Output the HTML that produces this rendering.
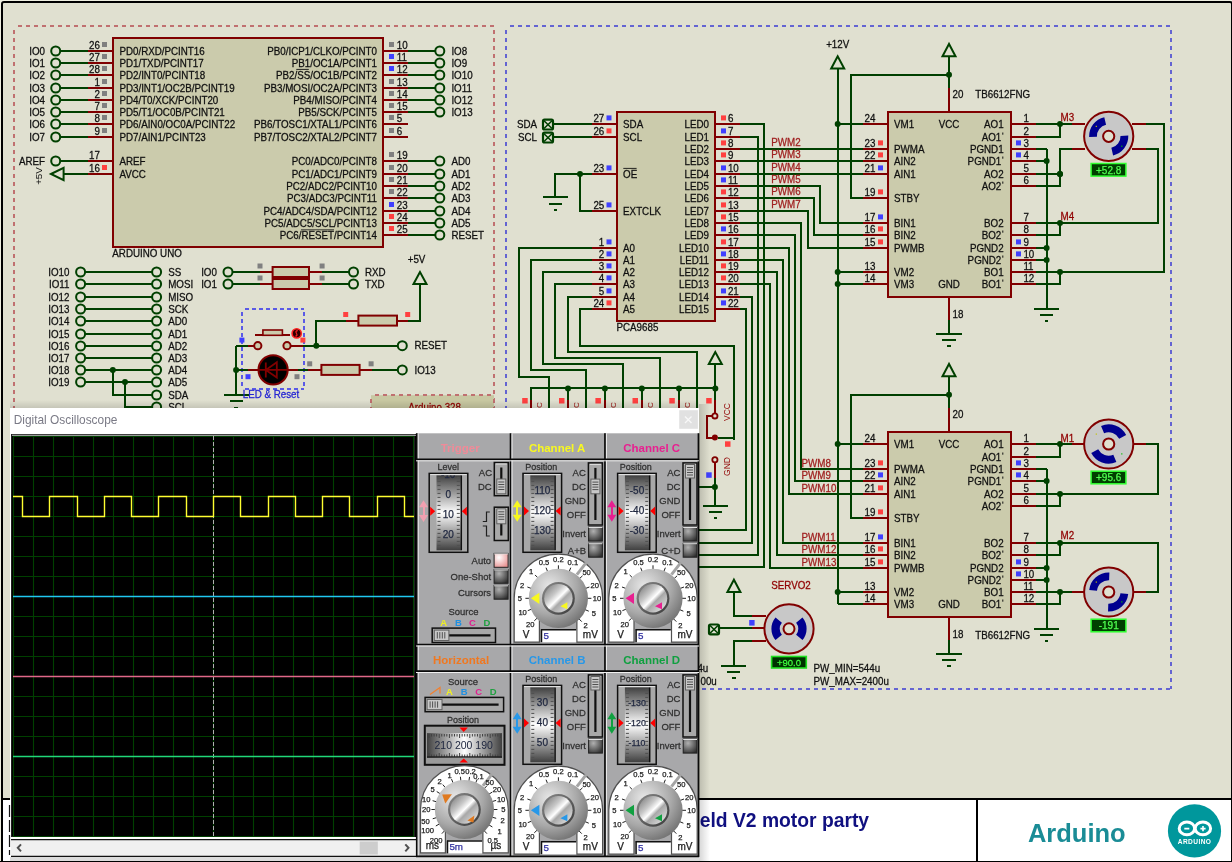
<!DOCTYPE html>
<html><head><meta charset="utf-8"><style>
html,body{margin:0;padding:0;width:1232px;height:862px;overflow:hidden;background:#e0e0d0}
svg{display:block;font-family:"Liberation Sans",sans-serif;will-change:transform}
</style></head><body>
<svg width="1232" height="862" viewBox="0 0 1232 862">
<rect x="0" y="0" width="1232" height="862" fill="#eeeee0"/>
<rect x="2" y="2" width="1229" height="860" fill="rgb(224,224,208)"/>
<line x1="506" y1="26" x2="1171" y2="26" stroke="#6464d2" stroke-width="2" stroke-dasharray="4 4" stroke-dashoffset="4"/>
<line x1="506" y1="26" x2="506" y2="689" stroke="#6464d2" stroke-width="2" stroke-dasharray="4 4" stroke-dashoffset="4"/>
<line x1="1171" y1="26" x2="1171" y2="689" stroke="#6464d2" stroke-width="2" stroke-dasharray="4 4" stroke-dashoffset="4"/>
<line x1="506" y1="689" x2="1171" y2="689" stroke="#6464d2" stroke-width="2" stroke-dasharray="4 4" stroke-dashoffset="4"/>
<rect x="617" y="112" width="98" height="209" fill="rgb(203,203,172)" stroke="#800000" stroke-width="2" />
<polyline fill="none" stroke="#800000" stroke-width="2" points="592,124 617,124"/>
<text transform="translate(623.1 127.5) scale(1 1.02)" font-size="9.8" fill="#101010" text-anchor="start" font-weight="normal" stroke="#101010" stroke-width="0.25" >SDA</text>
<text transform="translate(604.3 121.7) scale(1 1.02)" font-size="9.8" fill="#101010" text-anchor="end" font-weight="normal" stroke="#101010" stroke-width="0.25" >27</text>
<rect x="606.5" y="115.4" width="5" height="5" fill="#4040ff"/>
<polyline fill="none" stroke="#800000" stroke-width="2" points="592,137 617,137"/>
<text transform="translate(623.1 140.5) scale(1 1.02)" font-size="9.8" fill="#101010" text-anchor="start" font-weight="normal" stroke="#101010" stroke-width="0.25" >SCL</text>
<text transform="translate(604.3 134.7) scale(1 1.02)" font-size="9.8" fill="#101010" text-anchor="end" font-weight="normal" stroke="#101010" stroke-width="0.25" >26</text>
<rect x="606.5" y="128.4" width="5" height="5" fill="#ff4040"/>
<polyline fill="none" stroke="#800000" stroke-width="2" points="592,174 617,174"/>
<text transform="translate(623.1 177.5) scale(1 1.02)" font-size="9.8" fill="#101010" text-anchor="start" font-weight="normal" stroke="#101010" stroke-width="0.25" >OE</text>
<text transform="translate(604.3 171.7) scale(1 1.02)" font-size="9.8" fill="#101010" text-anchor="end" font-weight="normal" stroke="#101010" stroke-width="0.25" >23</text>
<rect x="606.5" y="165.4" width="5" height="5" fill="#4040ff"/>
<polyline fill="none" stroke="#800000" stroke-width="2" points="592,211 617,211"/>
<text transform="translate(623.1 214.5) scale(1 1.02)" font-size="9.8" fill="#101010" text-anchor="start" font-weight="normal" stroke="#101010" stroke-width="0.25" >EXTCLK</text>
<text transform="translate(604.3 208.7) scale(1 1.02)" font-size="9.8" fill="#101010" text-anchor="end" font-weight="normal" stroke="#101010" stroke-width="0.25" >25</text>
<rect x="606.5" y="202.4" width="5" height="5" fill="#4040ff"/>
<polyline fill="none" stroke="#800000" stroke-width="2" points="592,248 617,248"/>
<text transform="translate(623.1 251.5) scale(1 1.02)" font-size="9.8" fill="#101010" text-anchor="start" font-weight="normal" stroke="#101010" stroke-width="0.25" >A0</text>
<text transform="translate(604.3 245.7) scale(1 1.02)" font-size="9.8" fill="#101010" text-anchor="end" font-weight="normal" stroke="#101010" stroke-width="0.25" >1</text>
<rect x="606.5" y="239.4" width="5" height="5" fill="#4040ff"/>
<polyline fill="none" stroke="#800000" stroke-width="2" points="592,260 617,260"/>
<text transform="translate(623.1 263.5) scale(1 1.02)" font-size="9.8" fill="#101010" text-anchor="start" font-weight="normal" stroke="#101010" stroke-width="0.25" >A1</text>
<text transform="translate(604.3 257.7) scale(1 1.02)" font-size="9.8" fill="#101010" text-anchor="end" font-weight="normal" stroke="#101010" stroke-width="0.25" >2</text>
<rect x="606.5" y="251.4" width="5" height="5" fill="#4040ff"/>
<polyline fill="none" stroke="#800000" stroke-width="2" points="592,272 617,272"/>
<text transform="translate(623.1 275.5) scale(1 1.02)" font-size="9.8" fill="#101010" text-anchor="start" font-weight="normal" stroke="#101010" stroke-width="0.25" >A2</text>
<text transform="translate(604.3 269.7) scale(1 1.02)" font-size="9.8" fill="#101010" text-anchor="end" font-weight="normal" stroke="#101010" stroke-width="0.25" >3</text>
<rect x="606.5" y="263.4" width="5" height="5" fill="#4040ff"/>
<polyline fill="none" stroke="#800000" stroke-width="2" points="592,284 617,284"/>
<text transform="translate(623.1 287.5) scale(1 1.02)" font-size="9.8" fill="#101010" text-anchor="start" font-weight="normal" stroke="#101010" stroke-width="0.25" >A3</text>
<text transform="translate(604.3 281.7) scale(1 1.02)" font-size="9.8" fill="#101010" text-anchor="end" font-weight="normal" stroke="#101010" stroke-width="0.25" >4</text>
<rect x="606.5" y="275.4" width="5" height="5" fill="#4040ff"/>
<polyline fill="none" stroke="#800000" stroke-width="2" points="592,297 617,297"/>
<text transform="translate(623.1 300.5) scale(1 1.02)" font-size="9.8" fill="#101010" text-anchor="start" font-weight="normal" stroke="#101010" stroke-width="0.25" >A4</text>
<text transform="translate(604.3 294.7) scale(1 1.02)" font-size="9.8" fill="#101010" text-anchor="end" font-weight="normal" stroke="#101010" stroke-width="0.25" >5</text>
<rect x="606.5" y="288.4" width="5" height="5" fill="#4040ff"/>
<polyline fill="none" stroke="#800000" stroke-width="2" points="592,309 617,309"/>
<text transform="translate(623.1 312.5) scale(1 1.02)" font-size="9.8" fill="#101010" text-anchor="start" font-weight="normal" stroke="#101010" stroke-width="0.25" >A5</text>
<text transform="translate(604.3 306.7) scale(1 1.02)" font-size="9.8" fill="#101010" text-anchor="end" font-weight="normal" stroke="#101010" stroke-width="0.25" >24</text>
<rect x="606.5" y="300.4" width="5" height="5" fill="#ff4040"/>
<line x1="623.3" y1="168.4" x2="636.6" y2="168.4" stroke="#101010" stroke-width="0.9"/>
<polyline fill="none" stroke="#800000" stroke-width="2" points="715,124 740,124"/>
<text transform="translate(709 127.5) scale(1 1.02)" font-size="9.8" fill="#101010" text-anchor="end" font-weight="normal" stroke="#101010" stroke-width="0.25" >LED0</text>
<text transform="translate(727.9 121.7) scale(1 1.02)" font-size="9.8" fill="#101010" text-anchor="start" font-weight="normal" stroke="#101010" stroke-width="0.25" >6</text>
<rect x="721" y="115.4" width="5" height="5" fill="#ff4040"/>
<polyline fill="none" stroke="#800000" stroke-width="2" points="715,137 740,137"/>
<text transform="translate(709 140.5) scale(1 1.02)" font-size="9.8" fill="#101010" text-anchor="end" font-weight="normal" stroke="#101010" stroke-width="0.25" >LED1</text>
<text transform="translate(727.9 134.7) scale(1 1.02)" font-size="9.8" fill="#101010" text-anchor="start" font-weight="normal" stroke="#101010" stroke-width="0.25" >7</text>
<rect x="721" y="128.4" width="5" height="5" fill="#4040ff"/>
<polyline fill="none" stroke="#800000" stroke-width="2" points="715,149 740,149"/>
<text transform="translate(709 152.5) scale(1 1.02)" font-size="9.8" fill="#101010" text-anchor="end" font-weight="normal" stroke="#101010" stroke-width="0.25" >LED2</text>
<text transform="translate(727.9 146.7) scale(1 1.02)" font-size="9.8" fill="#101010" text-anchor="start" font-weight="normal" stroke="#101010" stroke-width="0.25" >8</text>
<rect x="721" y="140.4" width="5" height="5" fill="#ff4040"/>
<polyline fill="none" stroke="#800000" stroke-width="2" points="715,161 740,161"/>
<text transform="translate(709 164.5) scale(1 1.02)" font-size="9.8" fill="#101010" text-anchor="end" font-weight="normal" stroke="#101010" stroke-width="0.25" >LED3</text>
<text transform="translate(727.9 158.7) scale(1 1.02)" font-size="9.8" fill="#101010" text-anchor="start" font-weight="normal" stroke="#101010" stroke-width="0.25" >9</text>
<rect x="721" y="152.4" width="5" height="5" fill="#ff4040"/>
<polyline fill="none" stroke="#800000" stroke-width="2" points="715,174 740,174"/>
<text transform="translate(709 177.5) scale(1 1.02)" font-size="9.8" fill="#101010" text-anchor="end" font-weight="normal" stroke="#101010" stroke-width="0.25" >LED4</text>
<text transform="translate(727.9 171.7) scale(1 1.02)" font-size="9.8" fill="#101010" text-anchor="start" font-weight="normal" stroke="#101010" stroke-width="0.25" >10</text>
<rect x="721" y="165.4" width="5" height="5" fill="#4040ff"/>
<polyline fill="none" stroke="#800000" stroke-width="2" points="715,186 740,186"/>
<text transform="translate(709 189.5) scale(1 1.02)" font-size="9.8" fill="#101010" text-anchor="end" font-weight="normal" stroke="#101010" stroke-width="0.25" >LED5</text>
<text transform="translate(727.9 183.7) scale(1 1.02)" font-size="9.8" fill="#101010" text-anchor="start" font-weight="normal" stroke="#101010" stroke-width="0.25" >11</text>
<rect x="721" y="177.4" width="5" height="5" fill="#4040ff"/>
<polyline fill="none" stroke="#800000" stroke-width="2" points="715,198 740,198"/>
<text transform="translate(709 201.5) scale(1 1.02)" font-size="9.8" fill="#101010" text-anchor="end" font-weight="normal" stroke="#101010" stroke-width="0.25" >LED6</text>
<text transform="translate(727.9 195.7) scale(1 1.02)" font-size="9.8" fill="#101010" text-anchor="start" font-weight="normal" stroke="#101010" stroke-width="0.25" >12</text>
<rect x="721" y="189.4" width="5" height="5" fill="#ff4040"/>
<polyline fill="none" stroke="#800000" stroke-width="2" points="715,211 740,211"/>
<text transform="translate(709 214.5) scale(1 1.02)" font-size="9.8" fill="#101010" text-anchor="end" font-weight="normal" stroke="#101010" stroke-width="0.25" >LED7</text>
<text transform="translate(727.9 208.7) scale(1 1.02)" font-size="9.8" fill="#101010" text-anchor="start" font-weight="normal" stroke="#101010" stroke-width="0.25" >13</text>
<rect x="721" y="202.4" width="5" height="5" fill="#ff4040"/>
<polyline fill="none" stroke="#800000" stroke-width="2" points="715,223 740,223"/>
<text transform="translate(709 226.5) scale(1 1.02)" font-size="9.8" fill="#101010" text-anchor="end" font-weight="normal" stroke="#101010" stroke-width="0.25" >LED8</text>
<text transform="translate(727.9 220.7) scale(1 1.02)" font-size="9.8" fill="#101010" text-anchor="start" font-weight="normal" stroke="#101010" stroke-width="0.25" >15</text>
<rect x="721" y="214.4" width="5" height="5" fill="#ff4040"/>
<polyline fill="none" stroke="#800000" stroke-width="2" points="715,235 740,235"/>
<text transform="translate(709 238.5) scale(1 1.02)" font-size="9.8" fill="#101010" text-anchor="end" font-weight="normal" stroke="#101010" stroke-width="0.25" >LED9</text>
<text transform="translate(727.9 232.7) scale(1 1.02)" font-size="9.8" fill="#101010" text-anchor="start" font-weight="normal" stroke="#101010" stroke-width="0.25" >16</text>
<rect x="721" y="226.4" width="5" height="5" fill="#4040ff"/>
<polyline fill="none" stroke="#800000" stroke-width="2" points="715,248 740,248"/>
<text transform="translate(709 251.5) scale(1 1.02)" font-size="9.8" fill="#101010" text-anchor="end" font-weight="normal" stroke="#101010" stroke-width="0.25" >LED10</text>
<text transform="translate(727.9 245.7) scale(1 1.02)" font-size="9.8" fill="#101010" text-anchor="start" font-weight="normal" stroke="#101010" stroke-width="0.25" >17</text>
<rect x="721" y="239.4" width="5" height="5" fill="#ff4040"/>
<polyline fill="none" stroke="#800000" stroke-width="2" points="715,260 740,260"/>
<text transform="translate(709 263.5) scale(1 1.02)" font-size="9.8" fill="#101010" text-anchor="end" font-weight="normal" stroke="#101010" stroke-width="0.25" >LED11</text>
<text transform="translate(727.9 257.7) scale(1 1.02)" font-size="9.8" fill="#101010" text-anchor="start" font-weight="normal" stroke="#101010" stroke-width="0.25" >18</text>
<rect x="721" y="251.4" width="5" height="5" fill="#4040ff"/>
<polyline fill="none" stroke="#800000" stroke-width="2" points="715,272 740,272"/>
<text transform="translate(709 275.5) scale(1 1.02)" font-size="9.8" fill="#101010" text-anchor="end" font-weight="normal" stroke="#101010" stroke-width="0.25" >LED12</text>
<text transform="translate(727.9 269.7) scale(1 1.02)" font-size="9.8" fill="#101010" text-anchor="start" font-weight="normal" stroke="#101010" stroke-width="0.25" >19</text>
<rect x="721" y="263.4" width="5" height="5" fill="#ff4040"/>
<polyline fill="none" stroke="#800000" stroke-width="2" points="715,284 740,284"/>
<text transform="translate(709 287.5) scale(1 1.02)" font-size="9.8" fill="#101010" text-anchor="end" font-weight="normal" stroke="#101010" stroke-width="0.25" >LED13</text>
<text transform="translate(727.9 281.7) scale(1 1.02)" font-size="9.8" fill="#101010" text-anchor="start" font-weight="normal" stroke="#101010" stroke-width="0.25" >20</text>
<rect x="721" y="275.4" width="5" height="5" fill="#ff4040"/>
<polyline fill="none" stroke="#800000" stroke-width="2" points="715,297 740,297"/>
<text transform="translate(709 300.5) scale(1 1.02)" font-size="9.8" fill="#101010" text-anchor="end" font-weight="normal" stroke="#101010" stroke-width="0.25" >LED14</text>
<text transform="translate(727.9 294.7) scale(1 1.02)" font-size="9.8" fill="#101010" text-anchor="start" font-weight="normal" stroke="#101010" stroke-width="0.25" >21</text>
<rect x="721" y="288.4" width="5" height="5" fill="#4040ff"/>
<polyline fill="none" stroke="#800000" stroke-width="2" points="715,309 740,309"/>
<text transform="translate(709 312.5) scale(1 1.02)" font-size="9.8" fill="#101010" text-anchor="end" font-weight="normal" stroke="#101010" stroke-width="0.25" >LED15</text>
<text transform="translate(727.9 306.7) scale(1 1.02)" font-size="9.8" fill="#101010" text-anchor="start" font-weight="normal" stroke="#101010" stroke-width="0.25" >22</text>
<rect x="721" y="300.4" width="5" height="5" fill="#4040ff"/>
<text transform="translate(616.5 330.6) scale(1 1.02)" font-size="9.8" fill="#101010" text-anchor="start" font-weight="normal" stroke="#101010" stroke-width="0.25" >PCA9685</text>
<rect x="543" y="119.7" width="10" height="9.8" rx="1.5" fill="none" stroke="#004000" stroke-width="2.2"/>
<path d="M544 120.7 L552 128.5 M544 128.5 L552 120.7" stroke="#004000" stroke-width="1.6"/>
<text transform="translate(537 127.5) scale(1 1.02)" font-size="9.8" fill="#101010" text-anchor="end" font-weight="normal" stroke="#101010" stroke-width="0.25" >SDA</text>
<polyline fill="none" stroke="#004000" stroke-width="2" points="554,124 592,124"/>
<rect x="543" y="132.7" width="10" height="9.8" rx="1.5" fill="none" stroke="#004000" stroke-width="2.2"/>
<path d="M544 133.7 L552 141.5 M544 141.5 L552 133.7" stroke="#004000" stroke-width="1.6"/>
<text transform="translate(537 140.5) scale(1 1.02)" font-size="9.8" fill="#101010" text-anchor="end" font-weight="normal" stroke="#101010" stroke-width="0.25" >SCL</text>
<polyline fill="none" stroke="#004000" stroke-width="2" points="554,137 592,137"/>
<polyline fill="none" stroke="#004000" stroke-width="2" points="592,174 555,174 555,197"/>
<line x1="543" y1="197" x2="568" y2="197" stroke="#004000" stroke-width="2"/>
<line x1="549" y1="204" x2="562" y2="204" stroke="#004000" stroke-width="2"/>
<line x1="554" y1="210" x2="557" y2="210" stroke="#004000" stroke-width="2"/>
<polyline fill="none" stroke="#004000" stroke-width="2" points="580,174 580,211 592,211"/>
<circle cx="580" cy="174" r="3" fill="#004000"/>
<polyline fill="none" stroke="#004000" stroke-width="2" points="592,248 519,248 519,377 549,377 549,410"/>
<polyline fill="none" stroke="#004000" stroke-width="2" points="592,260 531,260 531,370 586,370 586,410"/>
<polyline fill="none" stroke="#004000" stroke-width="2" points="592,272 543,272 543,364 623,364 623,410"/>
<polyline fill="none" stroke="#004000" stroke-width="2" points="592,284 555,284 555,358 660,358 660,410"/>
<polyline fill="none" stroke="#004000" stroke-width="2" points="592,297 568,297 568,352 697,352 697,410"/>
<polyline fill="none" stroke="#004000" stroke-width="2" points="592,309 580,309 580,346 734,346 734,440"/>
<polyline fill="none" stroke="#004000" stroke-width="2" points="531,400 531,388 715,388"/>
<circle cx="568" cy="388.5" r="3" fill="#004000"/>
<circle cx="604.9" cy="388.5" r="3" fill="#004000"/>
<circle cx="641.8" cy="388.5" r="3" fill="#004000"/>
<circle cx="679" cy="388.5" r="3" fill="#004000"/>
<circle cx="715.3" cy="388.5" r="3" fill="#004000"/>
<polyline fill="none" stroke="#004000" stroke-width="2" points="531,388 531,400"/>
<polyline fill="none" stroke="#800000" stroke-width="2" points="531,400 531,410"/>
<text transform="translate(541.6,405) rotate(-90)" font-size="8" fill="#900000" text-anchor="middle">C</text>
<polyline fill="none" stroke="#004000" stroke-width="2" points="568,388 568,400"/>
<polyline fill="none" stroke="#800000" stroke-width="2" points="568,400 568,410"/>
<text transform="translate(579,405) rotate(-90)" font-size="8" fill="#900000" text-anchor="middle">C</text>
<polyline fill="none" stroke="#004000" stroke-width="2" points="605,388 605,400"/>
<polyline fill="none" stroke="#800000" stroke-width="2" points="605,400 605,410"/>
<text transform="translate(615.9,405) rotate(-90)" font-size="8" fill="#900000" text-anchor="middle">C</text>
<polyline fill="none" stroke="#004000" stroke-width="2" points="642,388 642,400"/>
<polyline fill="none" stroke="#800000" stroke-width="2" points="642,400 642,410"/>
<text transform="translate(652.8,405) rotate(-90)" font-size="8" fill="#900000" text-anchor="middle">C</text>
<polyline fill="none" stroke="#004000" stroke-width="2" points="679,388 679,400"/>
<polyline fill="none" stroke="#800000" stroke-width="2" points="679,400 679,410"/>
<text transform="translate(690,405) rotate(-90)" font-size="8" fill="#900000" text-anchor="middle">C</text>
<rect x="522.2" y="398" width="5.5" height="5.5" fill="#ff4040"/>
<rect x="559" y="398" width="5.5" height="5.5" fill="#ff4040"/>
<rect x="595.4" y="398" width="5.5" height="5.5" fill="#ff4040"/>
<rect x="632.5" y="398" width="5.5" height="5.5" fill="#ff4040"/>
<rect x="669.3" y="398" width="5.5" height="5.5" fill="#ff4040"/>
<rect x="706.2" y="398" width="5.5" height="5.5" fill="#ff4040"/>
<polyline fill="none" stroke="#004000" stroke-width="2" points="715,364 715,400"/>
<polygon points="715.3,352 708.8,364.1 721.8,364.1" fill="none" stroke="#004000" stroke-width="2" stroke-linejoin="miter"/>
<polyline fill="none" stroke="#800000" stroke-width="2" points="715,400 715,413"/>
<polyline fill="none" stroke="#800000" stroke-width="2" points="713,416 707,416 707,438 715,438"/>
<circle cx="714.9" cy="415.9" r="2.6" fill="rgb(224,224,208)" stroke="#800000" stroke-width="1.8"/>
<circle cx="714.9" cy="437.6" r="3" fill="#800000"/>
<polyline fill="none" stroke="#004000" stroke-width="2" points="718,438 734,438 734,410"/>
<text transform="translate(729.5,412) rotate(-90)" font-size="8.5" fill="#900000" text-anchor="middle">VCC</text>
<rect x="725" y="441.3" width="5.5" height="5.5" fill="#ff4040"/>
<circle cx="714.9" cy="459.8" r="2.6" fill="rgb(224,224,208)" stroke="#800000" stroke-width="1.8"/>
<polyline fill="none" stroke="#800000" stroke-width="2" points="715,462 715,478"/>
<polyline fill="none" stroke="#004000" stroke-width="2" points="715,478 715,506"/>
<circle cx="714.9" cy="487" r="3" fill="#004000"/>
<polyline fill="none" stroke="#004000" stroke-width="2" points="699,487 715,487"/>
<line x1="703" y1="506" x2="728" y2="506" stroke="#004000" stroke-width="2"/>
<line x1="709" y1="512" x2="722" y2="512" stroke="#004000" stroke-width="2"/>
<line x1="714" y1="518" x2="717" y2="518" stroke="#004000" stroke-width="2"/>
<text transform="translate(729.5,466.5) rotate(-90)" font-size="8.5" fill="#900000" text-anchor="middle">GND</text>
<rect x="706.2" y="472.3" width="5.5" height="5.5" fill="#4040ff"/>
<line x1="14" y1="26" x2="494" y2="26" stroke="#c07070" stroke-width="2" stroke-dasharray="4 4" stroke-dashoffset="4"/>
<line x1="14" y1="26" x2="14" y2="446" stroke="#c07070" stroke-width="2" stroke-dasharray="4 4" stroke-dashoffset="4"/>
<line x1="494" y1="26" x2="494" y2="446" stroke="#c07070" stroke-width="2" stroke-dasharray="4 4" stroke-dashoffset="4"/>
<line x1="14" y1="446" x2="494" y2="446" stroke="#c07070" stroke-width="2" stroke-dasharray="4 4" stroke-dashoffset="4"/>
<rect x="113" y="38" width="270" height="209" fill="rgb(203,203,172)" stroke="#800000" stroke-width="2" />
<circle cx="55.7" cy="51" r="4.5" fill="none" stroke="#004000" stroke-width="2"/>
<polyline fill="none" stroke="#004000" stroke-width="2" points="60,51 88,51"/>
<polyline fill="none" stroke="#800000" stroke-width="2" points="88,51 113,51"/>
<text transform="translate(45 54.5) scale(1 1.02)" font-size="9.8" fill="#101010" text-anchor="end" font-weight="normal" stroke="#101010" stroke-width="0.25" >IO0</text>
<text transform="translate(100 48.7) scale(1 1.02)" font-size="9.8" fill="#101010" text-anchor="end" font-weight="normal" stroke="#101010" stroke-width="0.25" >26</text>
<rect x="102" y="42" width="5" height="5" fill="#808080"/>
<text transform="translate(119.4 54.5) scale(1 1.02)" font-size="9.8" fill="#101010" text-anchor="start" font-weight="normal" stroke="#101010" stroke-width="0.25" >PD0/RXD/PCINT16</text>
<circle cx="55.7" cy="63" r="4.5" fill="none" stroke="#004000" stroke-width="2"/>
<polyline fill="none" stroke="#004000" stroke-width="2" points="60,63 88,63"/>
<polyline fill="none" stroke="#800000" stroke-width="2" points="88,63 113,63"/>
<text transform="translate(45 66.5) scale(1 1.02)" font-size="9.8" fill="#101010" text-anchor="end" font-weight="normal" stroke="#101010" stroke-width="0.25" >IO1</text>
<text transform="translate(100 60.7) scale(1 1.02)" font-size="9.8" fill="#101010" text-anchor="end" font-weight="normal" stroke="#101010" stroke-width="0.25" >27</text>
<rect x="102" y="54" width="5" height="5" fill="#808080"/>
<text transform="translate(119.4 66.5) scale(1 1.02)" font-size="9.8" fill="#101010" text-anchor="start" font-weight="normal" stroke="#101010" stroke-width="0.25" >PD1/TXD/PCINT17</text>
<circle cx="55.7" cy="75" r="4.5" fill="none" stroke="#004000" stroke-width="2"/>
<polyline fill="none" stroke="#004000" stroke-width="2" points="60,75 88,75"/>
<polyline fill="none" stroke="#800000" stroke-width="2" points="88,75 113,75"/>
<text transform="translate(45 78.5) scale(1 1.02)" font-size="9.8" fill="#101010" text-anchor="end" font-weight="normal" stroke="#101010" stroke-width="0.25" >IO2</text>
<text transform="translate(100 72.7) scale(1 1.02)" font-size="9.8" fill="#101010" text-anchor="end" font-weight="normal" stroke="#101010" stroke-width="0.25" >28</text>
<rect x="102" y="66" width="5" height="5" fill="#808080"/>
<text transform="translate(119.4 78.5) scale(1 1.02)" font-size="9.8" fill="#101010" text-anchor="start" font-weight="normal" stroke="#101010" stroke-width="0.25" >PD2/INT0/PCINT18</text>
<circle cx="55.7" cy="88" r="4.5" fill="none" stroke="#004000" stroke-width="2"/>
<polyline fill="none" stroke="#004000" stroke-width="2" points="60,88 88,88"/>
<polyline fill="none" stroke="#800000" stroke-width="2" points="88,88 113,88"/>
<text transform="translate(45 91.5) scale(1 1.02)" font-size="9.8" fill="#101010" text-anchor="end" font-weight="normal" stroke="#101010" stroke-width="0.25" >IO3</text>
<text transform="translate(100 85.7) scale(1 1.02)" font-size="9.8" fill="#101010" text-anchor="end" font-weight="normal" stroke="#101010" stroke-width="0.25" >1</text>
<rect x="102" y="79" width="5" height="5" fill="#808080"/>
<text transform="translate(119.4 91.5) scale(1 1.02)" font-size="9.8" fill="#101010" text-anchor="start" font-weight="normal" stroke="#101010" stroke-width="0.25" >PD3/INT1/OC2B/PCINT19</text>
<circle cx="55.7" cy="100" r="4.5" fill="none" stroke="#004000" stroke-width="2"/>
<polyline fill="none" stroke="#004000" stroke-width="2" points="60,100 88,100"/>
<polyline fill="none" stroke="#800000" stroke-width="2" points="88,100 113,100"/>
<text transform="translate(45 103.5) scale(1 1.02)" font-size="9.8" fill="#101010" text-anchor="end" font-weight="normal" stroke="#101010" stroke-width="0.25" >IO4</text>
<text transform="translate(100 97.7) scale(1 1.02)" font-size="9.8" fill="#101010" text-anchor="end" font-weight="normal" stroke="#101010" stroke-width="0.25" >2</text>
<rect x="102" y="91" width="5" height="5" fill="#808080"/>
<text transform="translate(119.4 103.5) scale(1 1.02)" font-size="9.8" fill="#101010" text-anchor="start" font-weight="normal" stroke="#101010" stroke-width="0.25" >PD4/T0/XCK/PCINT20</text>
<circle cx="55.7" cy="112" r="4.5" fill="none" stroke="#004000" stroke-width="2"/>
<polyline fill="none" stroke="#004000" stroke-width="2" points="60,112 88,112"/>
<polyline fill="none" stroke="#800000" stroke-width="2" points="88,112 113,112"/>
<text transform="translate(45 115.5) scale(1 1.02)" font-size="9.8" fill="#101010" text-anchor="end" font-weight="normal" stroke="#101010" stroke-width="0.25" >IO5</text>
<text transform="translate(100 109.7) scale(1 1.02)" font-size="9.8" fill="#101010" text-anchor="end" font-weight="normal" stroke="#101010" stroke-width="0.25" >7</text>
<rect x="102" y="103" width="5" height="5" fill="#808080"/>
<text transform="translate(119.4 115.5) scale(1 1.02)" font-size="9.8" fill="#101010" text-anchor="start" font-weight="normal" stroke="#101010" stroke-width="0.25" >PD5/T1/OC0B/PCINT21</text>
<circle cx="55.7" cy="124" r="4.5" fill="none" stroke="#004000" stroke-width="2"/>
<polyline fill="none" stroke="#004000" stroke-width="2" points="60,124 88,124"/>
<polyline fill="none" stroke="#800000" stroke-width="2" points="88,124 113,124"/>
<text transform="translate(45 127.5) scale(1 1.02)" font-size="9.8" fill="#101010" text-anchor="end" font-weight="normal" stroke="#101010" stroke-width="0.25" >IO6</text>
<text transform="translate(100 121.7) scale(1 1.02)" font-size="9.8" fill="#101010" text-anchor="end" font-weight="normal" stroke="#101010" stroke-width="0.25" >8</text>
<rect x="102" y="115" width="5" height="5" fill="#808080"/>
<text transform="translate(119.4 127.5) scale(1 1.02)" font-size="9.8" fill="#101010" text-anchor="start" font-weight="normal" stroke="#101010" stroke-width="0.25" >PD6/AIN0/OC0A/PCINT22</text>
<circle cx="55.7" cy="137" r="4.5" fill="none" stroke="#004000" stroke-width="2"/>
<polyline fill="none" stroke="#004000" stroke-width="2" points="60,137 88,137"/>
<polyline fill="none" stroke="#800000" stroke-width="2" points="88,137 113,137"/>
<text transform="translate(45 140.5) scale(1 1.02)" font-size="9.8" fill="#101010" text-anchor="end" font-weight="normal" stroke="#101010" stroke-width="0.25" >IO7</text>
<text transform="translate(100 134.7) scale(1 1.02)" font-size="9.8" fill="#101010" text-anchor="end" font-weight="normal" stroke="#101010" stroke-width="0.25" >9</text>
<rect x="102" y="128" width="5" height="5" fill="#808080"/>
<text transform="translate(119.4 140.5) scale(1 1.02)" font-size="9.8" fill="#101010" text-anchor="start" font-weight="normal" stroke="#101010" stroke-width="0.25" >PD7/AIN1/PCINT23</text>
<circle cx="55.7" cy="161" r="4.5" fill="none" stroke="#004000" stroke-width="2"/>
<polyline fill="none" stroke="#004000" stroke-width="2" points="60,161 88,161"/>
<polyline fill="none" stroke="#800000" stroke-width="2" points="88,161 113,161"/>
<text transform="translate(45 164.5) scale(1 1.02)" font-size="9.8" fill="#101010" text-anchor="end" font-weight="normal" stroke="#101010" stroke-width="0.25" >AREF</text>
<text transform="translate(100 158.7) scale(1 1.02)" font-size="9.8" fill="#101010" text-anchor="end" font-weight="normal" stroke="#101010" stroke-width="0.25" >17</text>
<text transform="translate(119.4 164.5) scale(1 1.02)" font-size="9.8" fill="#101010" text-anchor="start" font-weight="normal" stroke="#101010" stroke-width="0.25" >AREF</text>
<polygon points="51,174 63.6,167.8 63.6,180.2" fill="none" stroke="#004000" stroke-width="2"/>
<polyline fill="none" stroke="#004000" stroke-width="2" points="64,174 88,174"/>
<polyline fill="none" stroke="#800000" stroke-width="2" points="88,174 113,174"/>
<text transform="translate(100 171.7) scale(1 1.02)" font-size="9.8" fill="#101010" text-anchor="end" font-weight="normal" stroke="#101010" stroke-width="0.25" >16</text>
<rect x="102" y="165" width="5" height="5" fill="#ff4040"/>
<text transform="translate(119.4 177.5) scale(1 1.02)" font-size="9.8" fill="#101010" text-anchor="start" font-weight="normal" stroke="#101010" stroke-width="0.25" >AVCC</text>
<text transform="translate(42.3,176) rotate(-90)" font-size="9.8" fill="#101010" text-anchor="middle">+5V</text>
<polyline fill="none" stroke="#800000" stroke-width="2" points="383,51 408,51"/>
<polyline fill="none" stroke="#004000" stroke-width="2" points="408,51 435,51"/>
<circle cx="439.8" cy="51" r="4.5" fill="none" stroke="#004000" stroke-width="2"/>
<text transform="translate(451.4 54.5) scale(1 1.02)" font-size="9.8" fill="#101010" text-anchor="start" font-weight="normal" stroke="#101010" stroke-width="0.25" >IO8</text>
<text transform="translate(396.8 48.7) scale(1 1.02)" font-size="9.8" fill="#101010" text-anchor="start" font-weight="normal" stroke="#101010" stroke-width="0.25" >10</text>
<rect x="389" y="42" width="5" height="5" fill="#808080"/>
<text transform="translate(377 54.5) scale(1 1.02)" font-size="9.8" fill="#101010" text-anchor="end" font-weight="normal" stroke="#101010" stroke-width="0.25" >PB0/ICP1/CLKO/PCINT0</text>
<polyline fill="none" stroke="#800000" stroke-width="2" points="383,63 408,63"/>
<polyline fill="none" stroke="#004000" stroke-width="2" points="408,63 435,63"/>
<circle cx="439.8" cy="63" r="4.5" fill="none" stroke="#004000" stroke-width="2"/>
<text transform="translate(451.4 66.5) scale(1 1.02)" font-size="9.8" fill="#101010" text-anchor="start" font-weight="normal" stroke="#101010" stroke-width="0.25" >IO9</text>
<text transform="translate(396.8 60.7) scale(1 1.02)" font-size="9.8" fill="#101010" text-anchor="start" font-weight="normal" stroke="#101010" stroke-width="0.25" >11</text>
<rect x="389" y="54" width="5" height="5" fill="#4040ff"/>
<text transform="translate(377 66.5) scale(1 1.02)" font-size="9.8" fill="#101010" text-anchor="end" font-weight="normal" stroke="#101010" stroke-width="0.25" >PB1/OC1A/PCINT1</text>
<polyline fill="none" stroke="#800000" stroke-width="2" points="383,75 408,75"/>
<polyline fill="none" stroke="#004000" stroke-width="2" points="408,75 435,75"/>
<circle cx="439.8" cy="75" r="4.5" fill="none" stroke="#004000" stroke-width="2"/>
<text transform="translate(451.4 78.5) scale(1 1.02)" font-size="9.8" fill="#101010" text-anchor="start" font-weight="normal" stroke="#101010" stroke-width="0.25" >IO10</text>
<text transform="translate(396.8 72.7) scale(1 1.02)" font-size="9.8" fill="#101010" text-anchor="start" font-weight="normal" stroke="#101010" stroke-width="0.25" >12</text>
<rect x="389" y="66" width="5" height="5" fill="#4040ff"/>
<text transform="translate(377 78.5) scale(1 1.02)" font-size="9.8" fill="#101010" text-anchor="end" font-weight="normal" stroke="#101010" stroke-width="0.25" >PB2/SS/OC1B/PCINT2</text>
<polyline fill="none" stroke="#800000" stroke-width="2" points="383,88 408,88"/>
<polyline fill="none" stroke="#004000" stroke-width="2" points="408,88 435,88"/>
<circle cx="439.8" cy="88" r="4.5" fill="none" stroke="#004000" stroke-width="2"/>
<text transform="translate(451.4 91.5) scale(1 1.02)" font-size="9.8" fill="#101010" text-anchor="start" font-weight="normal" stroke="#101010" stroke-width="0.25" >IO11</text>
<text transform="translate(396.8 85.7) scale(1 1.02)" font-size="9.8" fill="#101010" text-anchor="start" font-weight="normal" stroke="#101010" stroke-width="0.25" >13</text>
<rect x="389" y="79" width="5" height="5" fill="#808080"/>
<text transform="translate(377 91.5) scale(1 1.02)" font-size="9.8" fill="#101010" text-anchor="end" font-weight="normal" stroke="#101010" stroke-width="0.25" >PB3/MOSI/OC2A/PCINT3</text>
<polyline fill="none" stroke="#800000" stroke-width="2" points="383,100 408,100"/>
<polyline fill="none" stroke="#004000" stroke-width="2" points="408,100 435,100"/>
<circle cx="439.8" cy="100" r="4.5" fill="none" stroke="#004000" stroke-width="2"/>
<text transform="translate(451.4 103.5) scale(1 1.02)" font-size="9.8" fill="#101010" text-anchor="start" font-weight="normal" stroke="#101010" stroke-width="0.25" >IO12</text>
<text transform="translate(396.8 97.7) scale(1 1.02)" font-size="9.8" fill="#101010" text-anchor="start" font-weight="normal" stroke="#101010" stroke-width="0.25" >14</text>
<rect x="389" y="91" width="5" height="5" fill="#808080"/>
<text transform="translate(377 103.5) scale(1 1.02)" font-size="9.8" fill="#101010" text-anchor="end" font-weight="normal" stroke="#101010" stroke-width="0.25" >PB4/MISO/PCINT4</text>
<polyline fill="none" stroke="#800000" stroke-width="2" points="383,112 408,112"/>
<polyline fill="none" stroke="#004000" stroke-width="2" points="408,112 435,112"/>
<circle cx="439.8" cy="112" r="4.5" fill="none" stroke="#004000" stroke-width="2"/>
<text transform="translate(451.4 115.5) scale(1 1.02)" font-size="9.8" fill="#101010" text-anchor="start" font-weight="normal" stroke="#101010" stroke-width="0.25" >IO13</text>
<text transform="translate(396.8 109.7) scale(1 1.02)" font-size="9.8" fill="#101010" text-anchor="start" font-weight="normal" stroke="#101010" stroke-width="0.25" >15</text>
<rect x="389" y="103" width="5" height="5" fill="#808080"/>
<text transform="translate(377 115.5) scale(1 1.02)" font-size="9.8" fill="#101010" text-anchor="end" font-weight="normal" stroke="#101010" stroke-width="0.25" >PB5/SCK/PCINT5</text>
<polyline fill="none" stroke="#800000" stroke-width="2" points="383,124 408,124"/>
<text transform="translate(396.8 121.7) scale(1 1.02)" font-size="9.8" fill="#101010" text-anchor="start" font-weight="normal" stroke="#101010" stroke-width="0.25" >5</text>
<rect x="389" y="115" width="5" height="5" fill="#808080"/>
<text transform="translate(377 127.5) scale(1 1.02)" font-size="9.8" fill="#101010" text-anchor="end" font-weight="normal" stroke="#101010" stroke-width="0.25" >PB6/TOSC1/XTAL1/PCINT6</text>
<polyline fill="none" stroke="#800000" stroke-width="2" points="383,137 408,137"/>
<text transform="translate(396.8 134.7) scale(1 1.02)" font-size="9.8" fill="#101010" text-anchor="start" font-weight="normal" stroke="#101010" stroke-width="0.25" >6</text>
<rect x="389" y="128" width="5" height="5" fill="#808080"/>
<text transform="translate(377 140.5) scale(1 1.02)" font-size="9.8" fill="#101010" text-anchor="end" font-weight="normal" stroke="#101010" stroke-width="0.25" >PB7/TOSC2/XTAL2/PCINT7</text>
<polyline fill="none" stroke="#800000" stroke-width="2" points="383,161 408,161"/>
<polyline fill="none" stroke="#004000" stroke-width="2" points="408,161 435,161"/>
<circle cx="439.8" cy="161" r="4.5" fill="none" stroke="#004000" stroke-width="2"/>
<text transform="translate(451.4 164.5) scale(1 1.02)" font-size="9.8" fill="#101010" text-anchor="start" font-weight="normal" stroke="#101010" stroke-width="0.25" >AD0</text>
<text transform="translate(396.8 158.7) scale(1 1.02)" font-size="9.8" fill="#101010" text-anchor="start" font-weight="normal" stroke="#101010" stroke-width="0.25" >19</text>
<rect x="389" y="152" width="5" height="5" fill="#808080"/>
<text transform="translate(377 164.5) scale(1 1.02)" font-size="9.8" fill="#101010" text-anchor="end" font-weight="normal" stroke="#101010" stroke-width="0.25" >PC0/ADC0/PCINT8</text>
<polyline fill="none" stroke="#800000" stroke-width="2" points="383,174 408,174"/>
<polyline fill="none" stroke="#004000" stroke-width="2" points="408,174 435,174"/>
<circle cx="439.8" cy="174" r="4.5" fill="none" stroke="#004000" stroke-width="2"/>
<text transform="translate(451.4 177.5) scale(1 1.02)" font-size="9.8" fill="#101010" text-anchor="start" font-weight="normal" stroke="#101010" stroke-width="0.25" >AD1</text>
<text transform="translate(396.8 171.7) scale(1 1.02)" font-size="9.8" fill="#101010" text-anchor="start" font-weight="normal" stroke="#101010" stroke-width="0.25" >20</text>
<rect x="389" y="165" width="5" height="5" fill="#808080"/>
<text transform="translate(377 177.5) scale(1 1.02)" font-size="9.8" fill="#101010" text-anchor="end" font-weight="normal" stroke="#101010" stroke-width="0.25" >PC1/ADC1/PCINT9</text>
<polyline fill="none" stroke="#800000" stroke-width="2" points="383,186 408,186"/>
<polyline fill="none" stroke="#004000" stroke-width="2" points="408,186 435,186"/>
<circle cx="439.8" cy="186" r="4.5" fill="none" stroke="#004000" stroke-width="2"/>
<text transform="translate(451.4 189.5) scale(1 1.02)" font-size="9.8" fill="#101010" text-anchor="start" font-weight="normal" stroke="#101010" stroke-width="0.25" >AD2</text>
<text transform="translate(396.8 183.7) scale(1 1.02)" font-size="9.8" fill="#101010" text-anchor="start" font-weight="normal" stroke="#101010" stroke-width="0.25" >21</text>
<rect x="389" y="177" width="5" height="5" fill="#808080"/>
<text transform="translate(377 189.5) scale(1 1.02)" font-size="9.8" fill="#101010" text-anchor="end" font-weight="normal" stroke="#101010" stroke-width="0.25" >PC2/ADC2/PCINT10</text>
<polyline fill="none" stroke="#800000" stroke-width="2" points="383,198 408,198"/>
<polyline fill="none" stroke="#004000" stroke-width="2" points="408,198 435,198"/>
<circle cx="439.8" cy="198" r="4.5" fill="none" stroke="#004000" stroke-width="2"/>
<text transform="translate(451.4 201.5) scale(1 1.02)" font-size="9.8" fill="#101010" text-anchor="start" font-weight="normal" stroke="#101010" stroke-width="0.25" >AD3</text>
<text transform="translate(396.8 195.7) scale(1 1.02)" font-size="9.8" fill="#101010" text-anchor="start" font-weight="normal" stroke="#101010" stroke-width="0.25" >22</text>
<rect x="389" y="189" width="5" height="5" fill="#808080"/>
<text transform="translate(377 201.5) scale(1 1.02)" font-size="9.8" fill="#101010" text-anchor="end" font-weight="normal" stroke="#101010" stroke-width="0.25" >PC3/ADC3/PCINT11</text>
<polyline fill="none" stroke="#800000" stroke-width="2" points="383,211 408,211"/>
<polyline fill="none" stroke="#004000" stroke-width="2" points="408,211 435,211"/>
<circle cx="439.8" cy="211" r="4.5" fill="none" stroke="#004000" stroke-width="2"/>
<text transform="translate(451.4 214.5) scale(1 1.02)" font-size="9.8" fill="#101010" text-anchor="start" font-weight="normal" stroke="#101010" stroke-width="0.25" >AD4</text>
<text transform="translate(396.8 208.7) scale(1 1.02)" font-size="9.8" fill="#101010" text-anchor="start" font-weight="normal" stroke="#101010" stroke-width="0.25" >23</text>
<rect x="389" y="202" width="5" height="5" fill="#4040ff"/>
<text transform="translate(377 214.5) scale(1 1.02)" font-size="9.8" fill="#101010" text-anchor="end" font-weight="normal" stroke="#101010" stroke-width="0.25" >PC4/ADC4/SDA/PCINT12</text>
<polyline fill="none" stroke="#800000" stroke-width="2" points="383,223 408,223"/>
<polyline fill="none" stroke="#004000" stroke-width="2" points="408,223 435,223"/>
<circle cx="439.8" cy="223" r="4.5" fill="none" stroke="#004000" stroke-width="2"/>
<text transform="translate(451.4 226.5) scale(1 1.02)" font-size="9.8" fill="#101010" text-anchor="start" font-weight="normal" stroke="#101010" stroke-width="0.25" >AD5</text>
<text transform="translate(396.8 220.7) scale(1 1.02)" font-size="9.8" fill="#101010" text-anchor="start" font-weight="normal" stroke="#101010" stroke-width="0.25" >24</text>
<rect x="389" y="214" width="5" height="5" fill="#ff4040"/>
<text transform="translate(377 226.5) scale(1 1.02)" font-size="9.8" fill="#101010" text-anchor="end" font-weight="normal" stroke="#101010" stroke-width="0.25" >PC5/ADC5/SCL/PCINT13</text>
<polyline fill="none" stroke="#800000" stroke-width="2" points="383,235 408,235"/>
<polyline fill="none" stroke="#004000" stroke-width="2" points="408,235 435,235"/>
<circle cx="439.8" cy="235" r="4.5" fill="none" stroke="#004000" stroke-width="2"/>
<text transform="translate(451.4 238.5) scale(1 1.02)" font-size="9.8" fill="#101010" text-anchor="start" font-weight="normal" stroke="#101010" stroke-width="0.25" >RESET</text>
<text transform="translate(396.8 232.7) scale(1 1.02)" font-size="9.8" fill="#101010" text-anchor="start" font-weight="normal" stroke="#101010" stroke-width="0.25" >25</text>
<rect x="389" y="226" width="5" height="5" fill="#ff4040"/>
<text transform="translate(377 238.5) scale(1 1.02)" font-size="9.8" fill="#101010" text-anchor="end" font-weight="normal" stroke="#101010" stroke-width="0.25" >PC6/RESET/PCINT14</text>
<line x1="296.3" y1="69.4" x2="308.8" y2="69.4" stroke="#101010" stroke-width="0.9"/>
<line x1="301" y1="229.8" x2="334" y2="229.8" stroke="#101010" stroke-width="0.8"/>
<text transform="translate(112.3 256.6) scale(1 1.02)" font-size="9.8" fill="#101010" text-anchor="start" font-weight="normal" stroke="#101010" stroke-width="0.25" >ARDUINO UNO</text>
<circle cx="80.6" cy="272" r="4.5" fill="none" stroke="#004000" stroke-width="2"/>
<text transform="translate(69.5 275.5) scale(1 1.02)" font-size="9.8" fill="#101010" text-anchor="end" font-weight="normal" stroke="#101010" stroke-width="0.25" >IO10</text>
<circle cx="156.6" cy="272" r="4.5" fill="none" stroke="#004000" stroke-width="2"/>
<text transform="translate(168.2 275.5) scale(1 1.02)" font-size="9.8" fill="#101010" text-anchor="start" font-weight="normal" stroke="#101010" stroke-width="0.25" >SS</text>
<polyline fill="none" stroke="#004000" stroke-width="2" points="85,272 152,272"/>
<circle cx="80.6" cy="284" r="4.5" fill="none" stroke="#004000" stroke-width="2"/>
<text transform="translate(69.5 287.5) scale(1 1.02)" font-size="9.8" fill="#101010" text-anchor="end" font-weight="normal" stroke="#101010" stroke-width="0.25" >IO11</text>
<circle cx="156.6" cy="284" r="4.5" fill="none" stroke="#004000" stroke-width="2"/>
<text transform="translate(168.2 287.5) scale(1 1.02)" font-size="9.8" fill="#101010" text-anchor="start" font-weight="normal" stroke="#101010" stroke-width="0.25" >MOSI</text>
<polyline fill="none" stroke="#004000" stroke-width="2" points="85,284 152,284"/>
<circle cx="80.6" cy="297" r="4.5" fill="none" stroke="#004000" stroke-width="2"/>
<text transform="translate(69.5 300.5) scale(1 1.02)" font-size="9.8" fill="#101010" text-anchor="end" font-weight="normal" stroke="#101010" stroke-width="0.25" >IO12</text>
<circle cx="156.6" cy="297" r="4.5" fill="none" stroke="#004000" stroke-width="2"/>
<text transform="translate(168.2 300.5) scale(1 1.02)" font-size="9.8" fill="#101010" text-anchor="start" font-weight="normal" stroke="#101010" stroke-width="0.25" >MISO</text>
<polyline fill="none" stroke="#004000" stroke-width="2" points="85,297 152,297"/>
<circle cx="80.6" cy="309" r="4.5" fill="none" stroke="#004000" stroke-width="2"/>
<text transform="translate(69.5 312.5) scale(1 1.02)" font-size="9.8" fill="#101010" text-anchor="end" font-weight="normal" stroke="#101010" stroke-width="0.25" >IO13</text>
<circle cx="156.6" cy="309" r="4.5" fill="none" stroke="#004000" stroke-width="2"/>
<text transform="translate(168.2 312.5) scale(1 1.02)" font-size="9.8" fill="#101010" text-anchor="start" font-weight="normal" stroke="#101010" stroke-width="0.25" >SCK</text>
<polyline fill="none" stroke="#004000" stroke-width="2" points="85,309 152,309"/>
<circle cx="80.6" cy="321" r="4.5" fill="none" stroke="#004000" stroke-width="2"/>
<text transform="translate(69.5 324.5) scale(1 1.02)" font-size="9.8" fill="#101010" text-anchor="end" font-weight="normal" stroke="#101010" stroke-width="0.25" >IO14</text>
<circle cx="156.6" cy="321" r="4.5" fill="none" stroke="#004000" stroke-width="2"/>
<text transform="translate(168.2 324.5) scale(1 1.02)" font-size="9.8" fill="#101010" text-anchor="start" font-weight="normal" stroke="#101010" stroke-width="0.25" >AD0</text>
<polyline fill="none" stroke="#004000" stroke-width="2" points="85,321 152,321"/>
<circle cx="80.6" cy="334" r="4.5" fill="none" stroke="#004000" stroke-width="2"/>
<text transform="translate(69.5 337.5) scale(1 1.02)" font-size="9.8" fill="#101010" text-anchor="end" font-weight="normal" stroke="#101010" stroke-width="0.25" >IO15</text>
<circle cx="156.6" cy="334" r="4.5" fill="none" stroke="#004000" stroke-width="2"/>
<text transform="translate(168.2 337.5) scale(1 1.02)" font-size="9.8" fill="#101010" text-anchor="start" font-weight="normal" stroke="#101010" stroke-width="0.25" >AD1</text>
<polyline fill="none" stroke="#004000" stroke-width="2" points="85,334 152,334"/>
<circle cx="80.6" cy="346" r="4.5" fill="none" stroke="#004000" stroke-width="2"/>
<text transform="translate(69.5 349.5) scale(1 1.02)" font-size="9.8" fill="#101010" text-anchor="end" font-weight="normal" stroke="#101010" stroke-width="0.25" >IO16</text>
<circle cx="156.6" cy="346" r="4.5" fill="none" stroke="#004000" stroke-width="2"/>
<text transform="translate(168.2 349.5) scale(1 1.02)" font-size="9.8" fill="#101010" text-anchor="start" font-weight="normal" stroke="#101010" stroke-width="0.25" >AD2</text>
<polyline fill="none" stroke="#004000" stroke-width="2" points="85,346 152,346"/>
<circle cx="80.6" cy="358" r="4.5" fill="none" stroke="#004000" stroke-width="2"/>
<text transform="translate(69.5 361.5) scale(1 1.02)" font-size="9.8" fill="#101010" text-anchor="end" font-weight="normal" stroke="#101010" stroke-width="0.25" >IO17</text>
<circle cx="156.6" cy="358" r="4.5" fill="none" stroke="#004000" stroke-width="2"/>
<text transform="translate(168.2 361.5) scale(1 1.02)" font-size="9.8" fill="#101010" text-anchor="start" font-weight="normal" stroke="#101010" stroke-width="0.25" >AD3</text>
<polyline fill="none" stroke="#004000" stroke-width="2" points="85,358 152,358"/>
<circle cx="80.6" cy="370" r="4.5" fill="none" stroke="#004000" stroke-width="2"/>
<text transform="translate(69.5 373.5) scale(1 1.02)" font-size="9.8" fill="#101010" text-anchor="end" font-weight="normal" stroke="#101010" stroke-width="0.25" >IO18</text>
<circle cx="156.6" cy="370" r="4.5" fill="none" stroke="#004000" stroke-width="2"/>
<text transform="translate(168.2 373.5) scale(1 1.02)" font-size="9.8" fill="#101010" text-anchor="start" font-weight="normal" stroke="#101010" stroke-width="0.25" >AD4</text>
<polyline fill="none" stroke="#004000" stroke-width="2" points="85,370 152,370"/>
<circle cx="80.6" cy="382" r="4.5" fill="none" stroke="#004000" stroke-width="2"/>
<text transform="translate(69.5 385.5) scale(1 1.02)" font-size="9.8" fill="#101010" text-anchor="end" font-weight="normal" stroke="#101010" stroke-width="0.25" >IO19</text>
<circle cx="156.6" cy="382" r="4.5" fill="none" stroke="#004000" stroke-width="2"/>
<text transform="translate(168.2 385.5) scale(1 1.02)" font-size="9.8" fill="#101010" text-anchor="start" font-weight="normal" stroke="#101010" stroke-width="0.25" >AD5</text>
<polyline fill="none" stroke="#004000" stroke-width="2" points="85,382 152,382"/>
<circle cx="156.6" cy="395" r="4.5" fill="none" stroke="#004000" stroke-width="2"/>
<text transform="translate(168.2 398.5) scale(1 1.02)" font-size="9.8" fill="#101010" text-anchor="start" font-weight="normal" stroke="#101010" stroke-width="0.25" >SDA</text>
<circle cx="156.6" cy="407" r="4.5" fill="none" stroke="#004000" stroke-width="2"/>
<text transform="translate(168.2 410.5) scale(1 1.02)" font-size="9.8" fill="#101010" text-anchor="start" font-weight="normal" stroke="#101010" stroke-width="0.25" >SCL</text>
<polyline fill="none" stroke="#004000" stroke-width="2" points="113,370 113,395 152,395"/>
<circle cx="112.8" cy="370" r="3" fill="#004000"/>
<polyline fill="none" stroke="#004000" stroke-width="2" points="125,382 125,407 152,407"/>
<circle cx="125" cy="382" r="3" fill="#004000"/>
<circle cx="228" cy="272" r="4.5" fill="none" stroke="#004000" stroke-width="2"/>
<text transform="translate(216.9 275.5) scale(1 1.02)" font-size="9.8" fill="#101010" text-anchor="end" font-weight="normal" stroke="#101010" stroke-width="0.25" >IO0</text>
<polyline fill="none" stroke="#004000" stroke-width="2" points="232,272 260,272"/>
<polyline fill="none" stroke="#800000" stroke-width="2" points="260,272 273,272"/>
<rect x="272.6" y="267" width="36.4" height="10" fill="rgb(203,203,172)" stroke="#800000" stroke-width="2" />
<polyline fill="none" stroke="#800000" stroke-width="2" points="309,272 322,272"/>
<polyline fill="none" stroke="#004000" stroke-width="2" points="322,272 349,272"/>
<circle cx="353.5" cy="272" r="4.5" fill="none" stroke="#004000" stroke-width="2"/>
<text transform="translate(365 275.5) scale(1 1.02)" font-size="9.8" fill="#101010" text-anchor="start" font-weight="normal" stroke="#101010" stroke-width="0.25" >RXD</text>
<rect x="257.5" y="263.5" width="5" height="5" fill="#808080"/>
<rect x="319.6" y="263.5" width="5" height="5" fill="#808080"/>
<circle cx="228" cy="284" r="4.5" fill="none" stroke="#004000" stroke-width="2"/>
<text transform="translate(216.9 287.5) scale(1 1.02)" font-size="9.8" fill="#101010" text-anchor="end" font-weight="normal" stroke="#101010" stroke-width="0.25" >IO1</text>
<polyline fill="none" stroke="#004000" stroke-width="2" points="232,284 260,284"/>
<polyline fill="none" stroke="#800000" stroke-width="2" points="260,284 273,284"/>
<rect x="272.6" y="279" width="36.4" height="10" fill="rgb(203,203,172)" stroke="#800000" stroke-width="2" />
<polyline fill="none" stroke="#800000" stroke-width="2" points="309,284 322,284"/>
<polyline fill="none" stroke="#004000" stroke-width="2" points="322,284 349,284"/>
<circle cx="353.5" cy="284" r="4.5" fill="none" stroke="#004000" stroke-width="2"/>
<text transform="translate(365 287.5) scale(1 1.02)" font-size="9.8" fill="#101010" text-anchor="start" font-weight="normal" stroke="#101010" stroke-width="0.25" >TXD</text>
<rect x="257.5" y="275.5" width="5" height="5" fill="#808080"/>
<rect x="319.6" y="275.5" width="5" height="5" fill="#808080"/>
<polygon points="420,272 413.5,284.1 426.5,284.1" fill="none" stroke="#004000" stroke-width="2" stroke-linejoin="miter"/>
<text transform="translate(416.5 263.2) scale(1 1.02)" font-size="9.8" fill="#101010" text-anchor="middle" font-weight="normal" stroke="#101010" stroke-width="0.25" >+5V</text>
<polyline fill="none" stroke="#004000" stroke-width="2" points="420,284 420,321 408,321"/>
<polyline fill="none" stroke="#800000" stroke-width="2" points="408,321 397,321"/>
<rect x="358.4" y="315.6" width="38.6" height="10" fill="rgb(203,203,172)" stroke="#800000" stroke-width="2" />
<polyline fill="none" stroke="#800000" stroke-width="2" points="358,321 346,321"/>
<polyline fill="none" stroke="#004000" stroke-width="2" points="346,321 316,321 316,346"/>
<rect x="343.2" y="312" width="5" height="5" fill="#ff4040"/>
<rect x="405.2" y="312" width="5" height="5" fill="#ff4040"/>
<polyline fill="none" stroke="#004000" stroke-width="2" points="303,346 398,346"/>
<circle cx="402.3" cy="345.7" r="4.5" fill="none" stroke="#004000" stroke-width="2"/>
<text transform="translate(414.5 349.3) scale(1 1.02)" font-size="9.8" fill="#101010" text-anchor="start" font-weight="normal" stroke="#101010" stroke-width="0.25" >RESET</text>
<circle cx="316.3" cy="345.7" r="3" fill="#004000"/>
<polyline fill="none" stroke="#800000" stroke-width="2" points="291,346 303,346"/>
<circle cx="257.8" cy="345.7" r="3.6" fill="rgb(203,203,172)" stroke="#800000" stroke-width="2"/>
<circle cx="287" cy="345.7" r="3.6" fill="rgb(203,203,172)" stroke="#800000" stroke-width="2"/>
<polyline fill="none" stroke="#800000" stroke-width="2" points="248,346 254,346"/>
<polyline fill="none" stroke="#004000" stroke-width="2" points="236,346 248,346"/>
<line x1="255" y1="335" x2="290" y2="335" stroke="#800000" stroke-width="2"/>
<rect x="262.9" y="330" width="19.5" height="5.3" fill="rgb(203,203,172)" stroke="#800000" stroke-width="1.6" />
<circle cx="296.7" cy="333.4" r="4.6" fill="#300000" stroke="#ff2020" stroke-width="1.6"/>
<path d="M297.8 330.6 Q295 330.8 296.4 333.2 Q298 335.8 295.4 336.2" stroke="#ff2020" stroke-width="1.2" fill="none"/>
<line x1="242" y1="309" x2="304" y2="309" stroke="#5a5ae6" stroke-width="2" stroke-dasharray="4 3" stroke-dashoffset="4"/>
<line x1="242" y1="309" x2="242" y2="389" stroke="#5a5ae6" stroke-width="2" stroke-dasharray="4 3" stroke-dashoffset="4"/>
<line x1="304" y1="309" x2="304" y2="389" stroke="#5a5ae6" stroke-width="2" stroke-dasharray="4 3" stroke-dashoffset="4"/>
<line x1="242" y1="389" x2="304" y2="389" stroke="#5a5ae6" stroke-width="2" stroke-dasharray="4 3" stroke-dashoffset="4"/>
<rect x="300.4" y="337.6" width="5" height="5" fill="#ff4040"/>
<rect x="239.4" y="337.6" width="5" height="5" fill="#4040ff"/>
<polyline fill="none" stroke="#004000" stroke-width="2" points="236,346 236,395"/>
<circle cx="236.1" cy="369.9" r="3" fill="#004000"/>
<line x1="224" y1="395" x2="249" y2="395" stroke="#004000" stroke-width="2"/>
<line x1="230" y1="401" x2="243" y2="401" stroke="#004000" stroke-width="2"/>
<line x1="234" y1="408" x2="238" y2="408" stroke="#004000" stroke-width="2"/>
<polyline fill="none" stroke="#004000" stroke-width="2" points="236,370 248,370"/>
<polyline fill="none" stroke="#800000" stroke-width="2" points="248,370 258,370"/>
<polyline fill="none" stroke="#800000" stroke-width="2" points="288,370 298,370"/>
<circle cx="273.1" cy="369.9" r="14.6" fill="#000000" stroke="#800000" stroke-width="2"/>
<path d="M259 369.9 H287.5 M265.8 362.4 V377.4 M276.8 362.2 V377.59999999999997 L265.8 369.9 Z" stroke="#800000" stroke-width="1.8" fill="none"/>
<polyline fill="none" stroke="#004000" stroke-width="2" points="298,370 308,370"/>
<polyline fill="none" stroke="#800000" stroke-width="2" points="308,370 321,370"/>
<rect x="321.4" y="364.9" width="38.2" height="10" fill="rgb(203,203,172)" stroke="#800000" stroke-width="2" />
<polyline fill="none" stroke="#800000" stroke-width="2" points="360,370 372,370"/>
<polyline fill="none" stroke="#004000" stroke-width="2" points="372,370 398,370"/>
<circle cx="402.3" cy="369.9" r="4.5" fill="none" stroke="#004000" stroke-width="2"/>
<text transform="translate(414.5 373.5) scale(1 1.02)" font-size="9.8" fill="#101010" text-anchor="start" font-weight="normal" stroke="#101010" stroke-width="0.25" >IO13</text>
<rect x="307.2" y="361.3" width="5" height="5" fill="#808080"/>
<rect x="368.6" y="361.3" width="5" height="5" fill="#808080"/>
<rect x="245.5" y="374.2" width="5" height="5" fill="#4040ff"/>
<rect x="294.5" y="374.2" width="5" height="5" fill="#808080"/>
<text transform="translate(242.7 398) scale(1 1.02)" font-size="9.8" fill="#2424d4" text-anchor="start" font-weight="normal" stroke="#2424d4" stroke-width="0.25" >LED &amp; Reset</text>
<rect x="371" y="395.2" width="123" height="30" fill="rgb(200,200,162)" stroke="none" stroke-width="2" />
<line x1="371" y1="395" x2="494" y2="395" stroke="#c07070" stroke-width="2" stroke-dasharray="4 4" stroke-dashoffset="4"/>
<line x1="371" y1="395" x2="371" y2="425" stroke="#c07070" stroke-width="2" stroke-dasharray="4 4" stroke-dashoffset="4"/>
<line x1="494" y1="395" x2="494" y2="425" stroke="#c07070" stroke-width="2" stroke-dasharray="4 4" stroke-dashoffset="4"/>
<line x1="371" y1="425" x2="494" y2="425" stroke="#c07070" stroke-width="2" stroke-dasharray="4 4" stroke-dashoffset="4"/>
<text transform="translate(434.6 410.5) scale(1 1.02)" font-size="9.8" fill="#900000" text-anchor="middle" font-weight="normal" stroke="#900000" stroke-width="0.25" >Arduino 328</text>
<rect x="888" y="112" width="123" height="185" fill="rgb(203,203,172)" stroke="#800000" stroke-width="2" />
<polyline fill="none" stroke="#800000" stroke-width="2" points="863,124 888,124"/>
<text transform="translate(894 127.5) scale(1 1.02)" font-size="9.8" fill="#101010" text-anchor="start" font-weight="normal" stroke="#101010" stroke-width="0.25" >VM1</text>
<text transform="translate(875.5 121.7) scale(1 1.02)" font-size="9.8" fill="#101010" text-anchor="end" font-weight="normal" stroke="#101010" stroke-width="0.25" >24</text>
<polyline fill="none" stroke="#800000" stroke-width="2" points="863,149 888,149"/>
<text transform="translate(894 152.5) scale(1 1.02)" font-size="9.8" fill="#101010" text-anchor="start" font-weight="normal" stroke="#101010" stroke-width="0.25" >PWMA</text>
<text transform="translate(875.5 146.7) scale(1 1.02)" font-size="9.8" fill="#101010" text-anchor="end" font-weight="normal" stroke="#101010" stroke-width="0.25" >23</text>
<rect x="878" y="140.4" width="5" height="5" fill="#ff4040"/>
<polyline fill="none" stroke="#800000" stroke-width="2" points="863,161 888,161"/>
<text transform="translate(894 164.5) scale(1 1.02)" font-size="9.8" fill="#101010" text-anchor="start" font-weight="normal" stroke="#101010" stroke-width="0.25" >AIN2</text>
<text transform="translate(875.5 158.7) scale(1 1.02)" font-size="9.8" fill="#101010" text-anchor="end" font-weight="normal" stroke="#101010" stroke-width="0.25" >22</text>
<rect x="878" y="152.4" width="5" height="5" fill="#ff4040"/>
<polyline fill="none" stroke="#800000" stroke-width="2" points="863,174 888,174"/>
<text transform="translate(894 177.5) scale(1 1.02)" font-size="9.8" fill="#101010" text-anchor="start" font-weight="normal" stroke="#101010" stroke-width="0.25" >AIN1</text>
<text transform="translate(875.5 171.7) scale(1 1.02)" font-size="9.8" fill="#101010" text-anchor="end" font-weight="normal" stroke="#101010" stroke-width="0.25" >21</text>
<rect x="878" y="165.4" width="5" height="5" fill="#4040ff"/>
<polyline fill="none" stroke="#800000" stroke-width="2" points="863,198 888,198"/>
<text transform="translate(894 201.5) scale(1 1.02)" font-size="9.8" fill="#101010" text-anchor="start" font-weight="normal" stroke="#101010" stroke-width="0.25" >STBY</text>
<text transform="translate(875.5 195.7) scale(1 1.02)" font-size="9.8" fill="#101010" text-anchor="end" font-weight="normal" stroke="#101010" stroke-width="0.25" >19</text>
<rect x="878" y="189.4" width="5" height="5" fill="#ff4040"/>
<polyline fill="none" stroke="#800000" stroke-width="2" points="863,223 888,223"/>
<text transform="translate(894 226.5) scale(1 1.02)" font-size="9.8" fill="#101010" text-anchor="start" font-weight="normal" stroke="#101010" stroke-width="0.25" >BIN1</text>
<text transform="translate(875.5 220.7) scale(1 1.02)" font-size="9.8" fill="#101010" text-anchor="end" font-weight="normal" stroke="#101010" stroke-width="0.25" >17</text>
<rect x="878" y="214.4" width="5" height="5" fill="#4040ff"/>
<polyline fill="none" stroke="#800000" stroke-width="2" points="863,235 888,235"/>
<text transform="translate(894 238.5) scale(1 1.02)" font-size="9.8" fill="#101010" text-anchor="start" font-weight="normal" stroke="#101010" stroke-width="0.25" >BIN2</text>
<text transform="translate(875.5 232.7) scale(1 1.02)" font-size="9.8" fill="#101010" text-anchor="end" font-weight="normal" stroke="#101010" stroke-width="0.25" >16</text>
<rect x="878" y="226.4" width="5" height="5" fill="#ff4040"/>
<polyline fill="none" stroke="#800000" stroke-width="2" points="863,248 888,248"/>
<text transform="translate(894 251.5) scale(1 1.02)" font-size="9.8" fill="#101010" text-anchor="start" font-weight="normal" stroke="#101010" stroke-width="0.25" >PWMB</text>
<text transform="translate(875.5 245.7) scale(1 1.02)" font-size="9.8" fill="#101010" text-anchor="end" font-weight="normal" stroke="#101010" stroke-width="0.25" >15</text>
<rect x="878" y="239.4" width="5" height="5" fill="#ff4040"/>
<polyline fill="none" stroke="#800000" stroke-width="2" points="863,272 888,272"/>
<text transform="translate(894 275.5) scale(1 1.02)" font-size="9.8" fill="#101010" text-anchor="start" font-weight="normal" stroke="#101010" stroke-width="0.25" >VM2</text>
<text transform="translate(875.5 269.7) scale(1 1.02)" font-size="9.8" fill="#101010" text-anchor="end" font-weight="normal" stroke="#101010" stroke-width="0.25" >13</text>
<polyline fill="none" stroke="#800000" stroke-width="2" points="863,284 888,284"/>
<text transform="translate(894 287.5) scale(1 1.02)" font-size="9.8" fill="#101010" text-anchor="start" font-weight="normal" stroke="#101010" stroke-width="0.25" >VM3</text>
<text transform="translate(875.5 281.7) scale(1 1.02)" font-size="9.8" fill="#101010" text-anchor="end" font-weight="normal" stroke="#101010" stroke-width="0.25" >14</text>
<polyline fill="none" stroke="#800000" stroke-width="2" points="1011,124 1036,124"/>
<text transform="translate(1003.6 127.5) scale(1 1.02)" font-size="9.8" fill="#101010" text-anchor="end" font-weight="normal" stroke="#101010" stroke-width="0.25" >AO1</text>
<text transform="translate(1023.4 121.7) scale(1 1.02)" font-size="9.8" fill="#101010" text-anchor="start" font-weight="normal" stroke="#101010" stroke-width="0.25" >1</text>
<polyline fill="none" stroke="#800000" stroke-width="2" points="1011,137 1036,137"/>
<text transform="translate(1001.3 140.5) scale(1 1.02)" font-size="9.8" fill="#101010" text-anchor="end" font-weight="normal" stroke="#101010" stroke-width="0.25" >AO1</text>
<line x1="1002.8" y1="132.5" x2="1002.8" y2="134.7" stroke="#101010" stroke-width="1"/>
<text transform="translate(1023.4 134.7) scale(1 1.02)" font-size="9.8" fill="#101010" text-anchor="start" font-weight="normal" stroke="#101010" stroke-width="0.25" >2</text>
<polyline fill="none" stroke="#800000" stroke-width="2" points="1011,149 1036,149"/>
<text transform="translate(1003.6 152.5) scale(1 1.02)" font-size="9.8" fill="#101010" text-anchor="end" font-weight="normal" stroke="#101010" stroke-width="0.25" >PGND1</text>
<text transform="translate(1023.4 146.7) scale(1 1.02)" font-size="9.8" fill="#101010" text-anchor="start" font-weight="normal" stroke="#101010" stroke-width="0.25" >3</text>
<rect x="1016" y="140.4" width="5" height="5" fill="#4040ff"/>
<polyline fill="none" stroke="#800000" stroke-width="2" points="1011,161 1036,161"/>
<text transform="translate(1001.3 164.5) scale(1 1.02)" font-size="9.8" fill="#101010" text-anchor="end" font-weight="normal" stroke="#101010" stroke-width="0.25" >PGND1</text>
<line x1="1002.8" y1="156.5" x2="1002.8" y2="158.7" stroke="#101010" stroke-width="1"/>
<text transform="translate(1023.4 158.7) scale(1 1.02)" font-size="9.8" fill="#101010" text-anchor="start" font-weight="normal" stroke="#101010" stroke-width="0.25" >4</text>
<rect x="1016" y="152.4" width="5" height="5" fill="#4040ff"/>
<polyline fill="none" stroke="#800000" stroke-width="2" points="1011,174 1036,174"/>
<text transform="translate(1003.6 177.5) scale(1 1.02)" font-size="9.8" fill="#101010" text-anchor="end" font-weight="normal" stroke="#101010" stroke-width="0.25" >AO2</text>
<text transform="translate(1023.4 171.7) scale(1 1.02)" font-size="9.8" fill="#101010" text-anchor="start" font-weight="normal" stroke="#101010" stroke-width="0.25" >5</text>
<polyline fill="none" stroke="#800000" stroke-width="2" points="1011,186 1036,186"/>
<text transform="translate(1001.3 189.5) scale(1 1.02)" font-size="9.8" fill="#101010" text-anchor="end" font-weight="normal" stroke="#101010" stroke-width="0.25" >AO2</text>
<line x1="1002.8" y1="181.5" x2="1002.8" y2="183.7" stroke="#101010" stroke-width="1"/>
<text transform="translate(1023.4 183.7) scale(1 1.02)" font-size="9.8" fill="#101010" text-anchor="start" font-weight="normal" stroke="#101010" stroke-width="0.25" >6</text>
<polyline fill="none" stroke="#800000" stroke-width="2" points="1011,223 1036,223"/>
<text transform="translate(1003.6 226.5) scale(1 1.02)" font-size="9.8" fill="#101010" text-anchor="end" font-weight="normal" stroke="#101010" stroke-width="0.25" >BO2</text>
<text transform="translate(1023.4 220.7) scale(1 1.02)" font-size="9.8" fill="#101010" text-anchor="start" font-weight="normal" stroke="#101010" stroke-width="0.25" >7</text>
<polyline fill="none" stroke="#800000" stroke-width="2" points="1011,235 1036,235"/>
<text transform="translate(1001.3 238.5) scale(1 1.02)" font-size="9.8" fill="#101010" text-anchor="end" font-weight="normal" stroke="#101010" stroke-width="0.25" >BO2</text>
<line x1="1002.8" y1="230.5" x2="1002.8" y2="232.7" stroke="#101010" stroke-width="1"/>
<text transform="translate(1023.4 232.7) scale(1 1.02)" font-size="9.8" fill="#101010" text-anchor="start" font-weight="normal" stroke="#101010" stroke-width="0.25" >8</text>
<polyline fill="none" stroke="#800000" stroke-width="2" points="1011,248 1036,248"/>
<text transform="translate(1003.6 251.5) scale(1 1.02)" font-size="9.8" fill="#101010" text-anchor="end" font-weight="normal" stroke="#101010" stroke-width="0.25" >PGND2</text>
<text transform="translate(1023.4 245.7) scale(1 1.02)" font-size="9.8" fill="#101010" text-anchor="start" font-weight="normal" stroke="#101010" stroke-width="0.25" >9</text>
<rect x="1016" y="239.4" width="5" height="5" fill="#4040ff"/>
<polyline fill="none" stroke="#800000" stroke-width="2" points="1011,260 1036,260"/>
<text transform="translate(1001.3 263.5) scale(1 1.02)" font-size="9.8" fill="#101010" text-anchor="end" font-weight="normal" stroke="#101010" stroke-width="0.25" >PGND2</text>
<line x1="1002.8" y1="255.5" x2="1002.8" y2="257.7" stroke="#101010" stroke-width="1"/>
<text transform="translate(1023.4 257.7) scale(1 1.02)" font-size="9.8" fill="#101010" text-anchor="start" font-weight="normal" stroke="#101010" stroke-width="0.25" >10</text>
<rect x="1016" y="251.4" width="5" height="5" fill="#4040ff"/>
<polyline fill="none" stroke="#800000" stroke-width="2" points="1011,272 1036,272"/>
<text transform="translate(1003.6 275.5) scale(1 1.02)" font-size="9.8" fill="#101010" text-anchor="end" font-weight="normal" stroke="#101010" stroke-width="0.25" >BO1</text>
<text transform="translate(1023.4 269.7) scale(1 1.02)" font-size="9.8" fill="#101010" text-anchor="start" font-weight="normal" stroke="#101010" stroke-width="0.25" >11</text>
<polyline fill="none" stroke="#800000" stroke-width="2" points="1011,284 1036,284"/>
<text transform="translate(1001.3 287.5) scale(1 1.02)" font-size="9.8" fill="#101010" text-anchor="end" font-weight="normal" stroke="#101010" stroke-width="0.25" >BO1</text>
<line x1="1002.8" y1="279.5" x2="1002.8" y2="281.7" stroke="#101010" stroke-width="1"/>
<text transform="translate(1023.4 281.7) scale(1 1.02)" font-size="9.8" fill="#101010" text-anchor="start" font-weight="normal" stroke="#101010" stroke-width="0.25" >12</text>
<text transform="translate(949 127.6) scale(1 1.02)" font-size="9.8" fill="#101010" text-anchor="middle" font-weight="normal" stroke="#101010" stroke-width="0.25" >VCC</text>
<text transform="translate(949 288) scale(1 1.02)" font-size="9.8" fill="#101010" text-anchor="middle" font-weight="normal" stroke="#101010" stroke-width="0.25" >GND</text>
<polyline fill="none" stroke="#800000" stroke-width="2" points="949,112 949,88"/>
<polyline fill="none" stroke="#004000" stroke-width="2" points="949,88 949,56"/>
<polygon points="949,44 942.5,56.3 955.5,56.3" fill="none" stroke="#004000" stroke-width="2" stroke-linejoin="miter"/>
<circle cx="949" cy="74.8" r="3" fill="#004000"/>
<polyline fill="none" stroke="#004000" stroke-width="2" points="949,75 851,75 851,198 863,198"/>
<text transform="translate(952.5 98.2) scale(1 1.02)" font-size="9.8" fill="#101010" text-anchor="start" font-weight="normal" stroke="#101010" stroke-width="0.25" >20</text>
<text transform="translate(975.2 98.2) scale(1 1.02)" font-size="9.8" fill="#101010" text-anchor="start" font-weight="normal" stroke="#101010" stroke-width="0.25" >TB6612FNG</text>
<polyline fill="none" stroke="#800000" stroke-width="2" points="949,297 949,320"/>
<polyline fill="none" stroke="#004000" stroke-width="2" points="949,320 949,334"/>
<line x1="936" y1="334" x2="962" y2="334" stroke="#004000" stroke-width="2"/>
<line x1="942" y1="340" x2="956" y2="340" stroke="#004000" stroke-width="2"/>
<line x1="947" y1="346" x2="951" y2="346" stroke="#004000" stroke-width="2"/>
<text transform="translate(952.5 318.2) scale(1 1.02)" font-size="9.8" fill="#101010" text-anchor="start" font-weight="normal" stroke="#101010" stroke-width="0.25" >18</text>
<circle cx="837.7" cy="124" r="3" fill="#004000"/>
<polyline fill="none" stroke="#004000" stroke-width="2" points="838,124 863,124"/>
<circle cx="837.7" cy="272" r="3" fill="#004000"/>
<polyline fill="none" stroke="#004000" stroke-width="2" points="838,272 863,272"/>
<polyline fill="none" stroke="#004000" stroke-width="2" points="838,284 863,284"/>
<circle cx="837.7" cy="284" r="3" fill="#004000"/>
<polyline fill="none" stroke="#004000" stroke-width="2" points="1036,149 1047,149"/>
<polyline fill="none" stroke="#004000" stroke-width="2" points="1036,161 1047,161"/>
<polyline fill="none" stroke="#004000" stroke-width="2" points="1036,248 1047,248"/>
<polyline fill="none" stroke="#004000" stroke-width="2" points="1036,260 1047,260"/>
<polyline fill="none" stroke="#004000" stroke-width="2" points="1047,149 1047,309"/>
<line x1="1034" y1="309" x2="1059" y2="309" stroke="#004000" stroke-width="2"/>
<line x1="1040" y1="315" x2="1053" y2="315" stroke="#004000" stroke-width="2"/>
<line x1="1045" y1="321" x2="1048" y2="321" stroke="#004000" stroke-width="2"/>
<circle cx="1046.6" cy="161" r="3" fill="#004000"/>
<circle cx="1046.6" cy="248" r="3" fill="#004000"/>
<circle cx="1046.6" cy="260" r="3" fill="#004000"/>
<polyline fill="none" stroke="#004000" stroke-width="2" points="1036,124 1060,124"/>
<polyline fill="none" stroke="#004000" stroke-width="2" points="1036,137 1060,137 1060,124"/>
<circle cx="1060" cy="124" r="3" fill="#004000"/>
<polyline fill="none" stroke="#004000" stroke-width="2" points="1036,174 1060,174"/>
<polyline fill="none" stroke="#004000" stroke-width="2" points="1036,186 1060,186 1060,174"/>
<circle cx="1060" cy="174" r="3" fill="#004000"/>
<polyline fill="none" stroke="#004000" stroke-width="2" points="1036,223 1060,223"/>
<polyline fill="none" stroke="#004000" stroke-width="2" points="1036,235 1060,235 1060,223"/>
<circle cx="1060" cy="223" r="3" fill="#004000"/>
<polyline fill="none" stroke="#004000" stroke-width="2" points="1036,272 1060,272"/>
<polyline fill="none" stroke="#004000" stroke-width="2" points="1036,284 1060,284 1060,272"/>
<circle cx="1060" cy="272" r="3" fill="#004000"/>
<rect x="888" y="432" width="123" height="185" fill="rgb(203,203,172)" stroke="#800000" stroke-width="2" />
<polyline fill="none" stroke="#800000" stroke-width="2" points="863,444 888,444"/>
<text transform="translate(894 447.5) scale(1 1.02)" font-size="9.8" fill="#101010" text-anchor="start" font-weight="normal" stroke="#101010" stroke-width="0.25" >VM1</text>
<text transform="translate(875.5 441.7) scale(1 1.02)" font-size="9.8" fill="#101010" text-anchor="end" font-weight="normal" stroke="#101010" stroke-width="0.25" >24</text>
<polyline fill="none" stroke="#800000" stroke-width="2" points="863,469 888,469"/>
<text transform="translate(894 472.5) scale(1 1.02)" font-size="9.8" fill="#101010" text-anchor="start" font-weight="normal" stroke="#101010" stroke-width="0.25" >PWMA</text>
<text transform="translate(875.5 466.7) scale(1 1.02)" font-size="9.8" fill="#101010" text-anchor="end" font-weight="normal" stroke="#101010" stroke-width="0.25" >23</text>
<rect x="878" y="460.4" width="5" height="5" fill="#ff4040"/>
<polyline fill="none" stroke="#800000" stroke-width="2" points="863,481 888,481"/>
<text transform="translate(894 484.5) scale(1 1.02)" font-size="9.8" fill="#101010" text-anchor="start" font-weight="normal" stroke="#101010" stroke-width="0.25" >AIN2</text>
<text transform="translate(875.5 478.7) scale(1 1.02)" font-size="9.8" fill="#101010" text-anchor="end" font-weight="normal" stroke="#101010" stroke-width="0.25" >22</text>
<rect x="878" y="472.4" width="5" height="5" fill="#4040ff"/>
<polyline fill="none" stroke="#800000" stroke-width="2" points="863,494 888,494"/>
<text transform="translate(894 497.5) scale(1 1.02)" font-size="9.8" fill="#101010" text-anchor="start" font-weight="normal" stroke="#101010" stroke-width="0.25" >AIN1</text>
<text transform="translate(875.5 491.7) scale(1 1.02)" font-size="9.8" fill="#101010" text-anchor="end" font-weight="normal" stroke="#101010" stroke-width="0.25" >21</text>
<rect x="878" y="485.4" width="5" height="5" fill="#ff4040"/>
<polyline fill="none" stroke="#800000" stroke-width="2" points="863,518 888,518"/>
<text transform="translate(894 521.5) scale(1 1.02)" font-size="9.8" fill="#101010" text-anchor="start" font-weight="normal" stroke="#101010" stroke-width="0.25" >STBY</text>
<text transform="translate(875.5 515.7) scale(1 1.02)" font-size="9.8" fill="#101010" text-anchor="end" font-weight="normal" stroke="#101010" stroke-width="0.25" >19</text>
<rect x="878" y="509.4" width="5" height="5" fill="#ff4040"/>
<polyline fill="none" stroke="#800000" stroke-width="2" points="863,543 888,543"/>
<text transform="translate(894 546.5) scale(1 1.02)" font-size="9.8" fill="#101010" text-anchor="start" font-weight="normal" stroke="#101010" stroke-width="0.25" >BIN1</text>
<text transform="translate(875.5 540.7) scale(1 1.02)" font-size="9.8" fill="#101010" text-anchor="end" font-weight="normal" stroke="#101010" stroke-width="0.25" >17</text>
<rect x="878" y="534.4" width="5" height="5" fill="#4040ff"/>
<polyline fill="none" stroke="#800000" stroke-width="2" points="863,555 888,555"/>
<text transform="translate(894 558.5) scale(1 1.02)" font-size="9.8" fill="#101010" text-anchor="start" font-weight="normal" stroke="#101010" stroke-width="0.25" >BIN2</text>
<text transform="translate(875.5 552.7) scale(1 1.02)" font-size="9.8" fill="#101010" text-anchor="end" font-weight="normal" stroke="#101010" stroke-width="0.25" >16</text>
<rect x="878" y="546.4" width="5" height="5" fill="#ff4040"/>
<polyline fill="none" stroke="#800000" stroke-width="2" points="863,568 888,568"/>
<text transform="translate(894 571.5) scale(1 1.02)" font-size="9.8" fill="#101010" text-anchor="start" font-weight="normal" stroke="#101010" stroke-width="0.25" >PWMB</text>
<text transform="translate(875.5 565.7) scale(1 1.02)" font-size="9.8" fill="#101010" text-anchor="end" font-weight="normal" stroke="#101010" stroke-width="0.25" >15</text>
<rect x="878" y="559.4" width="5" height="5" fill="#ff4040"/>
<polyline fill="none" stroke="#800000" stroke-width="2" points="863,592 888,592"/>
<text transform="translate(894 595.5) scale(1 1.02)" font-size="9.8" fill="#101010" text-anchor="start" font-weight="normal" stroke="#101010" stroke-width="0.25" >VM2</text>
<text transform="translate(875.5 589.7) scale(1 1.02)" font-size="9.8" fill="#101010" text-anchor="end" font-weight="normal" stroke="#101010" stroke-width="0.25" >13</text>
<polyline fill="none" stroke="#800000" stroke-width="2" points="863,604 888,604"/>
<text transform="translate(894 607.5) scale(1 1.02)" font-size="9.8" fill="#101010" text-anchor="start" font-weight="normal" stroke="#101010" stroke-width="0.25" >VM3</text>
<text transform="translate(875.5 601.7) scale(1 1.02)" font-size="9.8" fill="#101010" text-anchor="end" font-weight="normal" stroke="#101010" stroke-width="0.25" >14</text>
<polyline fill="none" stroke="#800000" stroke-width="2" points="1011,444 1036,444"/>
<text transform="translate(1003.6 447.5) scale(1 1.02)" font-size="9.8" fill="#101010" text-anchor="end" font-weight="normal" stroke="#101010" stroke-width="0.25" >AO1</text>
<text transform="translate(1023.4 441.7) scale(1 1.02)" font-size="9.8" fill="#101010" text-anchor="start" font-weight="normal" stroke="#101010" stroke-width="0.25" >1</text>
<polyline fill="none" stroke="#800000" stroke-width="2" points="1011,457 1036,457"/>
<text transform="translate(1001.3 460.5) scale(1 1.02)" font-size="9.8" fill="#101010" text-anchor="end" font-weight="normal" stroke="#101010" stroke-width="0.25" >AO1</text>
<line x1="1002.8" y1="452.5" x2="1002.8" y2="454.7" stroke="#101010" stroke-width="1"/>
<text transform="translate(1023.4 454.7) scale(1 1.02)" font-size="9.8" fill="#101010" text-anchor="start" font-weight="normal" stroke="#101010" stroke-width="0.25" >2</text>
<polyline fill="none" stroke="#800000" stroke-width="2" points="1011,469 1036,469"/>
<text transform="translate(1003.6 472.5) scale(1 1.02)" font-size="9.8" fill="#101010" text-anchor="end" font-weight="normal" stroke="#101010" stroke-width="0.25" >PGND1</text>
<text transform="translate(1023.4 466.7) scale(1 1.02)" font-size="9.8" fill="#101010" text-anchor="start" font-weight="normal" stroke="#101010" stroke-width="0.25" >3</text>
<rect x="1016" y="460.4" width="5" height="5" fill="#4040ff"/>
<polyline fill="none" stroke="#800000" stroke-width="2" points="1011,481 1036,481"/>
<text transform="translate(1001.3 484.5) scale(1 1.02)" font-size="9.8" fill="#101010" text-anchor="end" font-weight="normal" stroke="#101010" stroke-width="0.25" >PGND1</text>
<line x1="1002.8" y1="476.5" x2="1002.8" y2="478.7" stroke="#101010" stroke-width="1"/>
<text transform="translate(1023.4 478.7) scale(1 1.02)" font-size="9.8" fill="#101010" text-anchor="start" font-weight="normal" stroke="#101010" stroke-width="0.25" >4</text>
<rect x="1016" y="472.4" width="5" height="5" fill="#4040ff"/>
<polyline fill="none" stroke="#800000" stroke-width="2" points="1011,494 1036,494"/>
<text transform="translate(1003.6 497.5) scale(1 1.02)" font-size="9.8" fill="#101010" text-anchor="end" font-weight="normal" stroke="#101010" stroke-width="0.25" >AO2</text>
<text transform="translate(1023.4 491.7) scale(1 1.02)" font-size="9.8" fill="#101010" text-anchor="start" font-weight="normal" stroke="#101010" stroke-width="0.25" >5</text>
<polyline fill="none" stroke="#800000" stroke-width="2" points="1011,506 1036,506"/>
<text transform="translate(1001.3 509.5) scale(1 1.02)" font-size="9.8" fill="#101010" text-anchor="end" font-weight="normal" stroke="#101010" stroke-width="0.25" >AO2</text>
<line x1="1002.8" y1="501.5" x2="1002.8" y2="503.7" stroke="#101010" stroke-width="1"/>
<text transform="translate(1023.4 503.7) scale(1 1.02)" font-size="9.8" fill="#101010" text-anchor="start" font-weight="normal" stroke="#101010" stroke-width="0.25" >6</text>
<polyline fill="none" stroke="#800000" stroke-width="2" points="1011,543 1036,543"/>
<text transform="translate(1003.6 546.5) scale(1 1.02)" font-size="9.8" fill="#101010" text-anchor="end" font-weight="normal" stroke="#101010" stroke-width="0.25" >BO2</text>
<text transform="translate(1023.4 540.7) scale(1 1.02)" font-size="9.8" fill="#101010" text-anchor="start" font-weight="normal" stroke="#101010" stroke-width="0.25" >7</text>
<polyline fill="none" stroke="#800000" stroke-width="2" points="1011,555 1036,555"/>
<text transform="translate(1001.3 558.5) scale(1 1.02)" font-size="9.8" fill="#101010" text-anchor="end" font-weight="normal" stroke="#101010" stroke-width="0.25" >BO2</text>
<line x1="1002.8" y1="550.5" x2="1002.8" y2="552.7" stroke="#101010" stroke-width="1"/>
<text transform="translate(1023.4 552.7) scale(1 1.02)" font-size="9.8" fill="#101010" text-anchor="start" font-weight="normal" stroke="#101010" stroke-width="0.25" >8</text>
<polyline fill="none" stroke="#800000" stroke-width="2" points="1011,568 1036,568"/>
<text transform="translate(1003.6 571.5) scale(1 1.02)" font-size="9.8" fill="#101010" text-anchor="end" font-weight="normal" stroke="#101010" stroke-width="0.25" >PGND2</text>
<text transform="translate(1023.4 565.7) scale(1 1.02)" font-size="9.8" fill="#101010" text-anchor="start" font-weight="normal" stroke="#101010" stroke-width="0.25" >9</text>
<rect x="1016" y="559.4" width="5" height="5" fill="#4040ff"/>
<polyline fill="none" stroke="#800000" stroke-width="2" points="1011,580 1036,580"/>
<text transform="translate(1001.3 583.5) scale(1 1.02)" font-size="9.8" fill="#101010" text-anchor="end" font-weight="normal" stroke="#101010" stroke-width="0.25" >PGND2</text>
<line x1="1002.8" y1="575.5" x2="1002.8" y2="577.7" stroke="#101010" stroke-width="1"/>
<text transform="translate(1023.4 577.7) scale(1 1.02)" font-size="9.8" fill="#101010" text-anchor="start" font-weight="normal" stroke="#101010" stroke-width="0.25" >10</text>
<rect x="1016" y="571.4" width="5" height="5" fill="#4040ff"/>
<polyline fill="none" stroke="#800000" stroke-width="2" points="1011,592 1036,592"/>
<text transform="translate(1003.6 595.5) scale(1 1.02)" font-size="9.8" fill="#101010" text-anchor="end" font-weight="normal" stroke="#101010" stroke-width="0.25" >BO1</text>
<text transform="translate(1023.4 589.7) scale(1 1.02)" font-size="9.8" fill="#101010" text-anchor="start" font-weight="normal" stroke="#101010" stroke-width="0.25" >11</text>
<polyline fill="none" stroke="#800000" stroke-width="2" points="1011,604 1036,604"/>
<text transform="translate(1001.3 607.5) scale(1 1.02)" font-size="9.8" fill="#101010" text-anchor="end" font-weight="normal" stroke="#101010" stroke-width="0.25" >BO1</text>
<line x1="1002.8" y1="599.5" x2="1002.8" y2="601.7" stroke="#101010" stroke-width="1"/>
<text transform="translate(1023.4 601.7) scale(1 1.02)" font-size="9.8" fill="#101010" text-anchor="start" font-weight="normal" stroke="#101010" stroke-width="0.25" >12</text>
<text transform="translate(949 447.6) scale(1 1.02)" font-size="9.8" fill="#101010" text-anchor="middle" font-weight="normal" stroke="#101010" stroke-width="0.25" >VCC</text>
<text transform="translate(949 608) scale(1 1.02)" font-size="9.8" fill="#101010" text-anchor="middle" font-weight="normal" stroke="#101010" stroke-width="0.25" >GND</text>
<polyline fill="none" stroke="#800000" stroke-width="2" points="949,432 949,408"/>
<polyline fill="none" stroke="#004000" stroke-width="2" points="949,408 949,376"/>
<polygon points="949,364 942.5,376.3 955.5,376.3" fill="none" stroke="#004000" stroke-width="2" stroke-linejoin="miter"/>
<circle cx="949" cy="394.8" r="3" fill="#004000"/>
<polyline fill="none" stroke="#004000" stroke-width="2" points="949,395 851,395 851,518 863,518"/>
<text transform="translate(952.5 418.2) scale(1 1.02)" font-size="9.8" fill="#101010" text-anchor="start" font-weight="normal" stroke="#101010" stroke-width="0.25" >20</text>
<text transform="translate(975.2 638.8) scale(1 1.02)" font-size="9.8" fill="#101010" text-anchor="start" font-weight="normal" stroke="#101010" stroke-width="0.25" >TB6612FNG</text>
<polyline fill="none" stroke="#800000" stroke-width="2" points="949,617 949,640"/>
<polyline fill="none" stroke="#004000" stroke-width="2" points="949,640 949,654"/>
<line x1="936" y1="654" x2="962" y2="654" stroke="#004000" stroke-width="2"/>
<line x1="942" y1="660" x2="956" y2="660" stroke="#004000" stroke-width="2"/>
<line x1="947" y1="666" x2="951" y2="666" stroke="#004000" stroke-width="2"/>
<text transform="translate(952.5 638.2) scale(1 1.02)" font-size="9.8" fill="#101010" text-anchor="start" font-weight="normal" stroke="#101010" stroke-width="0.25" >18</text>
<circle cx="837.7" cy="444" r="3" fill="#004000"/>
<polyline fill="none" stroke="#004000" stroke-width="2" points="838,444 863,444"/>
<circle cx="837.7" cy="592" r="3" fill="#004000"/>
<polyline fill="none" stroke="#004000" stroke-width="2" points="838,592 863,592"/>
<polyline fill="none" stroke="#004000" stroke-width="2" points="838,604 863,604"/>
<polyline fill="none" stroke="#004000" stroke-width="2" points="1036,469 1047,469"/>
<polyline fill="none" stroke="#004000" stroke-width="2" points="1036,481 1047,481"/>
<polyline fill="none" stroke="#004000" stroke-width="2" points="1036,568 1047,568"/>
<polyline fill="none" stroke="#004000" stroke-width="2" points="1036,580 1047,580"/>
<polyline fill="none" stroke="#004000" stroke-width="2" points="1047,469 1047,629"/>
<line x1="1034" y1="629" x2="1059" y2="629" stroke="#004000" stroke-width="2"/>
<line x1="1040" y1="635" x2="1053" y2="635" stroke="#004000" stroke-width="2"/>
<line x1="1045" y1="641" x2="1048" y2="641" stroke="#004000" stroke-width="2"/>
<circle cx="1046.6" cy="481" r="3" fill="#004000"/>
<circle cx="1046.6" cy="568" r="3" fill="#004000"/>
<circle cx="1046.6" cy="580" r="3" fill="#004000"/>
<polyline fill="none" stroke="#004000" stroke-width="2" points="1036,444 1060,444"/>
<polyline fill="none" stroke="#004000" stroke-width="2" points="1036,457 1060,457 1060,444"/>
<circle cx="1060" cy="444" r="3" fill="#004000"/>
<polyline fill="none" stroke="#004000" stroke-width="2" points="1036,494 1060,494"/>
<polyline fill="none" stroke="#004000" stroke-width="2" points="1036,506 1060,506 1060,494"/>
<circle cx="1060" cy="494" r="3" fill="#004000"/>
<polyline fill="none" stroke="#004000" stroke-width="2" points="1036,543 1060,543"/>
<polyline fill="none" stroke="#004000" stroke-width="2" points="1036,555 1060,555 1060,543"/>
<circle cx="1060" cy="543" r="3" fill="#004000"/>
<polyline fill="none" stroke="#004000" stroke-width="2" points="1036,592 1060,592"/>
<polyline fill="none" stroke="#004000" stroke-width="2" points="1036,604 1060,604 1060,592"/>
<circle cx="1060" cy="592" r="3" fill="#004000"/>
<polygon points="837.7,56.3 831.2,68.5 844.2,68.5" fill="none" stroke="#004000" stroke-width="2" stroke-linejoin="miter"/>
<text transform="translate(837.7 48) scale(1 1.02)" font-size="9.8" fill="#101010" text-anchor="middle" font-weight="normal" stroke="#101010" stroke-width="0.25" >+12V</text>
<polyline fill="none" stroke="#004000" stroke-width="2" points="838,68 838,604"/>
<polyline fill="none" stroke="#004000" stroke-width="2" points="1060,124 1072,124"/>
<polyline fill="none" stroke="#800000" stroke-width="2" points="1072,124 1085,124"/>
<polyline fill="none" stroke="#004000" stroke-width="2" points="1060,174 1060,149 1072,149"/>
<polyline fill="none" stroke="#800000" stroke-width="2" points="1072,149 1085,149"/>
<circle cx="1060" cy="174" r="3" fill="#004000"/>
<polyline fill="none" stroke="#800000" stroke-width="2" points="1132,124 1146,124"/>
<polyline fill="none" stroke="#004000" stroke-width="2" points="1146,124 1164,124 1164,272 1060,272"/>
<polyline fill="none" stroke="#800000" stroke-width="2" points="1132,149 1146,149"/>
<polyline fill="none" stroke="#004000" stroke-width="2" points="1146,149 1158,149 1158,223 1060,223"/>
<circle cx="1108.7" cy="136.3" r="24.6" fill="rgb(200,200,200)" stroke="#800000" stroke-width="2"/>
<circle cx="1108.7" cy="136.3" r="5.6" fill="rgb(224,224,208)" stroke="#800000" stroke-width="2"/>
<path d="M1089.11 136.98 A19.6 19.6 0 0 1 1104.29 117.2 L1106.05 124.8 A11.8 11.8 0 0 0 1096.91 136.71 Z" fill="#000090"/>
<path d="M1128.29 135.62 A19.6 19.6 0 0 1 1113.11 155.4 L1111.35 147.8 A11.8 11.8 0 0 0 1120.49 135.89 Z" fill="#000090"/>
<rect x="1095.7" y="125.8" width="1.2" height="1.2" fill="#c0c000"/>
<rect x="1121.2" y="145.6" width="1.2" height="1.2" fill="#00c000"/>
<rect x="1091.1" y="163.5" width="34.8" height="12.6" fill="#004000" stroke="#30ff30" stroke-width="1.5" />
<text x="1108.7" y="173.5" font-size="10" fill="#50ff50" text-anchor="middle" font-weight="normal" stroke="#50ff50" stroke-width="0.25" >+52.8</text>
<text transform="translate(1060.5 121) scale(1 1.02)" font-size="9.8" fill="#900000" text-anchor="start" font-weight="normal" stroke="#900000" stroke-width="0.25" >M3</text>
<text transform="translate(1060.5 220) scale(1 1.02)" font-size="9.8" fill="#900000" text-anchor="start" font-weight="normal" stroke="#900000" stroke-width="0.25" >M4</text>
<polyline fill="none" stroke="#004000" stroke-width="2" points="1060,444 1072,444"/>
<polyline fill="none" stroke="#800000" stroke-width="2" points="1072,444 1085,444"/>
<polyline fill="none" stroke="#800000" stroke-width="2" points="1132,444 1146,444"/>
<polyline fill="none" stroke="#004000" stroke-width="2" points="1146,444 1158,444 1158,494 1060,494"/>
<polyline fill="none" stroke="#004000" stroke-width="2" points="1060,543 1158,543 1158,592 1146,592"/>
<polyline fill="none" stroke="#800000" stroke-width="2" points="1146,592 1132,592"/>
<polyline fill="none" stroke="#004000" stroke-width="2" points="1060,592 1072,592"/>
<polyline fill="none" stroke="#800000" stroke-width="2" points="1072,592 1085,592"/>
<circle cx="1108.7" cy="444" r="24.6" fill="rgb(200,200,200)" stroke="#800000" stroke-width="2"/>
<circle cx="1108.7" cy="444" r="5.6" fill="rgb(224,224,208)" stroke="#800000" stroke-width="2"/>
<path d="M1101.04 425.96 A19.6 19.6 0 0 1 1126.16 435.1 L1119.21 438.64 A11.8 11.8 0 0 0 1104.09 433.14 Z" fill="#000090"/>
<path d="M1116.36 462.04 A19.6 19.6 0 0 1 1091.24 452.9 L1098.19 449.36 A11.8 11.8 0 0 0 1113.31 454.86 Z" fill="#000090"/>
<rect x="1095.7" y="433.5" width="1.2" height="1.2" fill="#c0c000"/>
<rect x="1121.2" y="453.3" width="1.2" height="1.2" fill="#00c000"/>
<rect x="1091.1" y="471.2" width="34.8" height="12.6" fill="#004000" stroke="#30ff30" stroke-width="1.5" />
<text x="1108.7" y="481.2" font-size="10" fill="#50ff50" text-anchor="middle" font-weight="normal" stroke="#50ff50" stroke-width="0.25" >+95.6</text>
<circle cx="1108.7" cy="592" r="24.6" fill="rgb(200,200,200)" stroke="#800000" stroke-width="2"/>
<circle cx="1108.7" cy="592" r="5.6" fill="rgb(224,224,208)" stroke="#800000" stroke-width="2"/>
<path d="M1089.21 589.95 A19.6 19.6 0 0 1 1109.38 572.41 L1109.11 580.21 A11.8 11.8 0 0 0 1096.96 590.77 Z" fill="#000090"/>
<path d="M1128.19 594.05 A19.6 19.6 0 0 1 1108.02 611.59 L1108.29 603.79 A11.8 11.8 0 0 0 1120.44 593.23 Z" fill="#000090"/>
<rect x="1095.7" y="581.5" width="1.2" height="1.2" fill="#c0c000"/>
<rect x="1121.2" y="601.3" width="1.2" height="1.2" fill="#00c000"/>
<rect x="1091.1" y="619.2" width="34.8" height="12.6" fill="#004000" stroke="#30ff30" stroke-width="1.5" />
<text x="1108.7" y="629.2" font-size="10" fill="#50ff50" text-anchor="middle" font-weight="normal" stroke="#50ff50" stroke-width="0.25" >-191</text>
<text transform="translate(1060.5 441.5) scale(1 1.02)" font-size="9.8" fill="#900000" text-anchor="start" font-weight="normal" stroke="#900000" stroke-width="0.25" >M1</text>
<text transform="translate(1060.5 539) scale(1 1.02)" font-size="9.8" fill="#900000" text-anchor="start" font-weight="normal" stroke="#900000" stroke-width="0.25" >M2</text>
<polyline fill="none" stroke="#004000" stroke-width="2" points="740,149 863,149"/>
<text transform="translate(771.3 146.3) scale(1 1.02)" font-size="9.8" fill="#a02020" text-anchor="start" font-weight="normal" stroke="#a02020" stroke-width="0.25" >PWM2</text>
<polyline fill="none" stroke="#004000" stroke-width="2" points="740,161 863,161"/>
<text transform="translate(771.3 158.3) scale(1 1.02)" font-size="9.8" fill="#a02020" text-anchor="start" font-weight="normal" stroke="#a02020" stroke-width="0.25" >PWM3</text>
<polyline fill="none" stroke="#004000" stroke-width="2" points="740,174 863,174"/>
<text transform="translate(771.3 171.3) scale(1 1.02)" font-size="9.8" fill="#a02020" text-anchor="start" font-weight="normal" stroke="#a02020" stroke-width="0.25" >PWM4</text>
<text transform="translate(771.3 183.3) scale(1 1.02)" font-size="9.8" fill="#a02020" text-anchor="start" font-weight="normal" stroke="#a02020" stroke-width="0.25" >PWM5</text>
<text transform="translate(771.3 195.3) scale(1 1.02)" font-size="9.8" fill="#a02020" text-anchor="start" font-weight="normal" stroke="#a02020" stroke-width="0.25" >PWM6</text>
<text transform="translate(771.3 208.3) scale(1 1.02)" font-size="9.8" fill="#a02020" text-anchor="start" font-weight="normal" stroke="#a02020" stroke-width="0.25" >PWM7</text>
<polyline fill="none" stroke="#004000" stroke-width="2" points="740,186 820,186 820,223 863,223"/>
<polyline fill="none" stroke="#004000" stroke-width="2" points="740,198 814,198 814,235 863,235"/>
<polyline fill="none" stroke="#004000" stroke-width="2" points="740,211 808,211 808,248 863,248"/>
<polyline fill="none" stroke="#004000" stroke-width="2" points="740,223 801,223 801,469 863,469"/>
<polyline fill="none" stroke="#004000" stroke-width="2" points="740,235 795,235 795,481 863,481"/>
<polyline fill="none" stroke="#004000" stroke-width="2" points="740,248 789,248 789,494 863,494"/>
<polyline fill="none" stroke="#004000" stroke-width="2" points="740,260 783,260 783,543 863,543"/>
<polyline fill="none" stroke="#004000" stroke-width="2" points="740,272 777,272 777,555 863,555"/>
<polyline fill="none" stroke="#004000" stroke-width="2" points="740,284 770,284 770,568 863,568"/>
<text transform="translate(801.6 466.5) scale(1 1.02)" font-size="9.8" fill="#a02020" text-anchor="start" font-weight="normal" stroke="#a02020" stroke-width="0.25" >PWM8</text>
<text transform="translate(801.6 478.5) scale(1 1.02)" font-size="9.8" fill="#a02020" text-anchor="start" font-weight="normal" stroke="#a02020" stroke-width="0.25" >PWM9</text>
<text transform="translate(801.6 491.5) scale(1 1.02)" font-size="9.8" fill="#a02020" text-anchor="start" font-weight="normal" stroke="#a02020" stroke-width="0.25" >PWM10</text>
<text transform="translate(801.6 540.5) scale(1 1.02)" font-size="9.8" fill="#a02020" text-anchor="start" font-weight="normal" stroke="#a02020" stroke-width="0.25" >PWM11</text>
<text transform="translate(801.6 552.5) scale(1 1.02)" font-size="9.8" fill="#a02020" text-anchor="start" font-weight="normal" stroke="#a02020" stroke-width="0.25" >PWM12</text>
<text transform="translate(801.6 565.5) scale(1 1.02)" font-size="9.8" fill="#a02020" text-anchor="start" font-weight="normal" stroke="#a02020" stroke-width="0.25" >PWM13</text>
<polyline fill="none" stroke="#004000" stroke-width="2" points="740,124 764,124 764,567 699,567"/>
<polyline fill="none" stroke="#004000" stroke-width="2" points="740,137 758,137 758,555 699,555"/>
<polyline fill="none" stroke="#004000" stroke-width="2" points="740,297 752,297 752,543 699,543"/>
<polyline fill="none" stroke="#004000" stroke-width="2" points="740,309 746,309 746,530 699,530"/>
<polygon points="733.9,579.7 727.4,592 740.4,592" fill="none" stroke="#004000" stroke-width="2" stroke-linejoin="miter"/>
<polyline fill="none" stroke="#004000" stroke-width="2" points="734,592 734,616 752,616"/>
<polyline fill="none" stroke="#800000" stroke-width="2" points="752,616 766,616"/>
<rect x="709" y="624.5" width="10" height="9.8" rx="1.5" fill="none" stroke="#004000" stroke-width="2.2"/>
<path d="M710 625.5 L718 633.3 M710 633.3 L718 625.5" stroke="#004000" stroke-width="1.6"/>
<polyline fill="none" stroke="#004000" stroke-width="2" points="720,628 752,628"/>
<polyline fill="none" stroke="#800000" stroke-width="2" points="752,628 764,628"/>
<polyline fill="none" stroke="#004000" stroke-width="2" points="752,641 734,641 734,666"/>
<polyline fill="none" stroke="#800000" stroke-width="2" points="752,641 766,641"/>
<line x1="721" y1="666" x2="746" y2="666" stroke="#004000" stroke-width="2"/>
<line x1="727" y1="672" x2="740" y2="672" stroke="#004000" stroke-width="2"/>
<line x1="732" y1="678" x2="736" y2="678" stroke="#004000" stroke-width="2"/>
<rect x="749.2" y="620" width="5.4" height="5.6" fill="#4040ff"/>
<circle cx="789" cy="628.8" r="24.6" fill="rgb(200,200,200)" stroke="#800000" stroke-width="2"/>
<path d="M775.52 640.11 A17.6 17.6 0 0 1 775.52 617.49 L781.88 622.82 A9.3 9.3 0 0 0 781.88 634.78 Z" fill="#000090"/>
<path d="M802.48 617.49 A17.6 17.6 0 0 1 802.48 640.11 L796.12 634.78 A9.3 9.3 0 0 0 796.12 622.82 Z" fill="#000090"/>
<circle cx="789" cy="628.8" r="5.5" fill="rgb(224,224,208)" stroke="#800000" stroke-width="2"/>
<rect x="771.6" y="656.5" width="34.7" height="11.5" fill="#003000" stroke="#20e020" stroke-width="1.6" />
<text transform="translate(789 665.8) scale(1 1.02)" font-size="9.5" fill="#40ff40" text-anchor="middle" font-weight="normal" stroke="#40ff40" stroke-width="0.25" >+90.0</text>
<text transform="translate(771.2 589.3) scale(1 1.02)" font-size="9.8" fill="#900000" text-anchor="start" font-weight="normal" stroke="#900000" stroke-width="0.25" >SERVO2</text>
<text transform="translate(813.6 672.3) scale(1 1.02)" font-size="9.8" fill="#101010" text-anchor="start" font-weight="normal" stroke="#101010" stroke-width="0.25" >PW_MIN=544u</text>
<text transform="translate(813.6 684.5) scale(1 1.02)" font-size="9.8" fill="#101010" text-anchor="start" font-weight="normal" stroke="#101010" stroke-width="0.25" >PW_MAX=2400u</text>
<text transform="translate(708.3 672.3) scale(1 1.02)" font-size="9.8" fill="#101010" text-anchor="end" font-weight="normal" stroke="#101010" stroke-width="0.25" >4u</text>
<text transform="translate(716.8 684.5) scale(1 1.02)" font-size="9.8" fill="#101010" text-anchor="end" font-weight="normal" stroke="#101010" stroke-width="0.25" >00u</text>
<rect x="2" y="799" width="1230" height="63" fill="#ffffff" stroke="none" stroke-width="2" />
<line x1="2" y1="799" x2="1232" y2="799" stroke="#000" stroke-width="2"/>
<line x1="977" y1="799" x2="977" y2="862" stroke="#000" stroke-width="2"/>
<line x1="0" y1="862" x2="1232" y2="862" stroke="#000" stroke-width="2"/>
<text transform="translate(699.7 827) scale(1 1.02)" font-size="19.3" fill="#101080" text-anchor="start" font-weight="bold" >eld V2 motor party</text>
<text transform="translate(1027.9 841.5) scale(1 1.02)" font-size="25.5" fill="#1a8c96" text-anchor="start" font-weight="bold" >Arduino</text>
<circle cx="1194.5" cy="830.9" r="26.6" fill="#00979c"/>
<g stroke="#ffffff" stroke-width="3" fill="none"><ellipse cx="1186.9" cy="828.4" rx="7.7" ry="6.3"/><ellipse cx="1202.9" cy="828.4" rx="7.7" ry="6.3"/></g>
<path d="M1184.3 828.6 H1189.3 M1200.4 828.6 H1205.6 M1203 826 V831.2" stroke="#ffffff" stroke-width="1.6"/>
<text x="1194.6" y="843.6" font-size="6.6" fill="#ffffff" text-anchor="middle" font-weight="bold" letter-spacing="0.4">ARDUINO</text>
<rect x="2" y="2" width="1230" height="880" rx="2" fill="none" stroke="#000" stroke-width="2"/>
<defs>
<linearGradient id="scaleV" x1="0" y1="0" x2="0" y2="1">
 <stop offset="0" stop-color="#404040"/><stop offset="0.5" stop-color="#ffffff"/><stop offset="1" stop-color="#404040"/></linearGradient>
<linearGradient id="scaleH" x1="0" y1="0" x2="1" y2="0">
 <stop offset="0" stop-color="#404040"/><stop offset="0.5" stop-color="#ffffff"/><stop offset="1" stop-color="#404040"/></linearGradient>
<linearGradient id="scaleV2" x1="0" y1="0" x2="1" y2="0">
 <stop offset="0" stop-color="#000" stop-opacity="0.35"/><stop offset="0.3" stop-color="#000" stop-opacity="0"/><stop offset="0.7" stop-color="#000" stop-opacity="0"/><stop offset="1" stop-color="#000" stop-opacity="0.35"/></linearGradient>
<radialGradient id="knobO" cx="0.35" cy="0.3" r="0.85">
 <stop offset="0" stop-color="#e8e8e8"/><stop offset="0.55" stop-color="#a8a8a8"/><stop offset="0.9" stop-color="#707070"/><stop offset="1" stop-color="#505050"/></radialGradient>
<linearGradient id="knobI" x1="0" y1="0" x2="1" y2="1">
 <stop offset="0" stop-color="#707070"/><stop offset="0.35" stop-color="#c8c8c8"/><stop offset="0.5" stop-color="#ffffff"/><stop offset="0.6" stop-color="#a8a8a8"/><stop offset="1" stop-color="#f0f0f0"/></linearGradient>
<linearGradient id="ringG" x1="0" y1="0" x2="1" y2="1">
 <stop offset="0" stop-color="#8a8a8a"/><stop offset="1" stop-color="#3a3a3a"/></linearGradient>
<radialGradient id="btnD" cx="0.35" cy="0.3" r="0.8">
 <stop offset="0" stop-color="#b0b0b0"/><stop offset="1" stop-color="#303030"/></radialGradient>
<radialGradient id="btnP" cx="0.35" cy="0.3" r="0.8">
 <stop offset="0" stop-color="#ffffff"/><stop offset="1" stop-color="#e89090"/></radialGradient>
<linearGradient id="shadowR" x1="0" y1="0" x2="1" y2="0">
 <stop offset="0" stop-color="#000" stop-opacity="0.16"/><stop offset="1" stop-color="#000" stop-opacity="0"/></linearGradient>
<linearGradient id="shadowT" x1="0" y1="1" x2="0" y2="0">
 <stop offset="0" stop-color="#000" stop-opacity="0.12"/><stop offset="1" stop-color="#000" stop-opacity="0"/></linearGradient>
</defs>
<rect x="699" y="404" width="11" height="458" fill="url(#shadowR)"/>
<rect x="10" y="400" width="689" height="8" fill="url(#shadowT)"/>
<rect x="10" y="408" width="689" height="454" fill="#ffffff" stroke="none" stroke-width="2" />
<text transform="translate(13.7 424) scale(1 1.02)" font-size="11.9" fill="#7a7a86" text-anchor="start" font-weight="normal" >Digital Oscilloscope</text>
<rect x="679.2" y="410.2" width="18.7" height="18.6" fill="#e1e1e1" stroke="none" stroke-width="2" />
<path d="M685 416.5 L691.5 423 M691.5 416.5 L685 423" stroke="#f8f8f8" stroke-width="1.3"/>
<rect x="11" y="434" width="405" height="403" fill="#000000" stroke="none" stroke-width="2" />
<rect x="11.5" y="434.5" width="403" height="402" fill="none" stroke="#202020" stroke-width="1"/>
<rect x="11" y="837" width="405" height="2.5" fill="#ffffff" stroke="none" stroke-width="2" />
<line x1="12" y1="435.3" x2="416" y2="435.3" stroke="#c0c0c0" stroke-width="1"/>
<path d="M13.5 436V836.5 M13 436.5H414 M33.5 436V836.5 M13 456.5H414 M53.5 436V836.5 M13 476.5H414 M73.5 436V836.5 M13 496.5H414 M93.5 436V836.5 M13 516.5H414 M113.5 436V836.5 M13 536.5H414 M133.5 436V836.5 M13 556.5H414 M153.5 436V836.5 M13 576.5H414 M173.5 436V836.5 M13 596.5H414 M193.5 436V836.5 M13 616.5H414 M213.5 436V836.5 M13 636.5H414 M233.5 436V836.5 M13 656.5H414 M253.5 436V836.5 M13 676.5H414 M273.5 436V836.5 M13 696.5H414 M293.5 436V836.5 M13 716.5H414 M313.5 436V836.5 M13 736.5H414 M333.5 436V836.5 M13 756.5H414 M353.5 436V836.5 M13 776.5H414 M373.5 436V836.5 M13 796.5H414 M393.5 436V836.5 M13 816.5H414 M413.5 436V836.5 M13 836.5H414" stroke="#004000" stroke-width="1.1"/>
<line x1="213.5" y1="436" x2="213.5" y2="836" stroke="#b0b0b0" stroke-width="1" stroke-dasharray="4 2"/>
<polyline fill="none" stroke="#ffff30" stroke-width="1.4" points="13,496.5 22.5,496.5 22.5,516.5 49.5,516.5 49.5,496.5 77.5,496.5 77.5,516.5 104.5,516.5 104.5,496.5 131.5,496.5 131.5,516.5 158.5,516.5 158.5,496.5 186.5,496.5 186.5,516.5 213.5,516.5 213.5,496.5 240.5,496.5 240.5,516.5 268.5,516.5 268.5,496.5 295.5,496.5 295.5,516.5 322.5,516.5 322.5,496.5 349.5,496.5 349.5,516.5 377.5,516.5 377.5,496.5 404.5,496.5 404.5,516.5 414,516.5"/>
<line x1="13" y1="596.5" x2="414" y2="596.5" stroke="#20c8f0" stroke-width="1.3"/>
<line x1="13" y1="676.5" x2="414" y2="676.5" stroke="#e06888" stroke-width="1.3"/>
<line x1="13" y1="756.5" x2="414" y2="756.5" stroke="#20d878" stroke-width="1.3"/>
<rect x="11" y="839" width="405" height="17.5" fill="#f0f0f0" stroke="none" stroke-width="2" />
<line x1="11" y1="839.6" x2="416" y2="839.6" stroke="#101010" stroke-width="1.2"/>
<line x1="11" y1="856.4" x2="416" y2="856.4" stroke="#101010" stroke-width="1.2"/>
<rect x="10" y="857" width="689" height="4" fill="#dcdcdc" stroke="none" stroke-width="2" />
<line x1="10" y1="862" x2="699" y2="862" stroke="#000" stroke-width="2"/>
<rect x="359.7" y="841.5" width="18.1" height="13" fill="#cdcdcd" stroke="none" stroke-width="2" />
<path d="M21 844.3 L17.8 847.8 L21 851.3 M405.3 844.3 L408.5 847.8 L405.3 851.3" stroke="#505050" stroke-width="2" fill="none"/>
<line x1="9.5" y1="805" x2="9.5" y2="855" stroke="#101010" stroke-width="1.2" stroke-dasharray="12 3"/>
<rect x="416" y="433.3" width="283" height="423.5" fill="rgb(168,168,170)" stroke="none" stroke-width="2" />
<line x1="416.8" y1="433.3" x2="416.8" y2="857" stroke="#0a0a0a" stroke-width="1.8"/>
<line x1="418.2" y1="433.3" x2="418.2" y2="857" stroke="#f0f0f0" stroke-width="1"/>
<line x1="510.6" y1="433.3" x2="510.6" y2="857" stroke="#0a0a0a" stroke-width="1.8"/>
<line x1="512" y1="433.3" x2="512" y2="857" stroke="#f0f0f0" stroke-width="1"/>
<line x1="605" y1="433.3" x2="605" y2="857" stroke="#0a0a0a" stroke-width="1.8"/>
<line x1="606.4" y1="433.3" x2="606.4" y2="857" stroke="#f0f0f0" stroke-width="1"/>
<line x1="698.5" y1="433.3" x2="698.5" y2="857" stroke="#0a0a0a" stroke-width="1.8"/>
<line x1="416" y1="459.4" x2="699" y2="459.4" stroke="#0a0a0a" stroke-width="1.8"/>
<line x1="416" y1="460.8" x2="699" y2="460.8" stroke="#f0f0f0" stroke-width="1"/>
<line x1="416" y1="644.6" x2="699" y2="644.6" stroke="#0a0a0a" stroke-width="1.8"/>
<line x1="416" y1="646" x2="699" y2="646" stroke="#f0f0f0" stroke-width="1"/>
<line x1="416" y1="671.1" x2="699" y2="671.1" stroke="#0a0a0a" stroke-width="1.8"/>
<line x1="416" y1="672.5" x2="699" y2="672.5" stroke="#f0f0f0" stroke-width="1"/>
<line x1="416" y1="856.4" x2="699" y2="856.4" stroke="#0a0a0a" stroke-width="1.8"/>
<text transform="translate(460.2 451.7) scale(1 1.02)" font-size="11.5" fill="#f08a98" text-anchor="middle" font-weight="bold" >Trigger</text>
<text transform="translate(448.3 470) scale(1 1.02)" font-size="9" fill="#303030" text-anchor="middle" font-weight="normal" stroke="#303030" stroke-width="0.25" >Level</text>
<rect x="429.2" y="473.4" width="38.6" height="78.9" fill="#a8a8a8" stroke="#101010" stroke-width="1.5" />
<line x1="430.2" y1="474.6" x2="466.8" y2="474.6" stroke="#e8e8e8" stroke-width="1"/>
<rect x="436.5" y="475.4" width="24.3" height="74.9" fill="url(#scaleV)"/>
<line x1="461.3" y1="475.4" x2="461.3" y2="550.3" stroke="#101010" stroke-width="1.5"/>
<line x1="437.5" y1="477.4" x2="440.5" y2="477.4" stroke="#505050" stroke-width="1"/>
<line x1="456.8" y1="477.4" x2="459.8" y2="477.4" stroke="#505050" stroke-width="1"/>
<line x1="437.5" y1="481.4" x2="440.5" y2="481.4" stroke="#505050" stroke-width="1"/>
<line x1="456.8" y1="481.4" x2="459.8" y2="481.4" stroke="#505050" stroke-width="1"/>
<line x1="437.5" y1="485.4" x2="440.5" y2="485.4" stroke="#505050" stroke-width="1"/>
<line x1="456.8" y1="485.4" x2="459.8" y2="485.4" stroke="#505050" stroke-width="1"/>
<line x1="437.5" y1="489.4" x2="440.5" y2="489.4" stroke="#505050" stroke-width="1"/>
<line x1="456.8" y1="489.4" x2="459.8" y2="489.4" stroke="#505050" stroke-width="1"/>
<line x1="437.5" y1="493.4" x2="440.5" y2="493.4" stroke="#505050" stroke-width="1"/>
<line x1="456.8" y1="493.4" x2="459.8" y2="493.4" stroke="#505050" stroke-width="1"/>
<line x1="437.5" y1="497.4" x2="440.5" y2="497.4" stroke="#505050" stroke-width="1"/>
<line x1="456.8" y1="497.4" x2="459.8" y2="497.4" stroke="#505050" stroke-width="1"/>
<line x1="437.5" y1="501.4" x2="440.5" y2="501.4" stroke="#505050" stroke-width="1"/>
<line x1="456.8" y1="501.4" x2="459.8" y2="501.4" stroke="#505050" stroke-width="1"/>
<line x1="437.5" y1="505.4" x2="440.5" y2="505.4" stroke="#505050" stroke-width="1"/>
<line x1="456.8" y1="505.4" x2="459.8" y2="505.4" stroke="#505050" stroke-width="1"/>
<line x1="437.5" y1="509.4" x2="440.5" y2="509.4" stroke="#505050" stroke-width="1"/>
<line x1="456.8" y1="509.4" x2="459.8" y2="509.4" stroke="#505050" stroke-width="1"/>
<line x1="437.5" y1="513.4" x2="440.5" y2="513.4" stroke="#505050" stroke-width="1"/>
<line x1="456.8" y1="513.4" x2="459.8" y2="513.4" stroke="#505050" stroke-width="1"/>
<line x1="437.5" y1="517.4" x2="440.5" y2="517.4" stroke="#505050" stroke-width="1"/>
<line x1="456.8" y1="517.4" x2="459.8" y2="517.4" stroke="#505050" stroke-width="1"/>
<line x1="437.5" y1="521.4" x2="440.5" y2="521.4" stroke="#505050" stroke-width="1"/>
<line x1="456.8" y1="521.4" x2="459.8" y2="521.4" stroke="#505050" stroke-width="1"/>
<line x1="437.5" y1="525.4" x2="440.5" y2="525.4" stroke="#505050" stroke-width="1"/>
<line x1="456.8" y1="525.4" x2="459.8" y2="525.4" stroke="#505050" stroke-width="1"/>
<line x1="437.5" y1="529.4" x2="440.5" y2="529.4" stroke="#505050" stroke-width="1"/>
<line x1="456.8" y1="529.4" x2="459.8" y2="529.4" stroke="#505050" stroke-width="1"/>
<line x1="437.5" y1="533.4" x2="440.5" y2="533.4" stroke="#505050" stroke-width="1"/>
<line x1="456.8" y1="533.4" x2="459.8" y2="533.4" stroke="#505050" stroke-width="1"/>
<line x1="437.5" y1="537.4" x2="440.5" y2="537.4" stroke="#505050" stroke-width="1"/>
<line x1="456.8" y1="537.4" x2="459.8" y2="537.4" stroke="#505050" stroke-width="1"/>
<line x1="437.5" y1="541.4" x2="440.5" y2="541.4" stroke="#505050" stroke-width="1"/>
<line x1="456.8" y1="541.4" x2="459.8" y2="541.4" stroke="#505050" stroke-width="1"/>
<line x1="437.5" y1="545.4" x2="440.5" y2="545.4" stroke="#505050" stroke-width="1"/>
<line x1="456.8" y1="545.4" x2="459.8" y2="545.4" stroke="#505050" stroke-width="1"/>
<clipPath id="cl1"><rect x="436.5" y="475.4" width="24.3" height="74.9"/></clipPath><g clip-path="url(#cl1)">
<text x="448.2" y="478.1" font-size="10" fill="#202840" text-anchor="middle" font-weight="normal" stroke="#202840" stroke-width="0.25" >-10</text>
<text x="448.2" y="497.9" font-size="10" fill="#202840" text-anchor="middle" font-weight="normal" stroke="#202840" stroke-width="0.25" >0</text>
<text x="448.2" y="517.7" font-size="10" fill="#202840" text-anchor="middle" font-weight="normal" stroke="#202840" stroke-width="0.25" >10</text>
<text x="448.2" y="537.5" font-size="10" fill="#202840" text-anchor="middle" font-weight="normal" stroke="#202840" stroke-width="0.25" >20</text>
</g>
<polygon points="430.2,506.8 435.2,511.3 430.2,515.8" fill="#ff0000"/>
<polygon points="466.8,506.8 461.8,511.3 466.8,515.8" fill="#ff0000"/>
<path d="M423.5 500.2 L419 507.2 H428 Z M423.5 521.9 L419 514.9 H428 Z" fill="#f0a0b0"/>
<line x1="424" y1="505" x2="424" y2="517" stroke="#f0a0b0" stroke-width="2"/>
<text transform="translate(492 476.2) scale(1 1.02)" font-size="9.5" fill="#303030" text-anchor="end" font-weight="normal" stroke="#303030" stroke-width="0.25" >AC</text>
<text transform="translate(491.7 490.3) scale(1 1.02)" font-size="9.5" fill="#303030" text-anchor="end" font-weight="normal" stroke="#303030" stroke-width="0.25" >DC</text>
<rect x="494.3" y="462.5" width="14" height="33.2" fill="#a8a8a8" stroke="#101010" stroke-width="1.5" />
<line x1="495.8" y1="464" x2="506.8" y2="464" stroke="#e0e0e0" stroke-width="1"/>
<line x1="501.3" y1="467.5" x2="501.3" y2="490.7" stroke="#101010" stroke-width="2.2"/>
<rect x="496.8" y="479" width="9" height="14.8" fill="#c8c8c8" stroke="#606060" stroke-width="1" />
<line x1="498.3" y1="482" x2="504.3" y2="482" stroke="#505050" stroke-width="1"/>
<line x1="498.3" y1="484.5" x2="504.3" y2="484.5" stroke="#505050" stroke-width="1"/>
<line x1="498.3" y1="487" x2="504.3" y2="487" stroke="#505050" stroke-width="1"/>
<line x1="498.3" y1="489.5" x2="504.3" y2="489.5" stroke="#505050" stroke-width="1"/>
<rect x="494.3" y="507.2" width="14" height="33.3" fill="#a8a8a8" stroke="#101010" stroke-width="1.5" />
<line x1="495.8" y1="508.7" x2="506.8" y2="508.7" stroke="#e0e0e0" stroke-width="1"/>
<line x1="501.3" y1="512.2" x2="501.3" y2="535.5" stroke="#101010" stroke-width="2.2"/>
<rect x="496.8" y="508.8" width="9" height="15" fill="#c8c8c8" stroke="#606060" stroke-width="1" />
<line x1="498.3" y1="511.8" x2="504.3" y2="511.8" stroke="#505050" stroke-width="1"/>
<line x1="498.3" y1="514.3" x2="504.3" y2="514.3" stroke="#505050" stroke-width="1"/>
<line x1="498.3" y1="516.8" x2="504.3" y2="516.8" stroke="#505050" stroke-width="1"/>
<line x1="498.3" y1="519.3" x2="504.3" y2="519.3" stroke="#505050" stroke-width="1"/>
<path d="M482.8 521.5 H486.5 V512 H489.8 M482.8 526 H486.5 V536 H489.8" stroke="#202020" stroke-width="1.2" fill="none"/>
<rect x="494.1" y="553.4" width="14" height="13.9" fill="url(#btnP)" stroke="#202020" stroke-width="1" />
<line x1="494.1" y1="553.9" x2="508.1" y2="553.9" stroke="#e0e0e0" stroke-width="1"/>
<rect x="494.1" y="569.4" width="14" height="13.9" fill="url(#btnD)" stroke="#202020" stroke-width="1" />
<line x1="494.1" y1="569.9" x2="508.1" y2="569.9" stroke="#e0e0e0" stroke-width="1"/>
<rect x="494.1" y="585.3" width="14" height="13.9" fill="url(#btnD)" stroke="#202020" stroke-width="1" />
<line x1="494.1" y1="585.8" x2="508.1" y2="585.8" stroke="#e0e0e0" stroke-width="1"/>
<text transform="translate(491.1 564) scale(1 1.02)" font-size="9.5" fill="#303030" text-anchor="end" font-weight="normal" stroke="#303030" stroke-width="0.25" >Auto</text>
<text transform="translate(491.1 580) scale(1 1.02)" font-size="9.5" fill="#303030" text-anchor="end" font-weight="normal" stroke="#303030" stroke-width="0.25" >One-Shot</text>
<text transform="translate(491.1 596) scale(1 1.02)" font-size="9.5" fill="#303030" text-anchor="end" font-weight="normal" stroke="#303030" stroke-width="0.25" >Cursors</text>
<text transform="translate(463.5 615.2) scale(1 1.02)" font-size="9.5" fill="#303030" text-anchor="middle" font-weight="normal" stroke="#303030" stroke-width="0.25" >Source</text>
<text transform="translate(443.6 626.3) scale(1 1.02)" font-size="9.5" fill="#f0f020" text-anchor="middle" font-weight="bold" >A</text>
<text transform="translate(458.3 626.3) scale(1 1.02)" font-size="9.5" fill="#2090e0" text-anchor="middle" font-weight="bold" >B</text>
<text transform="translate(472.5 626.3) scale(1 1.02)" font-size="9.5" fill="#e02090" text-anchor="middle" font-weight="bold" >C</text>
<text transform="translate(487 626.3) scale(1 1.02)" font-size="9.5" fill="#20a040" text-anchor="middle" font-weight="bold" >D</text>
<rect x="432.2" y="628.1" width="63.3" height="14.4" fill="#a8a8a8" stroke="#101010" stroke-width="1.5" />
<line x1="448.9" y1="635.3" x2="490.5" y2="635.3" stroke="#101010" stroke-width="2.2"/>
<rect x="434.3" y="630.1" width="14.6" height="10.4" fill="#c8c8c8" stroke="#606060" stroke-width="1" />
<line x1="437.3" y1="632.1" x2="437.3" y2="638.5" stroke="#505050" stroke-width="1"/>
<line x1="439.8" y1="632.1" x2="439.8" y2="638.5" stroke="#505050" stroke-width="1"/>
<line x1="442.3" y1="632.1" x2="442.3" y2="638.5" stroke="#505050" stroke-width="1"/>
<line x1="444.8" y1="632.1" x2="444.8" y2="638.5" stroke="#505050" stroke-width="1"/>
<text transform="translate(461 663.6) scale(1 1.02)" font-size="11.5" fill="#f07820" text-anchor="middle" font-weight="bold" >Horizontal</text>
<text transform="translate(462.9 685.2) scale(1 1.02)" font-size="9.5" fill="#303030" text-anchor="middle" font-weight="normal" stroke="#303030" stroke-width="0.25" >Source</text>
<path d="M430 694.5 L440 687.5 V693.5" stroke="#f08030" stroke-width="1.3" fill="none"/>
<text transform="translate(449.3 694.7) scale(1 1.02)" font-size="9.5" fill="#f0f020" text-anchor="middle" font-weight="bold" >A</text>
<text transform="translate(464.1 694.7) scale(1 1.02)" font-size="9.5" fill="#2090e0" text-anchor="middle" font-weight="bold" >B</text>
<text transform="translate(478.7 694.7) scale(1 1.02)" font-size="9.5" fill="#e02090" text-anchor="middle" font-weight="bold" >C</text>
<text transform="translate(493.1 694.7) scale(1 1.02)" font-size="9.5" fill="#20a040" text-anchor="middle" font-weight="bold" >D</text>
<rect x="425.1" y="697.4" width="78.5" height="14.3" fill="#a8a8a8" stroke="#101010" stroke-width="1.5" />
<line x1="442" y1="704.55" x2="498.6" y2="704.55" stroke="#101010" stroke-width="2.2"/>
<rect x="427.1" y="699.4" width="14.9" height="10.3" fill="#c8c8c8" stroke="#606060" stroke-width="1" />
<line x1="430.1" y1="701.4" x2="430.1" y2="707.7" stroke="#505050" stroke-width="1"/>
<line x1="432.6" y1="701.4" x2="432.6" y2="707.7" stroke="#505050" stroke-width="1"/>
<line x1="435.1" y1="701.4" x2="435.1" y2="707.7" stroke="#505050" stroke-width="1"/>
<line x1="437.6" y1="701.4" x2="437.6" y2="707.7" stroke="#505050" stroke-width="1"/>
<text transform="translate(463 723) scale(1 1.02)" font-size="9" fill="#303030" text-anchor="middle" font-weight="normal" stroke="#303030" stroke-width="0.25" >Position</text>
<rect x="424.8" y="725.7" width="79.7" height="39.1" fill="#9a9a9a" stroke="#101010" stroke-width="2" />
<rect x="427" y="733.1" width="75" height="24.6" fill="url(#scaleH)"/>
<path d="M429 734V738 M429 757V753 M431.55 734V736.5 M431.55 757V754.5 M434.1 734V736.5 M434.1 757V754.5 M436.65 734V736.5 M436.65 757V754.5 M439.2 734V738 M439.2 757V753 M441.75 734V736.5 M441.75 757V754.5 M444.3 734V736.5 M444.3 757V754.5 M446.85 734V736.5 M446.85 757V754.5 M449.4 734V738 M449.4 757V753 M451.95 734V736.5 M451.95 757V754.5 M454.5 734V736.5 M454.5 757V754.5 M457.05 734V736.5 M457.05 757V754.5 M459.6 734V738 M459.6 757V753 M462.15 734V736.5 M462.15 757V754.5 M464.7 734V736.5 M464.7 757V754.5 M467.25 734V736.5 M467.25 757V754.5 M469.8 734V738 M469.8 757V753 M472.35 734V736.5 M472.35 757V754.5 M474.9 734V736.5 M474.9 757V754.5 M477.45 734V736.5 M477.45 757V754.5 M480 734V738 M480 757V753 M482.55 734V736.5 M482.55 757V754.5 M485.1 734V736.5 M485.1 757V754.5 M487.65 734V736.5 M487.65 757V754.5 M490.2 734V738 M490.2 757V753 M492.75 734V736.5 M492.75 757V754.5 M495.3 734V736.5 M495.3 757V754.5 M497.85 734V736.5 M497.85 757V754.5 M500.4 734V738 M500.4 757V753" stroke="#404040" stroke-width="1"/>
<line x1="427" y1="757" x2="502" y2="757" stroke="#202020" stroke-width="1.5"/>
<polygon points="459.5,727.4 467.9,727.4 463.7,731.9" fill="#ff0000"/>
<polygon points="459.5,762.6 467.9,762.6 463.7,758.4" fill="#ff0000"/>
<text x="443.3" y="748.5" font-size="10.5" fill="#202840" text-anchor="middle" font-weight="normal" >210</text>
<text x="463.7" y="748.5" font-size="10.5" fill="#202840" text-anchor="middle" font-weight="normal" >200</text>
<text x="484.1" y="748.5" font-size="10.5" fill="#202840" text-anchor="middle" font-weight="normal" >190</text>
<path d="M420.5 852.96 V809.5 A43.9 43.9 0 0 1 508.3 809.5 V852.96 H482.9 V831.5 H445.4 V852.96 Z" fill="#ffffff" stroke="#505050" stroke-width="1.2"/>
<line x1="482.87" y1="785.86" x2="492.04" y2="774.12" stroke="#a4a4a4" stroke-width="3"/>
<line x1="460.87" y1="780.72" x2="460.38" y2="776.75" stroke="#202020" stroke-width="1"/>
<text x="459.66" y="773.59" font-size="7.6" fill="#202020" text-anchor="middle" font-weight="normal" stroke="#202020" stroke-width="0.25" >0.5</text>
<line x1="468.94" y1="780.86" x2="469.56" y2="776.91" stroke="#202020" stroke-width="1"/>
<text x="470.49" y="773.78" font-size="7.6" fill="#202020" text-anchor="middle" font-weight="normal" stroke="#202020" stroke-width="0.25" >0.2</text>
<line x1="453.07" y1="782.81" x2="451.51" y2="779.12" stroke="#202020" stroke-width="1"/>
<text x="449.67" y="777.5" font-size="7.6" fill="#202020" text-anchor="middle" font-weight="normal" stroke="#202020" stroke-width="0.25" >1</text>
<line x1="445.37" y1="787.61" x2="442.75" y2="784.59" stroke="#202020" stroke-width="1"/>
<text x="439.73" y="783.82" font-size="7.6" fill="#202020" text-anchor="middle" font-weight="normal" stroke="#202020" stroke-width="0.25" >2</text>
<line x1="440.08" y1="793.71" x2="436.72" y2="791.53" stroke="#202020" stroke-width="1"/>
<text x="432.61" y="791.56" font-size="7.6" fill="#202020" text-anchor="middle" font-weight="normal" stroke="#202020" stroke-width="0.25" >5</text>
<line x1="436.45" y1="801.75" x2="432.6" y2="800.68" stroke="#202020" stroke-width="1"/>
<text x="426.24" y="801.62" font-size="7.6" fill="#202020" text-anchor="middle" font-weight="normal" stroke="#202020" stroke-width="0.25" >10</text>
<line x1="435.4" y1="809.5" x2="431.4" y2="809.5" stroke="#202020" stroke-width="1"/>
<text x="426.2" y="812.2" font-size="7.6" fill="#202020" text-anchor="middle" font-weight="normal" stroke="#202020" stroke-width="0.25" >20</text>
<line x1="436.57" y1="817.64" x2="432.73" y2="818.76" stroke="#202020" stroke-width="1"/>
<text x="425.43" y="823.6" font-size="7.6" fill="#202020" text-anchor="middle" font-weight="normal" stroke="#202020" stroke-width="0.25" >50</text>
<line x1="439.29" y1="824" x2="435.82" y2="826" stroke="#202020" stroke-width="1"/>
<text x="427.59" y="833.45" font-size="7.6" fill="#202020" text-anchor="middle" font-weight="normal" stroke="#202020" stroke-width="0.25" >100</text>
<line x1="444.62" y1="830.71" x2="441.89" y2="833.63" stroke="#202020" stroke-width="1"/>
<text x="436.03" y="842.62" font-size="7.6" fill="#202020" text-anchor="middle" font-weight="normal" stroke="#202020" stroke-width="0.25" >200</text>
<line x1="475.73" y1="782.81" x2="477.29" y2="779.12" stroke="#202020" stroke-width="1"/>
<text x="478.47" y="779.06" font-size="7.6" fill="#202020" text-anchor="middle" font-weight="normal" stroke="#202020" stroke-width="0.25" >0.1</text>
<line x1="484.36" y1="788.46" x2="487.12" y2="785.56" stroke="#202020" stroke-width="1"/>
<text x="489.8" y="785.43" font-size="7.6" fill="#202020" text-anchor="middle" font-weight="normal" stroke="#202020" stroke-width="0.25" >50</text>
<line x1="488.99" y1="794.13" x2="492.39" y2="792.01" stroke="#202020" stroke-width="1"/>
<text x="496.97" y="791.85" font-size="7.6" fill="#202020" text-anchor="middle" font-weight="normal" stroke="#202020" stroke-width="0.25" >20</text>
<line x1="492.28" y1="801.51" x2="496.12" y2="800.4" stroke="#202020" stroke-width="1"/>
<text x="501.12" y="801.67" font-size="7.6" fill="#202020" text-anchor="middle" font-weight="normal" stroke="#202020" stroke-width="0.25" >10</text>
<line x1="493.4" y1="809.5" x2="497.4" y2="809.5" stroke="#202020" stroke-width="1"/>
<text x="503.3" y="812.2" font-size="7.6" fill="#202020" text-anchor="middle" font-weight="normal" stroke="#202020" stroke-width="0.25" >5</text>
<line x1="492.35" y1="817.25" x2="496.2" y2="818.32" stroke="#202020" stroke-width="1"/>
<text x="502.56" y="822.78" font-size="7.6" fill="#202020" text-anchor="middle" font-weight="normal" stroke="#202020" stroke-width="0.25" >2</text>
<line x1="488.99" y1="824.87" x2="492.39" y2="826.99" stroke="#202020" stroke-width="1"/>
<text x="499.68" y="834.24" font-size="7.6" fill="#202020" text-anchor="middle" font-weight="normal" stroke="#202020" stroke-width="0.25" >1</text>
<line x1="484.18" y1="830.71" x2="486.91" y2="833.63" stroke="#202020" stroke-width="1"/>
<text x="492.77" y="842.62" font-size="7.6" fill="#202020" text-anchor="middle" font-weight="normal" stroke="#202020" stroke-width="0.25" >0.5</text>
<text x="432.3" y="849" font-size="10" fill="#202020" text-anchor="middle" font-weight="normal" stroke="#202020" stroke-width="0.25" >ms</text>
<text x="496" y="849" font-size="10" fill="#202020" text-anchor="middle" font-weight="normal" stroke="#202020" stroke-width="0.25" >µs</text>
<rect x="447" y="840.5" width="35.2" height="12.9" fill="#ffffff" stroke="none" stroke-width="2" />
<line x1="447" y1="841" x2="482.2" y2="841" stroke="#101010" stroke-width="1.5"/>
<line x1="447.5" y1="840.5" x2="447.5" y2="853.4" stroke="#101010" stroke-width="1.5"/>
<text x="449.4" y="850.1" font-size="9.8" fill="#3030a0" text-anchor="start" font-weight="normal" stroke="#3030a0" stroke-width="0.25" >5m</text>
<circle cx="464.4" cy="809.5" r="29.6" fill="url(#knobO)"/>
<circle cx="464.4" cy="809.5" r="16.4" fill="url(#ringG)"/>
<circle cx="464.4" cy="809.5" r="14.2" fill="url(#knobI)"/>
<polygon points="442.2,794.5 451.9,794.3 445.3,803.5" fill="#e07a20"/>
<polygon points="467.4,820.5 474.4,815.5 473.4,822.5" fill="#e07a20"/>
<text transform="translate(557.1 451.7) scale(1 1.02)" font-size="11.5" fill="#f8f820" text-anchor="middle" font-weight="bold" >Channel A</text>
<text transform="translate(541.2 470.3) scale(1 1.02)" font-size="9" fill="#303030" text-anchor="middle" font-weight="normal" stroke="#303030" stroke-width="0.25" >Position</text>
<rect x="523" y="473.4" width="38.6" height="78.9" fill="#a8a8a8" stroke="#101010" stroke-width="1.5" />
<line x1="524" y1="474.6" x2="560.6" y2="474.6" stroke="#e8e8e8" stroke-width="1"/>
<rect x="530.3" y="475.4" width="24.3" height="74.9" fill="url(#scaleV)"/>
<line x1="555.1" y1="475.4" x2="555.1" y2="550.3" stroke="#101010" stroke-width="1.5"/>
<line x1="531.3" y1="477.4" x2="534.3" y2="477.4" stroke="#505050" stroke-width="1"/>
<line x1="550.6" y1="477.4" x2="553.6" y2="477.4" stroke="#505050" stroke-width="1"/>
<line x1="531.3" y1="481.4" x2="534.3" y2="481.4" stroke="#505050" stroke-width="1"/>
<line x1="550.6" y1="481.4" x2="553.6" y2="481.4" stroke="#505050" stroke-width="1"/>
<line x1="531.3" y1="485.4" x2="534.3" y2="485.4" stroke="#505050" stroke-width="1"/>
<line x1="550.6" y1="485.4" x2="553.6" y2="485.4" stroke="#505050" stroke-width="1"/>
<line x1="531.3" y1="489.4" x2="534.3" y2="489.4" stroke="#505050" stroke-width="1"/>
<line x1="550.6" y1="489.4" x2="553.6" y2="489.4" stroke="#505050" stroke-width="1"/>
<line x1="531.3" y1="493.4" x2="534.3" y2="493.4" stroke="#505050" stroke-width="1"/>
<line x1="550.6" y1="493.4" x2="553.6" y2="493.4" stroke="#505050" stroke-width="1"/>
<line x1="531.3" y1="497.4" x2="534.3" y2="497.4" stroke="#505050" stroke-width="1"/>
<line x1="550.6" y1="497.4" x2="553.6" y2="497.4" stroke="#505050" stroke-width="1"/>
<line x1="531.3" y1="501.4" x2="534.3" y2="501.4" stroke="#505050" stroke-width="1"/>
<line x1="550.6" y1="501.4" x2="553.6" y2="501.4" stroke="#505050" stroke-width="1"/>
<line x1="531.3" y1="505.4" x2="534.3" y2="505.4" stroke="#505050" stroke-width="1"/>
<line x1="550.6" y1="505.4" x2="553.6" y2="505.4" stroke="#505050" stroke-width="1"/>
<line x1="531.3" y1="509.4" x2="534.3" y2="509.4" stroke="#505050" stroke-width="1"/>
<line x1="550.6" y1="509.4" x2="553.6" y2="509.4" stroke="#505050" stroke-width="1"/>
<line x1="531.3" y1="513.4" x2="534.3" y2="513.4" stroke="#505050" stroke-width="1"/>
<line x1="550.6" y1="513.4" x2="553.6" y2="513.4" stroke="#505050" stroke-width="1"/>
<line x1="531.3" y1="517.4" x2="534.3" y2="517.4" stroke="#505050" stroke-width="1"/>
<line x1="550.6" y1="517.4" x2="553.6" y2="517.4" stroke="#505050" stroke-width="1"/>
<line x1="531.3" y1="521.4" x2="534.3" y2="521.4" stroke="#505050" stroke-width="1"/>
<line x1="550.6" y1="521.4" x2="553.6" y2="521.4" stroke="#505050" stroke-width="1"/>
<line x1="531.3" y1="525.4" x2="534.3" y2="525.4" stroke="#505050" stroke-width="1"/>
<line x1="550.6" y1="525.4" x2="553.6" y2="525.4" stroke="#505050" stroke-width="1"/>
<line x1="531.3" y1="529.4" x2="534.3" y2="529.4" stroke="#505050" stroke-width="1"/>
<line x1="550.6" y1="529.4" x2="553.6" y2="529.4" stroke="#505050" stroke-width="1"/>
<line x1="531.3" y1="533.4" x2="534.3" y2="533.4" stroke="#505050" stroke-width="1"/>
<line x1="550.6" y1="533.4" x2="553.6" y2="533.4" stroke="#505050" stroke-width="1"/>
<line x1="531.3" y1="537.4" x2="534.3" y2="537.4" stroke="#505050" stroke-width="1"/>
<line x1="550.6" y1="537.4" x2="553.6" y2="537.4" stroke="#505050" stroke-width="1"/>
<line x1="531.3" y1="541.4" x2="534.3" y2="541.4" stroke="#505050" stroke-width="1"/>
<line x1="550.6" y1="541.4" x2="553.6" y2="541.4" stroke="#505050" stroke-width="1"/>
<line x1="531.3" y1="545.4" x2="534.3" y2="545.4" stroke="#505050" stroke-width="1"/>
<line x1="550.6" y1="545.4" x2="553.6" y2="545.4" stroke="#505050" stroke-width="1"/>
<clipPath id="cl2"><rect x="530.3" y="475.4" width="24.3" height="74.9"/></clipPath><g clip-path="url(#cl2)">
<text x="542.4" y="494.1" font-size="10" fill="#202840" text-anchor="middle" font-weight="normal" stroke="#202840" stroke-width="0.25" >110</text>
<text x="542.4" y="514.1" font-size="10" fill="#202840" text-anchor="middle" font-weight="normal" stroke="#202840" stroke-width="0.25" >120</text>
<text x="542.4" y="533.6" font-size="10" fill="#202840" text-anchor="middle" font-weight="normal" stroke="#202840" stroke-width="0.25" >130</text>
</g>
<polygon points="524,506.5 529,511 524,515.5" fill="#ff0000"/>
<polygon points="560.6,506.5 555.6,511 560.6,515.5" fill="#ff0000"/>
<path d="M517.2 500.2 L512.7 507.2 H521.7 Z M517.2 521.8 L512.7 514.8 H521.7 Z" fill="#f8f820"/>
<line x1="517" y1="505" x2="517" y2="517" stroke="#f8f820" stroke-width="2"/>
<text transform="translate(585.8 476.2) scale(1 1.02)" font-size="9.5" fill="#303030" text-anchor="end" font-weight="normal" stroke="#303030" stroke-width="0.25" >AC</text>
<text transform="translate(585.8 489.6) scale(1 1.02)" font-size="9.5" fill="#303030" text-anchor="end" font-weight="normal" stroke="#303030" stroke-width="0.25" >DC</text>
<text transform="translate(585.8 503.9) scale(1 1.02)" font-size="9.5" fill="#303030" text-anchor="end" font-weight="normal" stroke="#303030" stroke-width="0.25" >GND</text>
<text transform="translate(585.8 517.9) scale(1 1.02)" font-size="9.5" fill="#303030" text-anchor="end" font-weight="normal" stroke="#303030" stroke-width="0.25" >OFF</text>
<rect x="588.4" y="462.9" width="14" height="62.1" fill="#a8a8a8" stroke="#101010" stroke-width="1.5" />
<line x1="589.9" y1="464.4" x2="600.9" y2="464.4" stroke="#e0e0e0" stroke-width="1"/>
<line x1="595.4" y1="467.9" x2="595.4" y2="520" stroke="#101010" stroke-width="2.2"/>
<rect x="590.9" y="479.1" width="9" height="14.7" fill="#c8c8c8" stroke="#606060" stroke-width="1" />
<line x1="592.4" y1="482.1" x2="598.4" y2="482.1" stroke="#505050" stroke-width="1"/>
<line x1="592.4" y1="484.6" x2="598.4" y2="484.6" stroke="#505050" stroke-width="1"/>
<line x1="592.4" y1="487.1" x2="598.4" y2="487.1" stroke="#505050" stroke-width="1"/>
<line x1="592.4" y1="489.6" x2="598.4" y2="489.6" stroke="#505050" stroke-width="1"/>
<text transform="translate(586 537.3) scale(1 1.02)" font-size="9.5" fill="#303030" text-anchor="end" font-weight="normal" stroke="#303030" stroke-width="0.25" >Invert</text>
<rect x="588.6" y="527" width="13.8" height="14.1" fill="url(#btnD)" stroke="#202020" stroke-width="1" />
<line x1="588.6" y1="527.5" x2="602.4" y2="527.5" stroke="#e0e0e0" stroke-width="1"/>
<text transform="translate(586 553.6) scale(1 1.02)" font-size="9.5" fill="#303030" text-anchor="end" font-weight="normal" stroke="#303030" stroke-width="0.25" >A+B</text>
<rect x="588.6" y="543.2" width="13.8" height="14" fill="url(#btnD)" stroke="#202020" stroke-width="1" />
<line x1="588.6" y1="543.7" x2="602.4" y2="543.7" stroke="#e0e0e0" stroke-width="1"/>
<path d="M514.2 642.06 V598.3 A44.2 44.2 0 0 1 602.6 598.3 V642.06 H576.9 V620.3 H539.4 V642.06 Z" fill="#ffffff" stroke="#505050" stroke-width="1.2"/>
<line x1="576.87" y1="574.66" x2="586.23" y2="562.68" stroke="#a4a4a4" stroke-width="3"/>
<line x1="547.54" y1="571.41" x2="546.04" y2="567.7" stroke="#202020" stroke-width="1"/>
<text x="543.94" y="565.21" font-size="7.6" fill="#202020" text-anchor="middle" font-weight="normal" stroke="#202020" stroke-width="0.25" >0.5</text>
<line x1="558.4" y1="569.3" x2="558.4" y2="565.3" stroke="#202020" stroke-width="1"/>
<text x="558.4" y="562.4" font-size="7.6" fill="#202020" text-anchor="middle" font-weight="normal" stroke="#202020" stroke-width="0.25" >0.2</text>
<line x1="569.26" y1="571.41" x2="570.76" y2="567.7" stroke="#202020" stroke-width="1"/>
<text x="572.86" y="565.21" font-size="7.6" fill="#202020" text-anchor="middle" font-weight="normal" stroke="#202020" stroke-width="0.25" >0.1</text>
<line x1="537.89" y1="577.79" x2="535.07" y2="574.97" stroke="#202020" stroke-width="1"/>
<text x="531.11" y="573.71" font-size="7.6" fill="#202020" text-anchor="middle" font-weight="normal" stroke="#202020" stroke-width="0.25" >1</text>
<line x1="531.15" y1="588.38" x2="527.39" y2="587.01" stroke="#202020" stroke-width="1"/>
<text x="522.13" y="587.8" font-size="7.6" fill="#202020" text-anchor="middle" font-weight="normal" stroke="#202020" stroke-width="0.25" >2</text>
<line x1="529.4" y1="598.3" x2="525.4" y2="598.3" stroke="#202020" stroke-width="1"/>
<text x="519.8" y="601" font-size="7.6" fill="#202020" text-anchor="middle" font-weight="normal" stroke="#202020" stroke-width="0.25" >5</text>
<line x1="531.51" y1="609.16" x2="527.8" y2="610.66" stroke="#202020" stroke-width="1"/>
<text x="522.61" y="615.46" font-size="7.6" fill="#202020" text-anchor="middle" font-weight="normal" stroke="#202020" stroke-width="0.25" >10</text>
<line x1="537.19" y1="618.08" x2="534.27" y2="620.81" stroke="#202020" stroke-width="1"/>
<text x="530.17" y="627.33" font-size="7.6" fill="#202020" text-anchor="middle" font-weight="normal" stroke="#202020" stroke-width="0.25" >20</text>
<line x1="579.61" y1="578.52" x2="582.53" y2="575.79" stroke="#202020" stroke-width="1"/>
<text x="586.63" y="574.67" font-size="7.6" fill="#202020" text-anchor="middle" font-weight="normal" stroke="#202020" stroke-width="0.25" >50</text>
<line x1="585.65" y1="588.38" x2="589.41" y2="587.01" stroke="#202020" stroke-width="1"/>
<text x="594.67" y="587.8" font-size="7.6" fill="#202020" text-anchor="middle" font-weight="normal" stroke="#202020" stroke-width="0.25" >20</text>
<line x1="587.4" y1="598.3" x2="591.4" y2="598.3" stroke="#202020" stroke-width="1"/>
<text x="597" y="601" font-size="7.6" fill="#202020" text-anchor="middle" font-weight="normal" stroke="#202020" stroke-width="0.25" >10</text>
<line x1="585.09" y1="609.63" x2="588.78" y2="611.19" stroke="#202020" stroke-width="1"/>
<text x="593.93" y="616.08" font-size="7.6" fill="#202020" text-anchor="middle" font-weight="normal" stroke="#202020" stroke-width="0.25" >5</text>
<line x1="578.91" y1="618.81" x2="581.73" y2="621.63" stroke="#202020" stroke-width="1"/>
<text x="585.69" y="628.29" font-size="7.6" fill="#202020" text-anchor="middle" font-weight="normal" stroke="#202020" stroke-width="0.25" >2</text>
<text x="526" y="637.8" font-size="10" fill="#202020" text-anchor="middle" font-weight="normal" stroke="#202020" stroke-width="0.25" >V</text>
<text x="590.3" y="637.8" font-size="10" fill="#202020" text-anchor="middle" font-weight="normal" stroke="#202020" stroke-width="0.25" >mV</text>
<rect x="541" y="629.3" width="35.2" height="12.9" fill="#ffffff" stroke="none" stroke-width="2" />
<line x1="541" y1="629.8" x2="576.2" y2="629.8" stroke="#101010" stroke-width="1.5"/>
<line x1="541.5" y1="629.3" x2="541.5" y2="642.2" stroke="#101010" stroke-width="1.5"/>
<text x="543.4" y="638.9" font-size="9.8" fill="#3030a0" text-anchor="start" font-weight="normal" stroke="#3030a0" stroke-width="0.25" >5</text>
<circle cx="558.4" cy="598.3" r="29.6" fill="url(#knobO)"/>
<circle cx="558.4" cy="598.3" r="16.4" fill="url(#ringG)"/>
<circle cx="558.4" cy="598.3" r="14.2" fill="url(#knobI)"/>
<polygon points="530.9,598.3 539.4,592.7 539.4,603.9" fill="#f8f820"/>
<polygon points="560.4,606.3 567.4,602.3 567.4,609.3" fill="#f8f820"/>
<text transform="translate(651.7 451.7) scale(1 1.02)" font-size="11.5" fill="#e82090" text-anchor="middle" font-weight="bold" >Channel C</text>
<text transform="translate(635.8 470.3) scale(1 1.02)" font-size="9" fill="#303030" text-anchor="middle" font-weight="normal" stroke="#303030" stroke-width="0.25" >Position</text>
<rect x="617.6" y="473.4" width="38.6" height="78.9" fill="#a8a8a8" stroke="#101010" stroke-width="1.5" />
<line x1="618.6" y1="474.6" x2="655.2" y2="474.6" stroke="#e8e8e8" stroke-width="1"/>
<rect x="624.9" y="475.4" width="24.3" height="74.9" fill="url(#scaleV)"/>
<line x1="649.7" y1="475.4" x2="649.7" y2="550.3" stroke="#101010" stroke-width="1.5"/>
<line x1="625.9" y1="477.4" x2="628.9" y2="477.4" stroke="#505050" stroke-width="1"/>
<line x1="645.2" y1="477.4" x2="648.2" y2="477.4" stroke="#505050" stroke-width="1"/>
<line x1="625.9" y1="481.4" x2="628.9" y2="481.4" stroke="#505050" stroke-width="1"/>
<line x1="645.2" y1="481.4" x2="648.2" y2="481.4" stroke="#505050" stroke-width="1"/>
<line x1="625.9" y1="485.4" x2="628.9" y2="485.4" stroke="#505050" stroke-width="1"/>
<line x1="645.2" y1="485.4" x2="648.2" y2="485.4" stroke="#505050" stroke-width="1"/>
<line x1="625.9" y1="489.4" x2="628.9" y2="489.4" stroke="#505050" stroke-width="1"/>
<line x1="645.2" y1="489.4" x2="648.2" y2="489.4" stroke="#505050" stroke-width="1"/>
<line x1="625.9" y1="493.4" x2="628.9" y2="493.4" stroke="#505050" stroke-width="1"/>
<line x1="645.2" y1="493.4" x2="648.2" y2="493.4" stroke="#505050" stroke-width="1"/>
<line x1="625.9" y1="497.4" x2="628.9" y2="497.4" stroke="#505050" stroke-width="1"/>
<line x1="645.2" y1="497.4" x2="648.2" y2="497.4" stroke="#505050" stroke-width="1"/>
<line x1="625.9" y1="501.4" x2="628.9" y2="501.4" stroke="#505050" stroke-width="1"/>
<line x1="645.2" y1="501.4" x2="648.2" y2="501.4" stroke="#505050" stroke-width="1"/>
<line x1="625.9" y1="505.4" x2="628.9" y2="505.4" stroke="#505050" stroke-width="1"/>
<line x1="645.2" y1="505.4" x2="648.2" y2="505.4" stroke="#505050" stroke-width="1"/>
<line x1="625.9" y1="509.4" x2="628.9" y2="509.4" stroke="#505050" stroke-width="1"/>
<line x1="645.2" y1="509.4" x2="648.2" y2="509.4" stroke="#505050" stroke-width="1"/>
<line x1="625.9" y1="513.4" x2="628.9" y2="513.4" stroke="#505050" stroke-width="1"/>
<line x1="645.2" y1="513.4" x2="648.2" y2="513.4" stroke="#505050" stroke-width="1"/>
<line x1="625.9" y1="517.4" x2="628.9" y2="517.4" stroke="#505050" stroke-width="1"/>
<line x1="645.2" y1="517.4" x2="648.2" y2="517.4" stroke="#505050" stroke-width="1"/>
<line x1="625.9" y1="521.4" x2="628.9" y2="521.4" stroke="#505050" stroke-width="1"/>
<line x1="645.2" y1="521.4" x2="648.2" y2="521.4" stroke="#505050" stroke-width="1"/>
<line x1="625.9" y1="525.4" x2="628.9" y2="525.4" stroke="#505050" stroke-width="1"/>
<line x1="645.2" y1="525.4" x2="648.2" y2="525.4" stroke="#505050" stroke-width="1"/>
<line x1="625.9" y1="529.4" x2="628.9" y2="529.4" stroke="#505050" stroke-width="1"/>
<line x1="645.2" y1="529.4" x2="648.2" y2="529.4" stroke="#505050" stroke-width="1"/>
<line x1="625.9" y1="533.4" x2="628.9" y2="533.4" stroke="#505050" stroke-width="1"/>
<line x1="645.2" y1="533.4" x2="648.2" y2="533.4" stroke="#505050" stroke-width="1"/>
<line x1="625.9" y1="537.4" x2="628.9" y2="537.4" stroke="#505050" stroke-width="1"/>
<line x1="645.2" y1="537.4" x2="648.2" y2="537.4" stroke="#505050" stroke-width="1"/>
<line x1="625.9" y1="541.4" x2="628.9" y2="541.4" stroke="#505050" stroke-width="1"/>
<line x1="645.2" y1="541.4" x2="648.2" y2="541.4" stroke="#505050" stroke-width="1"/>
<line x1="625.9" y1="545.4" x2="628.9" y2="545.4" stroke="#505050" stroke-width="1"/>
<line x1="645.2" y1="545.4" x2="648.2" y2="545.4" stroke="#505050" stroke-width="1"/>
<clipPath id="cl3"><rect x="624.9" y="475.4" width="24.3" height="74.9"/></clipPath><g clip-path="url(#cl3)">
<text x="637" y="494.1" font-size="10" fill="#202840" text-anchor="middle" font-weight="normal" stroke="#202840" stroke-width="0.25" >-50</text>
<text x="637" y="514.1" font-size="10" fill="#202840" text-anchor="middle" font-weight="normal" stroke="#202840" stroke-width="0.25" >-40</text>
<text x="637" y="533.6" font-size="10" fill="#202840" text-anchor="middle" font-weight="normal" stroke="#202840" stroke-width="0.25" >-30</text>
</g>
<polygon points="618.6,506.5 623.6,511 618.6,515.5" fill="#ff0000"/>
<polygon points="655.2,506.5 650.2,511 655.2,515.5" fill="#ff0000"/>
<path d="M611.8 500.2 L607.3 507.2 H616.3 Z M611.8 521.8 L607.3 514.8 H616.3 Z" fill="#e82090"/>
<line x1="612" y1="505" x2="612" y2="517" stroke="#e82090" stroke-width="2"/>
<text transform="translate(680.4 476.2) scale(1 1.02)" font-size="9.5" fill="#303030" text-anchor="end" font-weight="normal" stroke="#303030" stroke-width="0.25" >AC</text>
<text transform="translate(680.4 489.6) scale(1 1.02)" font-size="9.5" fill="#303030" text-anchor="end" font-weight="normal" stroke="#303030" stroke-width="0.25" >DC</text>
<text transform="translate(680.4 503.9) scale(1 1.02)" font-size="9.5" fill="#303030" text-anchor="end" font-weight="normal" stroke="#303030" stroke-width="0.25" >GND</text>
<text transform="translate(680.4 517.9) scale(1 1.02)" font-size="9.5" fill="#303030" text-anchor="end" font-weight="normal" stroke="#303030" stroke-width="0.25" >OFF</text>
<rect x="683" y="462.9" width="14" height="62.1" fill="#a8a8a8" stroke="#101010" stroke-width="1.5" />
<line x1="684.5" y1="464.4" x2="695.5" y2="464.4" stroke="#e0e0e0" stroke-width="1"/>
<line x1="690" y1="467.9" x2="690" y2="520" stroke="#101010" stroke-width="2.2"/>
<rect x="685.5" y="464.5" width="9" height="13.5" fill="#c8c8c8" stroke="#606060" stroke-width="1" />
<line x1="687" y1="467.5" x2="693" y2="467.5" stroke="#505050" stroke-width="1"/>
<line x1="687" y1="470" x2="693" y2="470" stroke="#505050" stroke-width="1"/>
<line x1="687" y1="472.5" x2="693" y2="472.5" stroke="#505050" stroke-width="1"/>
<line x1="687" y1="475" x2="693" y2="475" stroke="#505050" stroke-width="1"/>
<text transform="translate(680.6 537.3) scale(1 1.02)" font-size="9.5" fill="#303030" text-anchor="end" font-weight="normal" stroke="#303030" stroke-width="0.25" >Invert</text>
<rect x="683.2" y="527" width="13.8" height="14.1" fill="url(#btnD)" stroke="#202020" stroke-width="1" />
<line x1="683.2" y1="527.5" x2="697" y2="527.5" stroke="#e0e0e0" stroke-width="1"/>
<text transform="translate(680.6 553.6) scale(1 1.02)" font-size="9.5" fill="#303030" text-anchor="end" font-weight="normal" stroke="#303030" stroke-width="0.25" >C+D</text>
<rect x="683.2" y="543.2" width="13.8" height="14" fill="url(#btnD)" stroke="#202020" stroke-width="1" />
<line x1="683.2" y1="543.7" x2="697" y2="543.7" stroke="#e0e0e0" stroke-width="1"/>
<path d="M608.8 642.06 V598.3 A44.2 44.2 0 0 1 697.2 598.3 V642.06 H671.5 V620.3 H634 V642.06 Z" fill="#ffffff" stroke="#505050" stroke-width="1.2"/>
<line x1="671.47" y1="574.66" x2="680.83" y2="562.68" stroke="#a4a4a4" stroke-width="3"/>
<line x1="642.14" y1="571.41" x2="640.64" y2="567.7" stroke="#202020" stroke-width="1"/>
<text x="638.54" y="565.21" font-size="7.6" fill="#202020" text-anchor="middle" font-weight="normal" stroke="#202020" stroke-width="0.25" >0.5</text>
<line x1="653" y1="569.3" x2="653" y2="565.3" stroke="#202020" stroke-width="1"/>
<text x="653" y="562.4" font-size="7.6" fill="#202020" text-anchor="middle" font-weight="normal" stroke="#202020" stroke-width="0.25" >0.2</text>
<line x1="663.86" y1="571.41" x2="665.36" y2="567.7" stroke="#202020" stroke-width="1"/>
<text x="667.46" y="565.21" font-size="7.6" fill="#202020" text-anchor="middle" font-weight="normal" stroke="#202020" stroke-width="0.25" >0.1</text>
<line x1="632.49" y1="577.79" x2="629.67" y2="574.97" stroke="#202020" stroke-width="1"/>
<text x="625.71" y="573.71" font-size="7.6" fill="#202020" text-anchor="middle" font-weight="normal" stroke="#202020" stroke-width="0.25" >1</text>
<line x1="625.75" y1="588.38" x2="621.99" y2="587.01" stroke="#202020" stroke-width="1"/>
<text x="616.73" y="587.8" font-size="7.6" fill="#202020" text-anchor="middle" font-weight="normal" stroke="#202020" stroke-width="0.25" >2</text>
<line x1="624" y1="598.3" x2="620" y2="598.3" stroke="#202020" stroke-width="1"/>
<text x="614.4" y="601" font-size="7.6" fill="#202020" text-anchor="middle" font-weight="normal" stroke="#202020" stroke-width="0.25" >5</text>
<line x1="626.11" y1="609.16" x2="622.4" y2="610.66" stroke="#202020" stroke-width="1"/>
<text x="617.21" y="615.46" font-size="7.6" fill="#202020" text-anchor="middle" font-weight="normal" stroke="#202020" stroke-width="0.25" >10</text>
<line x1="631.79" y1="618.08" x2="628.87" y2="620.81" stroke="#202020" stroke-width="1"/>
<text x="624.77" y="627.33" font-size="7.6" fill="#202020" text-anchor="middle" font-weight="normal" stroke="#202020" stroke-width="0.25" >20</text>
<line x1="674.21" y1="578.52" x2="677.13" y2="575.79" stroke="#202020" stroke-width="1"/>
<text x="681.23" y="574.67" font-size="7.6" fill="#202020" text-anchor="middle" font-weight="normal" stroke="#202020" stroke-width="0.25" >50</text>
<line x1="680.25" y1="588.38" x2="684.01" y2="587.01" stroke="#202020" stroke-width="1"/>
<text x="689.27" y="587.8" font-size="7.6" fill="#202020" text-anchor="middle" font-weight="normal" stroke="#202020" stroke-width="0.25" >20</text>
<line x1="682" y1="598.3" x2="686" y2="598.3" stroke="#202020" stroke-width="1"/>
<text x="691.6" y="601" font-size="7.6" fill="#202020" text-anchor="middle" font-weight="normal" stroke="#202020" stroke-width="0.25" >10</text>
<line x1="679.69" y1="609.63" x2="683.38" y2="611.19" stroke="#202020" stroke-width="1"/>
<text x="688.53" y="616.08" font-size="7.6" fill="#202020" text-anchor="middle" font-weight="normal" stroke="#202020" stroke-width="0.25" >5</text>
<line x1="673.51" y1="618.81" x2="676.33" y2="621.63" stroke="#202020" stroke-width="1"/>
<text x="680.29" y="628.29" font-size="7.6" fill="#202020" text-anchor="middle" font-weight="normal" stroke="#202020" stroke-width="0.25" >2</text>
<text x="620.6" y="637.8" font-size="10" fill="#202020" text-anchor="middle" font-weight="normal" stroke="#202020" stroke-width="0.25" >V</text>
<text x="684.9" y="637.8" font-size="10" fill="#202020" text-anchor="middle" font-weight="normal" stroke="#202020" stroke-width="0.25" >mV</text>
<rect x="635.6" y="629.3" width="35.2" height="12.9" fill="#ffffff" stroke="none" stroke-width="2" />
<line x1="635.6" y1="629.8" x2="670.8" y2="629.8" stroke="#101010" stroke-width="1.5"/>
<line x1="636.1" y1="629.3" x2="636.1" y2="642.2" stroke="#101010" stroke-width="1.5"/>
<text x="638" y="638.9" font-size="9.8" fill="#3030a0" text-anchor="start" font-weight="normal" stroke="#3030a0" stroke-width="0.25" >5</text>
<circle cx="653" cy="598.3" r="29.6" fill="url(#knobO)"/>
<circle cx="653" cy="598.3" r="16.4" fill="url(#ringG)"/>
<circle cx="653" cy="598.3" r="14.2" fill="url(#knobI)"/>
<polygon points="625.5,598.3 634,592.7 634,603.9" fill="#e82090"/>
<polygon points="655,606.3 662,602.3 662,609.3" fill="#e82090"/>
<text transform="translate(557.1 663.7) scale(1 1.02)" font-size="11.5" fill="#2898e8" text-anchor="middle" font-weight="bold" >Channel B</text>
<text transform="translate(541.2 682.3) scale(1 1.02)" font-size="9" fill="#303030" text-anchor="middle" font-weight="normal" stroke="#303030" stroke-width="0.25" >Position</text>
<rect x="523" y="685.4" width="38.6" height="78.9" fill="#a8a8a8" stroke="#101010" stroke-width="1.5" />
<line x1="524" y1="686.6" x2="560.6" y2="686.6" stroke="#e8e8e8" stroke-width="1"/>
<rect x="530.3" y="687.4" width="24.3" height="74.9" fill="url(#scaleV)"/>
<line x1="555.1" y1="687.4" x2="555.1" y2="762.3" stroke="#101010" stroke-width="1.5"/>
<line x1="531.3" y1="689.4" x2="534.3" y2="689.4" stroke="#505050" stroke-width="1"/>
<line x1="550.6" y1="689.4" x2="553.6" y2="689.4" stroke="#505050" stroke-width="1"/>
<line x1="531.3" y1="693.4" x2="534.3" y2="693.4" stroke="#505050" stroke-width="1"/>
<line x1="550.6" y1="693.4" x2="553.6" y2="693.4" stroke="#505050" stroke-width="1"/>
<line x1="531.3" y1="697.4" x2="534.3" y2="697.4" stroke="#505050" stroke-width="1"/>
<line x1="550.6" y1="697.4" x2="553.6" y2="697.4" stroke="#505050" stroke-width="1"/>
<line x1="531.3" y1="701.4" x2="534.3" y2="701.4" stroke="#505050" stroke-width="1"/>
<line x1="550.6" y1="701.4" x2="553.6" y2="701.4" stroke="#505050" stroke-width="1"/>
<line x1="531.3" y1="705.4" x2="534.3" y2="705.4" stroke="#505050" stroke-width="1"/>
<line x1="550.6" y1="705.4" x2="553.6" y2="705.4" stroke="#505050" stroke-width="1"/>
<line x1="531.3" y1="709.4" x2="534.3" y2="709.4" stroke="#505050" stroke-width="1"/>
<line x1="550.6" y1="709.4" x2="553.6" y2="709.4" stroke="#505050" stroke-width="1"/>
<line x1="531.3" y1="713.4" x2="534.3" y2="713.4" stroke="#505050" stroke-width="1"/>
<line x1="550.6" y1="713.4" x2="553.6" y2="713.4" stroke="#505050" stroke-width="1"/>
<line x1="531.3" y1="717.4" x2="534.3" y2="717.4" stroke="#505050" stroke-width="1"/>
<line x1="550.6" y1="717.4" x2="553.6" y2="717.4" stroke="#505050" stroke-width="1"/>
<line x1="531.3" y1="721.4" x2="534.3" y2="721.4" stroke="#505050" stroke-width="1"/>
<line x1="550.6" y1="721.4" x2="553.6" y2="721.4" stroke="#505050" stroke-width="1"/>
<line x1="531.3" y1="725.4" x2="534.3" y2="725.4" stroke="#505050" stroke-width="1"/>
<line x1="550.6" y1="725.4" x2="553.6" y2="725.4" stroke="#505050" stroke-width="1"/>
<line x1="531.3" y1="729.4" x2="534.3" y2="729.4" stroke="#505050" stroke-width="1"/>
<line x1="550.6" y1="729.4" x2="553.6" y2="729.4" stroke="#505050" stroke-width="1"/>
<line x1="531.3" y1="733.4" x2="534.3" y2="733.4" stroke="#505050" stroke-width="1"/>
<line x1="550.6" y1="733.4" x2="553.6" y2="733.4" stroke="#505050" stroke-width="1"/>
<line x1="531.3" y1="737.4" x2="534.3" y2="737.4" stroke="#505050" stroke-width="1"/>
<line x1="550.6" y1="737.4" x2="553.6" y2="737.4" stroke="#505050" stroke-width="1"/>
<line x1="531.3" y1="741.4" x2="534.3" y2="741.4" stroke="#505050" stroke-width="1"/>
<line x1="550.6" y1="741.4" x2="553.6" y2="741.4" stroke="#505050" stroke-width="1"/>
<line x1="531.3" y1="745.4" x2="534.3" y2="745.4" stroke="#505050" stroke-width="1"/>
<line x1="550.6" y1="745.4" x2="553.6" y2="745.4" stroke="#505050" stroke-width="1"/>
<line x1="531.3" y1="749.4" x2="534.3" y2="749.4" stroke="#505050" stroke-width="1"/>
<line x1="550.6" y1="749.4" x2="553.6" y2="749.4" stroke="#505050" stroke-width="1"/>
<line x1="531.3" y1="753.4" x2="534.3" y2="753.4" stroke="#505050" stroke-width="1"/>
<line x1="550.6" y1="753.4" x2="553.6" y2="753.4" stroke="#505050" stroke-width="1"/>
<line x1="531.3" y1="757.4" x2="534.3" y2="757.4" stroke="#505050" stroke-width="1"/>
<line x1="550.6" y1="757.4" x2="553.6" y2="757.4" stroke="#505050" stroke-width="1"/>
<clipPath id="cl4"><rect x="530.3" y="687.4" width="24.3" height="74.9"/></clipPath><g clip-path="url(#cl4)">
<text x="542.4" y="706.1" font-size="10" fill="#202840" text-anchor="middle" font-weight="normal" stroke="#202840" stroke-width="0.25" >30</text>
<text x="542.4" y="726.1" font-size="10" fill="#202840" text-anchor="middle" font-weight="normal" stroke="#202840" stroke-width="0.25" >40</text>
<text x="542.4" y="745.6" font-size="10" fill="#202840" text-anchor="middle" font-weight="normal" stroke="#202840" stroke-width="0.25" >50</text>
</g>
<polygon points="524,718.5 529,723 524,727.5" fill="#ff0000"/>
<polygon points="560.6,718.5 555.6,723 560.6,727.5" fill="#ff0000"/>
<path d="M517.2 712.2 L512.7 719.2 H521.7 Z M517.2 733.8 L512.7 726.8 H521.7 Z" fill="#2898e8"/>
<line x1="517" y1="717" x2="517" y2="729" stroke="#2898e8" stroke-width="2"/>
<text transform="translate(585.8 688.2) scale(1 1.02)" font-size="9.5" fill="#303030" text-anchor="end" font-weight="normal" stroke="#303030" stroke-width="0.25" >AC</text>
<text transform="translate(585.8 701.6) scale(1 1.02)" font-size="9.5" fill="#303030" text-anchor="end" font-weight="normal" stroke="#303030" stroke-width="0.25" >DC</text>
<text transform="translate(585.8 715.9) scale(1 1.02)" font-size="9.5" fill="#303030" text-anchor="end" font-weight="normal" stroke="#303030" stroke-width="0.25" >GND</text>
<text transform="translate(585.8 729.9) scale(1 1.02)" font-size="9.5" fill="#303030" text-anchor="end" font-weight="normal" stroke="#303030" stroke-width="0.25" >OFF</text>
<rect x="588.4" y="674.9" width="14" height="62.1" fill="#a8a8a8" stroke="#101010" stroke-width="1.5" />
<line x1="589.9" y1="676.4" x2="600.9" y2="676.4" stroke="#e0e0e0" stroke-width="1"/>
<line x1="595.4" y1="679.9" x2="595.4" y2="732" stroke="#101010" stroke-width="2.2"/>
<rect x="590.9" y="676.5" width="9" height="13.5" fill="#c8c8c8" stroke="#606060" stroke-width="1" />
<line x1="592.4" y1="679.5" x2="598.4" y2="679.5" stroke="#505050" stroke-width="1"/>
<line x1="592.4" y1="682" x2="598.4" y2="682" stroke="#505050" stroke-width="1"/>
<line x1="592.4" y1="684.5" x2="598.4" y2="684.5" stroke="#505050" stroke-width="1"/>
<line x1="592.4" y1="687" x2="598.4" y2="687" stroke="#505050" stroke-width="1"/>
<text transform="translate(586 749.3) scale(1 1.02)" font-size="9.5" fill="#303030" text-anchor="end" font-weight="normal" stroke="#303030" stroke-width="0.25" >Invert</text>
<rect x="588.6" y="739" width="13.8" height="14.1" fill="url(#btnD)" stroke="#202020" stroke-width="1" />
<line x1="588.6" y1="739.5" x2="602.4" y2="739.5" stroke="#e0e0e0" stroke-width="1"/>
<path d="M514.2 854.06 V810.3 A44.2 44.2 0 0 1 602.6 810.3 V854.06 H576.9 V832.3 H539.4 V854.06 Z" fill="#ffffff" stroke="#505050" stroke-width="1.2"/>
<line x1="576.87" y1="786.66" x2="586.23" y2="774.68" stroke="#a4a4a4" stroke-width="3"/>
<line x1="547.54" y1="783.41" x2="546.04" y2="779.7" stroke="#202020" stroke-width="1"/>
<text x="543.94" y="777.21" font-size="7.6" fill="#202020" text-anchor="middle" font-weight="normal" stroke="#202020" stroke-width="0.25" >0.5</text>
<line x1="558.4" y1="781.3" x2="558.4" y2="777.3" stroke="#202020" stroke-width="1"/>
<text x="558.4" y="774.4" font-size="7.6" fill="#202020" text-anchor="middle" font-weight="normal" stroke="#202020" stroke-width="0.25" >0.2</text>
<line x1="569.26" y1="783.41" x2="570.76" y2="779.7" stroke="#202020" stroke-width="1"/>
<text x="572.86" y="777.21" font-size="7.6" fill="#202020" text-anchor="middle" font-weight="normal" stroke="#202020" stroke-width="0.25" >0.1</text>
<line x1="537.89" y1="789.79" x2="535.07" y2="786.97" stroke="#202020" stroke-width="1"/>
<text x="531.11" y="785.71" font-size="7.6" fill="#202020" text-anchor="middle" font-weight="normal" stroke="#202020" stroke-width="0.25" >1</text>
<line x1="531.15" y1="800.38" x2="527.39" y2="799.01" stroke="#202020" stroke-width="1"/>
<text x="522.13" y="799.8" font-size="7.6" fill="#202020" text-anchor="middle" font-weight="normal" stroke="#202020" stroke-width="0.25" >2</text>
<line x1="529.4" y1="810.3" x2="525.4" y2="810.3" stroke="#202020" stroke-width="1"/>
<text x="519.8" y="813" font-size="7.6" fill="#202020" text-anchor="middle" font-weight="normal" stroke="#202020" stroke-width="0.25" >5</text>
<line x1="531.51" y1="821.16" x2="527.8" y2="822.66" stroke="#202020" stroke-width="1"/>
<text x="522.61" y="827.46" font-size="7.6" fill="#202020" text-anchor="middle" font-weight="normal" stroke="#202020" stroke-width="0.25" >10</text>
<line x1="537.19" y1="830.08" x2="534.27" y2="832.81" stroke="#202020" stroke-width="1"/>
<text x="530.17" y="839.33" font-size="7.6" fill="#202020" text-anchor="middle" font-weight="normal" stroke="#202020" stroke-width="0.25" >20</text>
<line x1="579.61" y1="790.52" x2="582.53" y2="787.79" stroke="#202020" stroke-width="1"/>
<text x="586.63" y="786.67" font-size="7.6" fill="#202020" text-anchor="middle" font-weight="normal" stroke="#202020" stroke-width="0.25" >50</text>
<line x1="585.65" y1="800.38" x2="589.41" y2="799.01" stroke="#202020" stroke-width="1"/>
<text x="594.67" y="799.8" font-size="7.6" fill="#202020" text-anchor="middle" font-weight="normal" stroke="#202020" stroke-width="0.25" >20</text>
<line x1="587.4" y1="810.3" x2="591.4" y2="810.3" stroke="#202020" stroke-width="1"/>
<text x="597" y="813" font-size="7.6" fill="#202020" text-anchor="middle" font-weight="normal" stroke="#202020" stroke-width="0.25" >10</text>
<line x1="585.09" y1="821.63" x2="588.78" y2="823.19" stroke="#202020" stroke-width="1"/>
<text x="593.93" y="828.08" font-size="7.6" fill="#202020" text-anchor="middle" font-weight="normal" stroke="#202020" stroke-width="0.25" >5</text>
<line x1="578.91" y1="830.81" x2="581.73" y2="833.63" stroke="#202020" stroke-width="1"/>
<text x="585.69" y="840.29" font-size="7.6" fill="#202020" text-anchor="middle" font-weight="normal" stroke="#202020" stroke-width="0.25" >2</text>
<text x="526" y="849.8" font-size="10" fill="#202020" text-anchor="middle" font-weight="normal" stroke="#202020" stroke-width="0.25" >V</text>
<text x="590.3" y="849.8" font-size="10" fill="#202020" text-anchor="middle" font-weight="normal" stroke="#202020" stroke-width="0.25" >mV</text>
<rect x="541" y="841.3" width="35.2" height="12.9" fill="#ffffff" stroke="none" stroke-width="2" />
<line x1="541" y1="841.8" x2="576.2" y2="841.8" stroke="#101010" stroke-width="1.5"/>
<line x1="541.5" y1="841.3" x2="541.5" y2="854.2" stroke="#101010" stroke-width="1.5"/>
<text x="543.4" y="850.9" font-size="9.8" fill="#3030a0" text-anchor="start" font-weight="normal" stroke="#3030a0" stroke-width="0.25" >5</text>
<circle cx="558.4" cy="810.3" r="29.6" fill="url(#knobO)"/>
<circle cx="558.4" cy="810.3" r="16.4" fill="url(#ringG)"/>
<circle cx="558.4" cy="810.3" r="14.2" fill="url(#knobI)"/>
<polygon points="530.9,810.3 539.4,804.7 539.4,815.9" fill="#2898e8"/>
<polygon points="560.4,818.3 567.4,814.3 567.4,821.3" fill="#2898e8"/>
<text transform="translate(651.7 663.7) scale(1 1.02)" font-size="11.5" fill="#10a040" text-anchor="middle" font-weight="bold" >Channel D</text>
<text transform="translate(635.8 682.3) scale(1 1.02)" font-size="9" fill="#303030" text-anchor="middle" font-weight="normal" stroke="#303030" stroke-width="0.25" >Position</text>
<rect x="617.6" y="685.4" width="38.6" height="78.9" fill="#a8a8a8" stroke="#101010" stroke-width="1.5" />
<line x1="618.6" y1="686.6" x2="655.2" y2="686.6" stroke="#e8e8e8" stroke-width="1"/>
<rect x="624.9" y="687.4" width="24.3" height="74.9" fill="url(#scaleV)"/>
<line x1="649.7" y1="687.4" x2="649.7" y2="762.3" stroke="#101010" stroke-width="1.5"/>
<line x1="625.9" y1="689.4" x2="628.9" y2="689.4" stroke="#505050" stroke-width="1"/>
<line x1="645.2" y1="689.4" x2="648.2" y2="689.4" stroke="#505050" stroke-width="1"/>
<line x1="625.9" y1="693.4" x2="628.9" y2="693.4" stroke="#505050" stroke-width="1"/>
<line x1="645.2" y1="693.4" x2="648.2" y2="693.4" stroke="#505050" stroke-width="1"/>
<line x1="625.9" y1="697.4" x2="628.9" y2="697.4" stroke="#505050" stroke-width="1"/>
<line x1="645.2" y1="697.4" x2="648.2" y2="697.4" stroke="#505050" stroke-width="1"/>
<line x1="625.9" y1="701.4" x2="628.9" y2="701.4" stroke="#505050" stroke-width="1"/>
<line x1="645.2" y1="701.4" x2="648.2" y2="701.4" stroke="#505050" stroke-width="1"/>
<line x1="625.9" y1="705.4" x2="628.9" y2="705.4" stroke="#505050" stroke-width="1"/>
<line x1="645.2" y1="705.4" x2="648.2" y2="705.4" stroke="#505050" stroke-width="1"/>
<line x1="625.9" y1="709.4" x2="628.9" y2="709.4" stroke="#505050" stroke-width="1"/>
<line x1="645.2" y1="709.4" x2="648.2" y2="709.4" stroke="#505050" stroke-width="1"/>
<line x1="625.9" y1="713.4" x2="628.9" y2="713.4" stroke="#505050" stroke-width="1"/>
<line x1="645.2" y1="713.4" x2="648.2" y2="713.4" stroke="#505050" stroke-width="1"/>
<line x1="625.9" y1="717.4" x2="628.9" y2="717.4" stroke="#505050" stroke-width="1"/>
<line x1="645.2" y1="717.4" x2="648.2" y2="717.4" stroke="#505050" stroke-width="1"/>
<line x1="625.9" y1="721.4" x2="628.9" y2="721.4" stroke="#505050" stroke-width="1"/>
<line x1="645.2" y1="721.4" x2="648.2" y2="721.4" stroke="#505050" stroke-width="1"/>
<line x1="625.9" y1="725.4" x2="628.9" y2="725.4" stroke="#505050" stroke-width="1"/>
<line x1="645.2" y1="725.4" x2="648.2" y2="725.4" stroke="#505050" stroke-width="1"/>
<line x1="625.9" y1="729.4" x2="628.9" y2="729.4" stroke="#505050" stroke-width="1"/>
<line x1="645.2" y1="729.4" x2="648.2" y2="729.4" stroke="#505050" stroke-width="1"/>
<line x1="625.9" y1="733.4" x2="628.9" y2="733.4" stroke="#505050" stroke-width="1"/>
<line x1="645.2" y1="733.4" x2="648.2" y2="733.4" stroke="#505050" stroke-width="1"/>
<line x1="625.9" y1="737.4" x2="628.9" y2="737.4" stroke="#505050" stroke-width="1"/>
<line x1="645.2" y1="737.4" x2="648.2" y2="737.4" stroke="#505050" stroke-width="1"/>
<line x1="625.9" y1="741.4" x2="628.9" y2="741.4" stroke="#505050" stroke-width="1"/>
<line x1="645.2" y1="741.4" x2="648.2" y2="741.4" stroke="#505050" stroke-width="1"/>
<line x1="625.9" y1="745.4" x2="628.9" y2="745.4" stroke="#505050" stroke-width="1"/>
<line x1="645.2" y1="745.4" x2="648.2" y2="745.4" stroke="#505050" stroke-width="1"/>
<line x1="625.9" y1="749.4" x2="628.9" y2="749.4" stroke="#505050" stroke-width="1"/>
<line x1="645.2" y1="749.4" x2="648.2" y2="749.4" stroke="#505050" stroke-width="1"/>
<line x1="625.9" y1="753.4" x2="628.9" y2="753.4" stroke="#505050" stroke-width="1"/>
<line x1="645.2" y1="753.4" x2="648.2" y2="753.4" stroke="#505050" stroke-width="1"/>
<line x1="625.9" y1="757.4" x2="628.9" y2="757.4" stroke="#505050" stroke-width="1"/>
<line x1="645.2" y1="757.4" x2="648.2" y2="757.4" stroke="#505050" stroke-width="1"/>
<clipPath id="cl5"><rect x="624.9" y="687.4" width="24.3" height="74.9"/></clipPath><g clip-path="url(#cl5)">
<text x="637" y="706.1" font-size="8.8" fill="#202840" text-anchor="middle" font-weight="normal" stroke="#202840" stroke-width="0.25" >-130</text>
<text x="637" y="726.1" font-size="8.8" fill="#202840" text-anchor="middle" font-weight="normal" stroke="#202840" stroke-width="0.25" >-120</text>
<text x="637" y="745.6" font-size="8.8" fill="#202840" text-anchor="middle" font-weight="normal" stroke="#202840" stroke-width="0.25" >-110</text>
</g>
<polygon points="618.6,718.5 623.6,723 618.6,727.5" fill="#ff0000"/>
<polygon points="655.2,718.5 650.2,723 655.2,727.5" fill="#ff0000"/>
<path d="M611.8 712.2 L607.3 719.2 H616.3 Z M611.8 733.8 L607.3 726.8 H616.3 Z" fill="#10a040"/>
<line x1="612" y1="717" x2="612" y2="729" stroke="#10a040" stroke-width="2"/>
<text transform="translate(680.4 688.2) scale(1 1.02)" font-size="9.5" fill="#303030" text-anchor="end" font-weight="normal" stroke="#303030" stroke-width="0.25" >AC</text>
<text transform="translate(680.4 701.6) scale(1 1.02)" font-size="9.5" fill="#303030" text-anchor="end" font-weight="normal" stroke="#303030" stroke-width="0.25" >DC</text>
<text transform="translate(680.4 715.9) scale(1 1.02)" font-size="9.5" fill="#303030" text-anchor="end" font-weight="normal" stroke="#303030" stroke-width="0.25" >GND</text>
<text transform="translate(680.4 729.9) scale(1 1.02)" font-size="9.5" fill="#303030" text-anchor="end" font-weight="normal" stroke="#303030" stroke-width="0.25" >OFF</text>
<rect x="683" y="674.9" width="14" height="62.1" fill="#a8a8a8" stroke="#101010" stroke-width="1.5" />
<line x1="684.5" y1="676.4" x2="695.5" y2="676.4" stroke="#e0e0e0" stroke-width="1"/>
<line x1="690" y1="679.9" x2="690" y2="732" stroke="#101010" stroke-width="2.2"/>
<rect x="685.5" y="676.5" width="9" height="13.5" fill="#c8c8c8" stroke="#606060" stroke-width="1" />
<line x1="687" y1="679.5" x2="693" y2="679.5" stroke="#505050" stroke-width="1"/>
<line x1="687" y1="682" x2="693" y2="682" stroke="#505050" stroke-width="1"/>
<line x1="687" y1="684.5" x2="693" y2="684.5" stroke="#505050" stroke-width="1"/>
<line x1="687" y1="687" x2="693" y2="687" stroke="#505050" stroke-width="1"/>
<text transform="translate(680.6 749.3) scale(1 1.02)" font-size="9.5" fill="#303030" text-anchor="end" font-weight="normal" stroke="#303030" stroke-width="0.25" >Invert</text>
<rect x="683.2" y="739" width="13.8" height="14.1" fill="url(#btnD)" stroke="#202020" stroke-width="1" />
<line x1="683.2" y1="739.5" x2="697" y2="739.5" stroke="#e0e0e0" stroke-width="1"/>
<path d="M608.8 854.06 V810.3 A44.2 44.2 0 0 1 697.2 810.3 V854.06 H671.5 V832.3 H634 V854.06 Z" fill="#ffffff" stroke="#505050" stroke-width="1.2"/>
<line x1="671.47" y1="786.66" x2="680.83" y2="774.68" stroke="#a4a4a4" stroke-width="3"/>
<line x1="642.14" y1="783.41" x2="640.64" y2="779.7" stroke="#202020" stroke-width="1"/>
<text x="638.54" y="777.21" font-size="7.6" fill="#202020" text-anchor="middle" font-weight="normal" stroke="#202020" stroke-width="0.25" >0.5</text>
<line x1="653" y1="781.3" x2="653" y2="777.3" stroke="#202020" stroke-width="1"/>
<text x="653" y="774.4" font-size="7.6" fill="#202020" text-anchor="middle" font-weight="normal" stroke="#202020" stroke-width="0.25" >0.2</text>
<line x1="663.86" y1="783.41" x2="665.36" y2="779.7" stroke="#202020" stroke-width="1"/>
<text x="667.46" y="777.21" font-size="7.6" fill="#202020" text-anchor="middle" font-weight="normal" stroke="#202020" stroke-width="0.25" >0.1</text>
<line x1="632.49" y1="789.79" x2="629.67" y2="786.97" stroke="#202020" stroke-width="1"/>
<text x="625.71" y="785.71" font-size="7.6" fill="#202020" text-anchor="middle" font-weight="normal" stroke="#202020" stroke-width="0.25" >1</text>
<line x1="625.75" y1="800.38" x2="621.99" y2="799.01" stroke="#202020" stroke-width="1"/>
<text x="616.73" y="799.8" font-size="7.6" fill="#202020" text-anchor="middle" font-weight="normal" stroke="#202020" stroke-width="0.25" >2</text>
<line x1="624" y1="810.3" x2="620" y2="810.3" stroke="#202020" stroke-width="1"/>
<text x="614.4" y="813" font-size="7.6" fill="#202020" text-anchor="middle" font-weight="normal" stroke="#202020" stroke-width="0.25" >5</text>
<line x1="626.11" y1="821.16" x2="622.4" y2="822.66" stroke="#202020" stroke-width="1"/>
<text x="617.21" y="827.46" font-size="7.6" fill="#202020" text-anchor="middle" font-weight="normal" stroke="#202020" stroke-width="0.25" >10</text>
<line x1="631.79" y1="830.08" x2="628.87" y2="832.81" stroke="#202020" stroke-width="1"/>
<text x="624.77" y="839.33" font-size="7.6" fill="#202020" text-anchor="middle" font-weight="normal" stroke="#202020" stroke-width="0.25" >20</text>
<line x1="674.21" y1="790.52" x2="677.13" y2="787.79" stroke="#202020" stroke-width="1"/>
<text x="681.23" y="786.67" font-size="7.6" fill="#202020" text-anchor="middle" font-weight="normal" stroke="#202020" stroke-width="0.25" >50</text>
<line x1="680.25" y1="800.38" x2="684.01" y2="799.01" stroke="#202020" stroke-width="1"/>
<text x="689.27" y="799.8" font-size="7.6" fill="#202020" text-anchor="middle" font-weight="normal" stroke="#202020" stroke-width="0.25" >20</text>
<line x1="682" y1="810.3" x2="686" y2="810.3" stroke="#202020" stroke-width="1"/>
<text x="691.6" y="813" font-size="7.6" fill="#202020" text-anchor="middle" font-weight="normal" stroke="#202020" stroke-width="0.25" >10</text>
<line x1="679.69" y1="821.63" x2="683.38" y2="823.19" stroke="#202020" stroke-width="1"/>
<text x="688.53" y="828.08" font-size="7.6" fill="#202020" text-anchor="middle" font-weight="normal" stroke="#202020" stroke-width="0.25" >5</text>
<line x1="673.51" y1="830.81" x2="676.33" y2="833.63" stroke="#202020" stroke-width="1"/>
<text x="680.29" y="840.29" font-size="7.6" fill="#202020" text-anchor="middle" font-weight="normal" stroke="#202020" stroke-width="0.25" >2</text>
<text x="620.6" y="849.8" font-size="10" fill="#202020" text-anchor="middle" font-weight="normal" stroke="#202020" stroke-width="0.25" >V</text>
<text x="684.9" y="849.8" font-size="10" fill="#202020" text-anchor="middle" font-weight="normal" stroke="#202020" stroke-width="0.25" >mV</text>
<rect x="635.6" y="841.3" width="35.2" height="12.9" fill="#ffffff" stroke="none" stroke-width="2" />
<line x1="635.6" y1="841.8" x2="670.8" y2="841.8" stroke="#101010" stroke-width="1.5"/>
<line x1="636.1" y1="841.3" x2="636.1" y2="854.2" stroke="#101010" stroke-width="1.5"/>
<text x="638" y="850.9" font-size="9.8" fill="#3030a0" text-anchor="start" font-weight="normal" stroke="#3030a0" stroke-width="0.25" >5</text>
<circle cx="653" cy="810.3" r="29.6" fill="url(#knobO)"/>
<circle cx="653" cy="810.3" r="16.4" fill="url(#ringG)"/>
<circle cx="653" cy="810.3" r="14.2" fill="url(#knobI)"/>
<polygon points="625.5,810.3 634,804.7 634,815.9" fill="#10a040"/>
<polygon points="655,818.3 662,814.3 662,821.3" fill="#10a040"/>
</svg></body></html>
